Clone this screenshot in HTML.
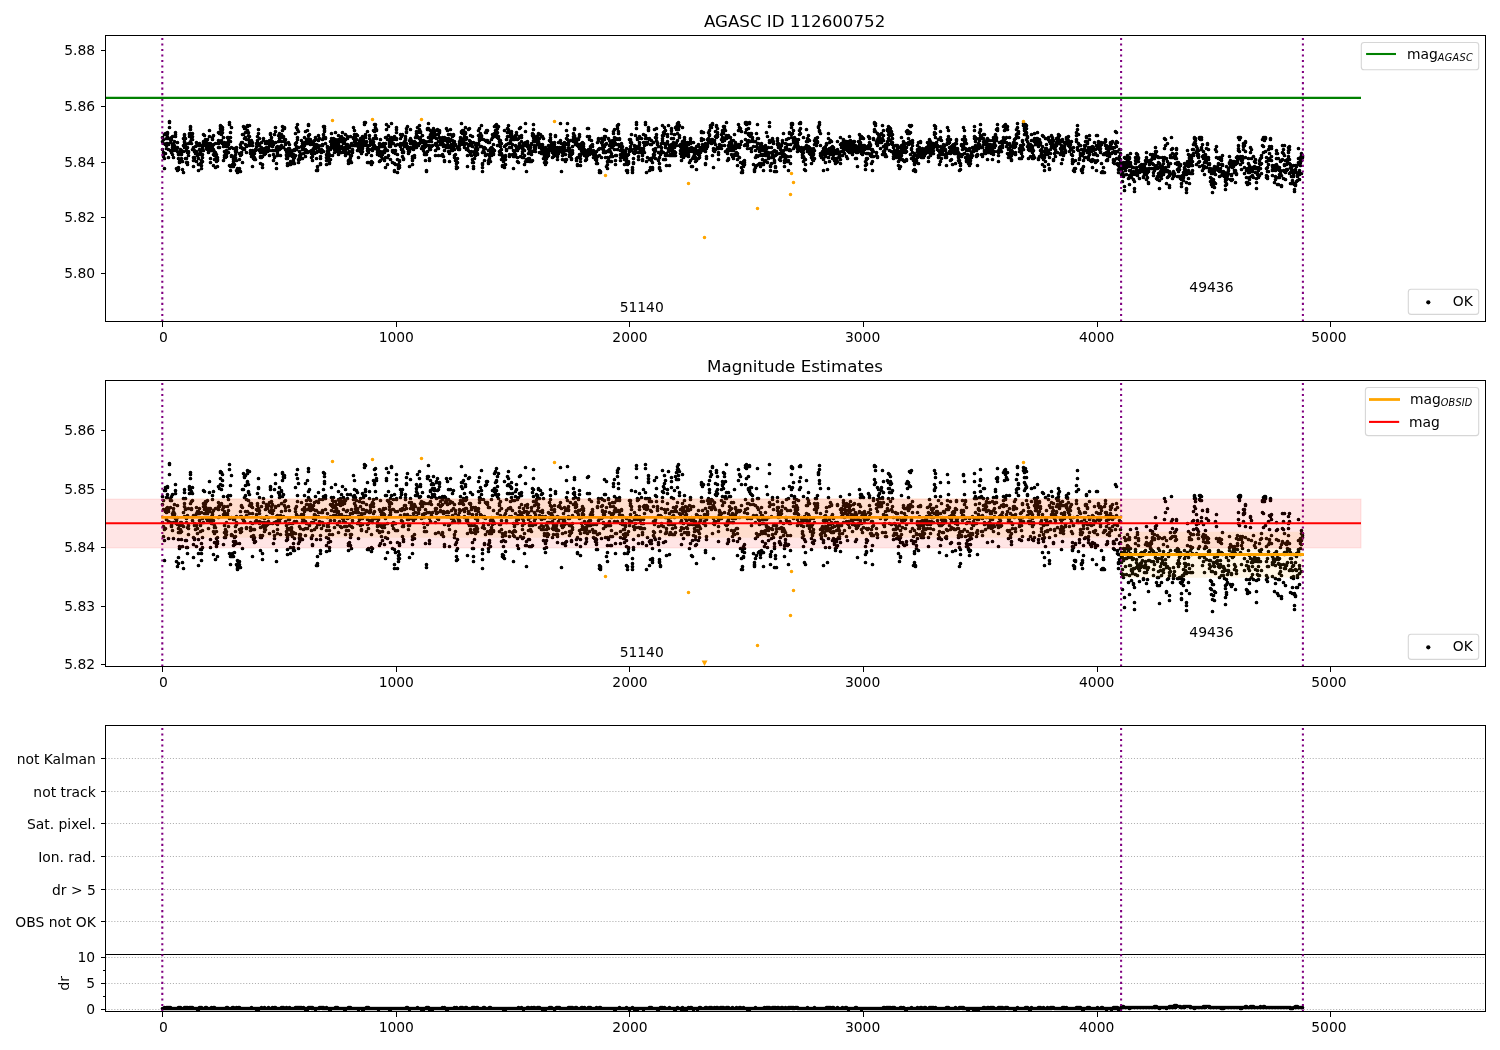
<!DOCTYPE html>
<html><head><meta charset="utf-8"><title>AGASC ID 112600752</title>
<style>html,body{margin:0;padding:0;background:#fff}body{width:1500px;height:1050px;overflow:hidden}</style></head>
<body>
<svg width="1500" height="1050" viewBox="0 0 1500 1050" style="display:block;will-change:transform;font-family:'DejaVu Sans','Liberation Sans',sans-serif;">
<rect width="1500" height="1050" fill="#fff"/>
<defs>
<clipPath id="c1"><rect x="105.5" y="35.5" width="1380.0" height="286.0"/></clipPath>
<clipPath id="c2"><rect x="105.5" y="380.5" width="1380.0" height="286.0"/></clipPath>
<clipPath id="c3"><rect x="105.5" y="725.5" width="1380.0" height="286.0"/></clipPath>
</defs>
<g clip-path="url(#c1)">
<path d="M162.5 137.5h0M162.5 141.5h0M162.5 149.5h0M163.5 139.5h0M163.5 143.5h0M163.5 152.5h0M163.5 156.5h0M164.5 134.5h0M164.5 153.5h0M164.5 158.5h0M164.5 168.5h0M165.5 133.5h0M165.5 134.5h0M165.5 144.5h0M165.5 153.5h0M166.5 138.5h0M166.5 143.5h0M166.5 145.5h0M166.5 148.5h0M167.5 132.5h0M167.5 133.5h0M167.5 136.5h0M167.5 138.5h0M167.5 143.5h0M168.5 144.5h0M168.5 149.5h0M168.5 157.5h0M169.5 121.5h0M169.5 122.5h0M169.5 127.5h0M170.5 138.5h0M170.5 139.5h0M170.5 142.5h0M170.5 150.5h0M171.5 137.5h0M171.5 139.5h0M171.5 151.5h0M171.5 152.5h0M172.5 136.5h0M172.5 145.5h0M172.5 147.5h0M172.5 154.5h0M173.5 143.5h0M173.5 144.5h0M173.5 145.5h0M173.5 150.5h0M173.5 157.5h0M174.5 141.5h0M174.5 145.5h0M174.5 146.5h0M174.5 147.5h0M175.5 132.5h0M175.5 134.5h0M175.5 136.5h0M175.5 148.5h0M176.5 148.5h0M176.5 149.5h0M176.5 150.5h0M176.5 168.5h0M177.5 142.5h0M177.5 147.5h0M177.5 151.5h0M177.5 170.5h0M178.5 153.5h0M178.5 154.5h0M178.5 158.5h0M178.5 167.5h0M178.5 169.5h0M179.5 151.5h0M179.5 161.5h0M179.5 162.5h0M180.5 149.5h0M180.5 150.5h0M180.5 153.5h0M180.5 154.5h0M181.5 150.5h0M181.5 154.5h0M181.5 158.5h0M182.5 151.5h0M182.5 161.5h0M182.5 169.5h0M183.5 138.5h0M183.5 145.5h0M183.5 151.5h0M183.5 172.5h0M184.5 134.5h0M184.5 135.5h0M184.5 141.5h0M184.5 142.5h0M184.5 147.5h0M185.5 138.5h0M185.5 143.5h0M185.5 144.5h0M185.5 158.5h0M186.5 148.5h0M186.5 150.5h0M186.5 158.5h0M186.5 162.5h0M187.5 147.5h0M187.5 152.5h0M187.5 162.5h0M187.5 164.5h0M188.5 143.5h0M188.5 151.5h0M188.5 152.5h0M188.5 155.5h0M189.5 133.5h0M189.5 134.5h0M189.5 136.5h0M190.5 126.5h0M190.5 127.5h0M190.5 129.5h0M190.5 133.5h0M190.5 141.5h0M191.5 135.5h0M191.5 139.5h0M191.5 143.5h0M192.5 133.5h0M192.5 136.5h0M192.5 139.5h0M192.5 149.5h0M193.5 147.5h0M193.5 157.5h0M193.5 160.5h0M193.5 166.5h0M194.5 150.5h0M194.5 151.5h0M194.5 157.5h0M194.5 158.5h0M195.5 146.5h0M195.5 151.5h0M195.5 153.5h0M196.5 142.5h0M196.5 145.5h0M196.5 151.5h0M196.5 161.5h0M197.5 145.5h0M197.5 153.5h0M197.5 155.5h0M198.5 145.5h0M198.5 158.5h0M198.5 164.5h0M198.5 170.5h0M199.5 143.5h0M199.5 145.5h0M199.5 149.5h0M200.5 150.5h0M200.5 151.5h0M200.5 154.5h0M200.5 163.5h0M201.5 145.5h0M201.5 160.5h0M201.5 162.5h0M201.5 165.5h0M201.5 168.5h0M202.5 148.5h0M202.5 154.5h0M202.5 157.5h0M202.5 161.5h0M203.5 134.5h0M203.5 141.5h0M203.5 142.5h0M203.5 150.5h0M204.5 135.5h0M204.5 142.5h0M204.5 144.5h0M204.5 145.5h0M205.5 139.5h0M205.5 141.5h0M205.5 142.5h0M205.5 143.5h0M206.5 140.5h0M206.5 144.5h0M206.5 145.5h0M206.5 148.5h0M207.5 139.5h0M207.5 144.5h0M207.5 145.5h0M207.5 148.5h0M207.5 149.5h0M208.5 143.5h0M208.5 147.5h0M208.5 148.5h0M208.5 152.5h0M209.5 130.5h0M209.5 136.5h0M209.5 143.5h0M209.5 145.5h0M210.5 143.5h0M210.5 150.5h0M210.5 158.5h0M210.5 162.5h0M211.5 147.5h0M211.5 149.5h0M211.5 150.5h0M212.5 137.5h0M212.5 139.5h0M212.5 145.5h0M212.5 146.5h0M213.5 135.5h0M213.5 144.5h0M213.5 149.5h0M213.5 154.5h0M213.5 165.5h0M214.5 151.5h0M214.5 152.5h0M214.5 155.5h0M214.5 159.5h0M215.5 143.5h0M215.5 152.5h0M215.5 159.5h0M215.5 167.5h0M216.5 154.5h0M216.5 157.5h0M216.5 160.5h0M216.5 161.5h0M217.5 157.5h0M217.5 159.5h0M217.5 160.5h0M217.5 166.5h0M218.5 132.5h0M218.5 140.5h0M218.5 142.5h0M218.5 143.5h0M218.5 147.5h0M219.5 133.5h0M219.5 141.5h0M219.5 142.5h0M219.5 147.5h0M220.5 125.5h0M220.5 126.5h0M220.5 128.5h0M220.5 131.5h0M221.5 126.5h0M221.5 134.5h0M221.5 140.5h0M221.5 141.5h0M222.5 127.5h0M222.5 129.5h0M222.5 132.5h0M222.5 143.5h0M223.5 137.5h0M223.5 143.5h0M223.5 146.5h0M223.5 160.5h0M224.5 142.5h0M224.5 144.5h0M224.5 151.5h0M224.5 155.5h0M224.5 157.5h0M225.5 153.5h0M225.5 155.5h0M225.5 156.5h0M225.5 157.5h0M226.5 146.5h0M226.5 150.5h0M226.5 154.5h0M226.5 156.5h0M227.5 137.5h0M227.5 142.5h0M227.5 145.5h0M227.5 146.5h0M228.5 137.5h0M228.5 139.5h0M228.5 144.5h0M228.5 152.5h0M229.5 122.5h0M229.5 124.5h0M229.5 148.5h0M229.5 165.5h0M230.5 132.5h0M230.5 137.5h0M230.5 141.5h0M230.5 166.5h0M230.5 170.5h0M231.5 127.5h0M231.5 147.5h0M231.5 155.5h0M231.5 156.5h0M232.5 156.5h0M232.5 164.5h0M232.5 166.5h0M233.5 148.5h0M233.5 159.5h0M233.5 161.5h0M233.5 166.5h0M234.5 148.5h0M234.5 157.5h0M234.5 160.5h0M234.5 164.5h0M235.5 151.5h0M235.5 154.5h0M235.5 157.5h0M235.5 158.5h0M236.5 147.5h0M236.5 149.5h0M236.5 151.5h0M236.5 160.5h0M236.5 170.5h0M237.5 168.5h0M237.5 171.5h0M237.5 172.5h0M238.5 169.5h0M238.5 170.5h0M239.5 153.5h0M239.5 159.5h0M239.5 168.5h0M239.5 170.5h0M240.5 144.5h0M240.5 147.5h0M240.5 155.5h0M240.5 171.5h0M241.5 142.5h0M241.5 147.5h0M241.5 152.5h0M241.5 154.5h0M242.5 134.5h0M242.5 142.5h0M242.5 148.5h0M242.5 162.5h0M243.5 126.5h0M243.5 134.5h0M243.5 148.5h0M243.5 149.5h0M244.5 128.5h0M244.5 138.5h0M244.5 149.5h0M245.5 127.5h0M245.5 132.5h0M245.5 137.5h0M245.5 144.5h0M246.5 139.5h0M246.5 146.5h0M246.5 152.5h0M247.5 125.5h0M247.5 126.5h0M247.5 130.5h0M247.5 145.5h0M248.5 132.5h0M248.5 135.5h0M248.5 139.5h0M249.5 125.5h0M249.5 136.5h0M249.5 142.5h0M249.5 145.5h0M250.5 141.5h0M250.5 150.5h0M250.5 152.5h0M250.5 153.5h0M251.5 140.5h0M251.5 141.5h0M251.5 142.5h0M251.5 156.5h0M252.5 142.5h0M252.5 145.5h0M252.5 150.5h0M252.5 166.5h0M253.5 153.5h0M253.5 156.5h0M253.5 158.5h0M254.5 153.5h0M254.5 157.5h0M254.5 158.5h0M254.5 159.5h0M255.5 149.5h0M255.5 150.5h0M255.5 159.5h0M256.5 143.5h0M256.5 146.5h0M256.5 149.5h0M257.5 136.5h0M257.5 140.5h0M257.5 142.5h0M257.5 144.5h0M258.5 129.5h0M258.5 133.5h0M258.5 143.5h0M259.5 138.5h0M259.5 144.5h0M259.5 145.5h0M259.5 149.5h0M259.5 150.5h0M260.5 152.5h0M260.5 156.5h0M260.5 157.5h0M260.5 163.5h0M261.5 142.5h0M261.5 147.5h0M261.5 149.5h0M261.5 157.5h0M262.5 152.5h0M262.5 156.5h0M262.5 164.5h0M262.5 167.5h0M263.5 138.5h0M263.5 140.5h0M263.5 150.5h0M264.5 148.5h0M264.5 150.5h0M264.5 151.5h0M264.5 152.5h0M264.5 154.5h0M265.5 143.5h0M265.5 150.5h0M265.5 151.5h0M265.5 153.5h0M266.5 141.5h0M266.5 142.5h0M266.5 147.5h0M266.5 151.5h0M267.5 143.5h0M267.5 149.5h0M267.5 150.5h0M267.5 151.5h0M268.5 141.5h0M268.5 147.5h0M268.5 149.5h0M269.5 140.5h0M269.5 144.5h0M269.5 150.5h0M269.5 155.5h0M270.5 133.5h0M270.5 134.5h0M270.5 140.5h0M270.5 145.5h0M271.5 137.5h0M271.5 140.5h0M271.5 142.5h0M271.5 143.5h0M272.5 141.5h0M272.5 144.5h0M272.5 146.5h0M272.5 150.5h0M273.5 144.5h0M273.5 154.5h0M273.5 160.5h0M274.5 134.5h0M274.5 150.5h0M274.5 156.5h0M274.5 157.5h0M275.5 127.5h0M275.5 131.5h0M275.5 142.5h0M276.5 147.5h0M276.5 149.5h0M276.5 150.5h0M276.5 163.5h0M276.5 168.5h0M277.5 146.5h0M277.5 151.5h0M277.5 153.5h0M277.5 155.5h0M278.5 135.5h0M278.5 141.5h0M278.5 148.5h0M278.5 149.5h0M279.5 133.5h0M279.5 136.5h0M279.5 138.5h0M279.5 149.5h0M280.5 146.5h0M280.5 147.5h0M280.5 148.5h0M280.5 155.5h0M281.5 134.5h0M281.5 135.5h0M281.5 141.5h0M281.5 145.5h0M281.5 147.5h0M282.5 126.5h0M282.5 130.5h0M282.5 137.5h0M283.5 128.5h0M283.5 136.5h0M283.5 147.5h0M284.5 127.5h0M284.5 128.5h0M284.5 140.5h0M284.5 141.5h0M285.5 139.5h0M285.5 142.5h0M285.5 144.5h0M285.5 149.5h0M286.5 151.5h0M286.5 154.5h0M286.5 155.5h0M286.5 158.5h0M287.5 153.5h0M287.5 157.5h0M287.5 158.5h0M287.5 163.5h0M287.5 165.5h0M288.5 142.5h0M288.5 148.5h0M288.5 153.5h0M288.5 155.5h0M289.5 144.5h0M289.5 148.5h0M289.5 150.5h0M289.5 153.5h0M290.5 155.5h0M290.5 161.5h0M290.5 164.5h0M291.5 152.5h0M291.5 153.5h0M291.5 154.5h0M292.5 150.5h0M292.5 155.5h0M292.5 156.5h0M293.5 154.5h0M293.5 159.5h0M293.5 161.5h0M293.5 162.5h0M293.5 163.5h0M294.5 149.5h0M294.5 150.5h0M294.5 157.5h0M294.5 163.5h0M295.5 133.5h0M295.5 143.5h0M295.5 144.5h0M295.5 155.5h0M296.5 127.5h0M296.5 142.5h0M296.5 146.5h0M296.5 149.5h0M297.5 124.5h0M297.5 129.5h0M297.5 137.5h0M297.5 139.5h0M298.5 131.5h0M298.5 147.5h0M298.5 159.5h0M298.5 162.5h0M299.5 151.5h0M299.5 155.5h0M299.5 157.5h0M299.5 159.5h0M300.5 153.5h0M300.5 155.5h0M300.5 157.5h0M301.5 140.5h0M301.5 146.5h0M302.5 143.5h0M302.5 148.5h0M302.5 149.5h0M302.5 158.5h0M303.5 146.5h0M303.5 148.5h0M303.5 149.5h0M303.5 153.5h0M304.5 137.5h0M304.5 142.5h0M304.5 143.5h0M304.5 145.5h0M305.5 131.5h0M305.5 149.5h0M305.5 152.5h0M305.5 156.5h0M306.5 139.5h0M306.5 141.5h0M306.5 150.5h0M307.5 130.5h0M307.5 141.5h0M307.5 143.5h0M307.5 152.5h0M308.5 124.5h0M308.5 125.5h0M308.5 135.5h0M308.5 138.5h0M309.5 134.5h0M309.5 139.5h0M309.5 143.5h0M309.5 151.5h0M310.5 139.5h0M310.5 141.5h0M310.5 142.5h0M310.5 143.5h0M310.5 144.5h0M311.5 150.5h0M311.5 153.5h0M311.5 157.5h0M312.5 142.5h0M312.5 156.5h0M312.5 160.5h0M313.5 141.5h0M313.5 144.5h0M313.5 148.5h0M313.5 150.5h0M314.5 140.5h0M314.5 146.5h0M314.5 153.5h0M315.5 137.5h0M315.5 144.5h0M315.5 146.5h0M315.5 148.5h0M316.5 139.5h0M316.5 144.5h0M316.5 152.5h0M316.5 158.5h0M316.5 170.5h0M317.5 151.5h0M317.5 166.5h0M317.5 169.5h0M317.5 170.5h0M318.5 135.5h0M318.5 140.5h0M318.5 145.5h0M318.5 147.5h0M319.5 138.5h0M319.5 149.5h0M319.5 151.5h0M320.5 156.5h0M320.5 158.5h0M320.5 163.5h0M320.5 164.5h0M321.5 145.5h0M321.5 149.5h0M321.5 152.5h0M322.5 139.5h0M322.5 144.5h0M322.5 145.5h0M322.5 150.5h0M323.5 126.5h0M323.5 134.5h0M323.5 137.5h0M323.5 151.5h0M324.5 126.5h0M324.5 128.5h0M324.5 130.5h0M324.5 131.5h0M325.5 137.5h0M325.5 138.5h0M325.5 143.5h0M326.5 154.5h0M326.5 157.5h0M326.5 160.5h0M326.5 164.5h0M327.5 146.5h0M327.5 147.5h0M327.5 150.5h0M327.5 151.5h0M327.5 152.5h0M328.5 150.5h0M328.5 152.5h0M328.5 157.5h0M328.5 159.5h0M329.5 154.5h0M329.5 155.5h0M329.5 162.5h0M329.5 163.5h0M330.5 141.5h0M330.5 147.5h0M330.5 149.5h0M330.5 159.5h0M331.5 133.5h0M331.5 138.5h0M331.5 142.5h0M331.5 144.5h0M332.5 139.5h0M332.5 141.5h0M332.5 142.5h0M332.5 155.5h0M333.5 138.5h0M333.5 139.5h0M333.5 143.5h0M333.5 146.5h0M333.5 147.5h0M334.5 142.5h0M334.5 144.5h0M334.5 149.5h0M334.5 152.5h0M335.5 132.5h0M335.5 139.5h0M335.5 142.5h0M335.5 146.5h0M336.5 141.5h0M336.5 143.5h0M336.5 144.5h0M337.5 145.5h0M337.5 147.5h0M337.5 150.5h0M337.5 151.5h0M338.5 135.5h0M338.5 139.5h0M338.5 144.5h0M338.5 154.5h0M339.5 139.5h0M339.5 141.5h0M339.5 146.5h0M339.5 149.5h0M340.5 138.5h0M340.5 141.5h0M340.5 147.5h0M340.5 152.5h0M341.5 136.5h0M341.5 141.5h0M341.5 146.5h0M341.5 152.5h0M342.5 132.5h0M342.5 140.5h0M342.5 141.5h0M342.5 148.5h0M343.5 138.5h0M343.5 143.5h0M343.5 148.5h0M343.5 149.5h0M344.5 139.5h0M344.5 140.5h0M344.5 141.5h0M344.5 147.5h0M344.5 152.5h0M345.5 134.5h0M345.5 139.5h0M345.5 150.5h0M345.5 155.5h0M346.5 144.5h0M346.5 147.5h0M346.5 152.5h0M346.5 153.5h0M347.5 136.5h0M347.5 138.5h0M347.5 144.5h0M347.5 148.5h0M348.5 153.5h0M348.5 160.5h0M348.5 161.5h0M348.5 163.5h0M349.5 147.5h0M349.5 151.5h0M349.5 159.5h0M350.5 136.5h0M350.5 145.5h0M350.5 155.5h0M350.5 157.5h0M350.5 160.5h0M351.5 143.5h0M351.5 151.5h0M351.5 155.5h0M351.5 162.5h0M352.5 145.5h0M352.5 149.5h0M352.5 150.5h0M352.5 152.5h0M353.5 127.5h0M353.5 137.5h0M353.5 138.5h0M353.5 145.5h0M354.5 130.5h0M354.5 134.5h0M354.5 137.5h0M354.5 141.5h0M355.5 138.5h0M355.5 142.5h0M355.5 143.5h0M355.5 145.5h0M356.5 134.5h0M356.5 139.5h0M356.5 143.5h0M356.5 145.5h0M357.5 135.5h0M357.5 143.5h0M357.5 150.5h0M358.5 145.5h0M358.5 147.5h0M358.5 150.5h0M358.5 157.5h0M359.5 140.5h0M359.5 147.5h0M359.5 148.5h0M360.5 138.5h0M360.5 142.5h0M360.5 150.5h0M360.5 151.5h0M361.5 145.5h0M361.5 146.5h0M361.5 153.5h0M362.5 136.5h0M362.5 140.5h0M362.5 144.5h0M362.5 148.5h0M362.5 151.5h0M363.5 137.5h0M363.5 138.5h0M363.5 140.5h0M363.5 143.5h0M364.5 122.5h0M364.5 124.5h0M364.5 145.5h0M365.5 122.5h0M365.5 134.5h0M365.5 135.5h0M365.5 137.5h0M366.5 141.5h0M366.5 144.5h0M366.5 154.5h0M367.5 131.5h0M367.5 145.5h0M367.5 148.5h0M367.5 150.5h0M367.5 162.5h0M368.5 150.5h0M368.5 152.5h0M368.5 162.5h0M369.5 135.5h0M369.5 138.5h0M369.5 145.5h0M369.5 149.5h0M370.5 141.5h0M370.5 142.5h0M370.5 144.5h0M371.5 141.5h0M371.5 155.5h0M371.5 161.5h0M371.5 164.5h0M372.5 140.5h0M372.5 148.5h0M372.5 150.5h0M372.5 162.5h0M373.5 130.5h0M373.5 138.5h0M373.5 141.5h0M373.5 142.5h0M373.5 145.5h0M374.5 124.5h0M374.5 131.5h0M374.5 145.5h0M375.5 124.5h0M375.5 127.5h0M375.5 135.5h0M375.5 148.5h0M376.5 129.5h0M376.5 130.5h0M376.5 138.5h0M376.5 147.5h0M377.5 149.5h0M377.5 150.5h0M377.5 152.5h0M377.5 154.5h0M378.5 147.5h0M378.5 148.5h0M378.5 151.5h0M379.5 143.5h0M379.5 144.5h0M379.5 154.5h0M379.5 155.5h0M379.5 161.5h0M380.5 139.5h0M380.5 145.5h0M380.5 151.5h0M380.5 160.5h0M381.5 144.5h0M381.5 146.5h0M381.5 152.5h0M381.5 156.5h0M382.5 152.5h0M382.5 154.5h0M382.5 158.5h0M383.5 143.5h0M383.5 146.5h0M383.5 151.5h0M384.5 146.5h0M384.5 150.5h0M384.5 152.5h0M384.5 160.5h0M385.5 137.5h0M385.5 143.5h0M385.5 148.5h0M385.5 157.5h0M385.5 167.5h0M386.5 124.5h0M386.5 129.5h0M386.5 137.5h0M387.5 139.5h0M387.5 150.5h0M387.5 157.5h0M387.5 164.5h0M388.5 126.5h0M388.5 135.5h0M388.5 139.5h0M388.5 155.5h0M389.5 140.5h0M389.5 142.5h0M389.5 144.5h0M389.5 146.5h0M390.5 138.5h0M390.5 140.5h0M390.5 145.5h0M390.5 146.5h0M390.5 159.5h0M391.5 123.5h0M391.5 137.5h0M391.5 141.5h0M392.5 143.5h0M392.5 150.5h0M392.5 151.5h0M392.5 162.5h0M393.5 139.5h0M393.5 143.5h0M393.5 150.5h0M393.5 152.5h0M394.5 136.5h0M394.5 163.5h0M394.5 170.5h0M394.5 171.5h0M395.5 145.5h0M395.5 150.5h0M395.5 153.5h0M395.5 164.5h0M396.5 127.5h0M396.5 129.5h0M396.5 132.5h0M396.5 138.5h0M396.5 139.5h0M397.5 144.5h0M397.5 154.5h0M397.5 159.5h0M397.5 172.5h0M398.5 164.5h0M398.5 165.5h0M398.5 167.5h0M398.5 168.5h0M399.5 160.5h0M399.5 161.5h0M399.5 165.5h0M399.5 167.5h0M400.5 134.5h0M400.5 138.5h0M400.5 143.5h0M400.5 146.5h0M401.5 135.5h0M401.5 136.5h0M401.5 144.5h0M401.5 149.5h0M402.5 134.5h0M402.5 143.5h0M402.5 149.5h0M402.5 152.5h0M402.5 156.5h0M403.5 151.5h0M403.5 152.5h0M403.5 158.5h0M403.5 159.5h0M404.5 141.5h0M404.5 143.5h0M404.5 144.5h0M404.5 146.5h0M405.5 136.5h0M405.5 138.5h0M405.5 139.5h0M405.5 142.5h0M406.5 128.5h0M406.5 131.5h0M406.5 132.5h0M406.5 143.5h0M407.5 126.5h0M407.5 146.5h0M407.5 148.5h0M408.5 147.5h0M408.5 148.5h0M408.5 151.5h0M408.5 153.5h0M409.5 140.5h0M409.5 150.5h0M409.5 151.5h0M409.5 166.5h0M410.5 129.5h0M410.5 138.5h0M410.5 143.5h0M410.5 147.5h0M411.5 140.5h0M411.5 142.5h0M411.5 148.5h0M412.5 156.5h0M412.5 158.5h0M412.5 160.5h0M412.5 164.5h0M413.5 142.5h0M413.5 143.5h0M413.5 145.5h0M413.5 147.5h0M413.5 149.5h0M414.5 141.5h0M414.5 142.5h0M414.5 155.5h0M414.5 157.5h0M415.5 137.5h0M415.5 142.5h0M415.5 145.5h0M415.5 147.5h0M416.5 131.5h0M416.5 133.5h0M416.5 135.5h0M416.5 147.5h0M417.5 127.5h0M417.5 132.5h0M417.5 136.5h0M417.5 137.5h0M418.5 143.5h0M418.5 144.5h0M418.5 145.5h0M419.5 125.5h0M419.5 129.5h0M419.5 138.5h0M419.5 143.5h0M420.5 131.5h0M420.5 132.5h0M420.5 137.5h0M420.5 140.5h0M421.5 140.5h0M421.5 141.5h0M421.5 142.5h0M421.5 148.5h0M422.5 135.5h0M422.5 141.5h0M422.5 142.5h0M422.5 146.5h0M423.5 140.5h0M423.5 141.5h0M423.5 146.5h0M423.5 150.5h0M424.5 145.5h0M424.5 147.5h0M424.5 152.5h0M424.5 154.5h0M425.5 141.5h0M425.5 143.5h0M425.5 146.5h0M425.5 160.5h0M426.5 154.5h0M426.5 170.5h0M426.5 171.5h0M427.5 128.5h0M427.5 129.5h0M427.5 145.5h0M427.5 151.5h0M428.5 123.5h0M428.5 128.5h0M428.5 137.5h0M428.5 141.5h0M429.5 145.5h0M429.5 148.5h0M429.5 158.5h0M429.5 160.5h0M430.5 130.5h0M430.5 134.5h0M430.5 135.5h0M430.5 140.5h0M430.5 149.5h0M431.5 132.5h0M431.5 138.5h0M431.5 141.5h0M431.5 146.5h0M432.5 131.5h0M432.5 134.5h0M432.5 136.5h0M432.5 145.5h0M433.5 128.5h0M433.5 131.5h0M433.5 134.5h0M433.5 137.5h0M434.5 133.5h0M434.5 134.5h0M434.5 136.5h0M434.5 137.5h0M435.5 143.5h0M435.5 144.5h0M435.5 150.5h0M435.5 155.5h0M436.5 130.5h0M436.5 138.5h0M436.5 143.5h0M436.5 145.5h0M437.5 129.5h0M437.5 134.5h0M437.5 145.5h0M437.5 148.5h0M438.5 134.5h0M438.5 141.5h0M438.5 148.5h0M438.5 155.5h0M439.5 130.5h0M439.5 131.5h0M439.5 132.5h0M439.5 137.5h0M440.5 139.5h0M440.5 142.5h0M440.5 144.5h0M441.5 141.5h0M441.5 144.5h0M441.5 155.5h0M442.5 137.5h0M442.5 139.5h0M442.5 141.5h0M442.5 154.5h0M442.5 155.5h0M443.5 144.5h0M443.5 145.5h0M443.5 146.5h0M443.5 156.5h0M444.5 137.5h0M444.5 150.5h0M444.5 160.5h0M444.5 161.5h0M445.5 138.5h0M445.5 140.5h0M445.5 145.5h0M446.5 128.5h0M446.5 138.5h0M446.5 140.5h0M446.5 147.5h0M447.5 130.5h0M447.5 141.5h0M447.5 144.5h0M447.5 147.5h0M448.5 134.5h0M448.5 138.5h0M448.5 145.5h0M448.5 147.5h0M448.5 151.5h0M449.5 141.5h0M449.5 151.5h0M449.5 153.5h0M449.5 161.5h0M450.5 129.5h0M450.5 134.5h0M450.5 139.5h0M451.5 140.5h0M451.5 144.5h0M451.5 147.5h0M451.5 148.5h0M452.5 136.5h0M452.5 140.5h0M452.5 146.5h0M452.5 150.5h0M453.5 134.5h0M453.5 135.5h0M453.5 143.5h0M453.5 148.5h0M454.5 141.5h0M454.5 149.5h0M454.5 155.5h0M454.5 157.5h0M455.5 144.5h0M455.5 145.5h0M455.5 154.5h0M455.5 160.5h0M456.5 159.5h0M456.5 163.5h0M456.5 166.5h0M456.5 168.5h0M457.5 147.5h0M457.5 158.5h0M457.5 162.5h0M457.5 167.5h0M458.5 146.5h0M458.5 148.5h0M458.5 149.5h0M459.5 141.5h0M459.5 143.5h0M459.5 145.5h0M459.5 148.5h0M459.5 149.5h0M460.5 137.5h0M460.5 139.5h0M460.5 144.5h0M461.5 123.5h0M461.5 131.5h0M461.5 132.5h0M461.5 140.5h0M462.5 130.5h0M462.5 133.5h0M462.5 140.5h0M462.5 141.5h0M463.5 130.5h0M463.5 138.5h0M463.5 141.5h0M463.5 144.5h0M464.5 136.5h0M464.5 144.5h0M464.5 147.5h0M465.5 127.5h0M465.5 132.5h0M465.5 133.5h0M465.5 139.5h0M465.5 143.5h0M466.5 137.5h0M466.5 138.5h0M466.5 143.5h0M466.5 149.5h0M467.5 148.5h0M467.5 149.5h0M467.5 155.5h0M467.5 166.5h0M468.5 129.5h0M468.5 144.5h0M468.5 145.5h0M468.5 150.5h0M469.5 128.5h0M469.5 140.5h0M469.5 145.5h0M469.5 151.5h0M470.5 135.5h0M470.5 141.5h0M470.5 153.5h0M470.5 154.5h0M471.5 142.5h0M471.5 144.5h0M471.5 151.5h0M471.5 155.5h0M472.5 136.5h0M472.5 146.5h0M472.5 159.5h0M472.5 162.5h0M473.5 142.5h0M473.5 162.5h0M473.5 166.5h0M473.5 168.5h0M474.5 151.5h0M474.5 153.5h0M474.5 154.5h0M474.5 158.5h0M475.5 143.5h0M475.5 144.5h0M475.5 148.5h0M475.5 155.5h0M476.5 143.5h0M476.5 146.5h0M476.5 151.5h0M476.5 153.5h0M477.5 148.5h0M477.5 149.5h0M477.5 153.5h0M477.5 154.5h0M478.5 130.5h0M478.5 135.5h0M478.5 143.5h0M478.5 144.5h0M479.5 128.5h0M479.5 138.5h0M479.5 139.5h0M479.5 140.5h0M480.5 133.5h0M480.5 138.5h0M480.5 139.5h0M480.5 146.5h0M481.5 125.5h0M481.5 135.5h0M481.5 136.5h0M481.5 146.5h0M482.5 152.5h0M482.5 163.5h0M482.5 164.5h0M482.5 167.5h0M482.5 171.5h0M483.5 139.5h0M483.5 147.5h0M483.5 150.5h0M483.5 151.5h0M484.5 147.5h0M484.5 152.5h0M484.5 160.5h0M485.5 132.5h0M485.5 140.5h0M485.5 148.5h0M485.5 155.5h0M486.5 130.5h0M486.5 132.5h0M486.5 140.5h0M486.5 141.5h0M487.5 130.5h0M487.5 140.5h0M487.5 141.5h0M487.5 154.5h0M488.5 142.5h0M488.5 150.5h0M488.5 160.5h0M488.5 162.5h0M488.5 163.5h0M489.5 142.5h0M489.5 155.5h0M489.5 158.5h0M489.5 159.5h0M490.5 148.5h0M490.5 149.5h0M490.5 153.5h0M490.5 161.5h0M491.5 139.5h0M491.5 147.5h0M491.5 152.5h0M491.5 155.5h0M492.5 134.5h0M492.5 137.5h0M492.5 148.5h0M492.5 151.5h0M493.5 144.5h0M493.5 149.5h0M493.5 153.5h0M493.5 154.5h0M494.5 126.5h0M494.5 133.5h0M494.5 135.5h0M494.5 150.5h0M495.5 125.5h0M495.5 130.5h0M495.5 136.5h0M496.5 124.5h0M496.5 130.5h0M496.5 134.5h0M497.5 128.5h0M497.5 132.5h0M497.5 137.5h0M497.5 145.5h0M498.5 126.5h0M498.5 136.5h0M498.5 138.5h0M499.5 141.5h0M499.5 144.5h0M499.5 151.5h0M499.5 154.5h0M500.5 140.5h0M500.5 146.5h0M500.5 150.5h0M501.5 143.5h0M501.5 149.5h0M501.5 153.5h0M501.5 159.5h0M502.5 155.5h0M502.5 156.5h0M502.5 165.5h0M502.5 166.5h0M503.5 158.5h0M503.5 161.5h0M503.5 165.5h0M503.5 166.5h0M504.5 130.5h0M504.5 146.5h0M504.5 156.5h0M504.5 167.5h0M505.5 145.5h0M505.5 155.5h0M505.5 156.5h0M505.5 159.5h0M505.5 164.5h0M506.5 139.5h0M506.5 144.5h0M506.5 149.5h0M506.5 150.5h0M507.5 128.5h0M507.5 132.5h0M507.5 136.5h0M508.5 125.5h0M508.5 129.5h0M508.5 132.5h0M508.5 143.5h0M509.5 136.5h0M509.5 147.5h0M509.5 154.5h0M509.5 156.5h0M510.5 133.5h0M510.5 140.5h0M510.5 142.5h0M510.5 143.5h0M511.5 131.5h0M511.5 133.5h0M511.5 134.5h0M511.5 138.5h0M511.5 147.5h0M512.5 136.5h0M512.5 139.5h0M512.5 144.5h0M512.5 154.5h0M513.5 150.5h0M513.5 154.5h0M513.5 156.5h0M513.5 168.5h0M514.5 139.5h0M514.5 151.5h0M514.5 153.5h0M514.5 156.5h0M515.5 135.5h0M515.5 137.5h0M515.5 145.5h0M515.5 154.5h0M516.5 132.5h0M516.5 134.5h0M516.5 147.5h0M516.5 149.5h0M516.5 150.5h0M517.5 139.5h0M517.5 150.5h0M517.5 157.5h0M517.5 161.5h0M518.5 138.5h0M518.5 146.5h0M518.5 148.5h0M518.5 162.5h0M519.5 128.5h0M519.5 136.5h0M519.5 143.5h0M519.5 144.5h0M520.5 127.5h0M520.5 136.5h0M520.5 145.5h0M520.5 156.5h0M521.5 135.5h0M521.5 137.5h0M521.5 141.5h0M521.5 147.5h0M522.5 147.5h0M522.5 148.5h0M522.5 151.5h0M522.5 153.5h0M522.5 157.5h0M523.5 143.5h0M523.5 145.5h0M523.5 149.5h0M523.5 157.5h0M524.5 145.5h0M524.5 150.5h0M524.5 155.5h0M524.5 164.5h0M525.5 123.5h0M525.5 131.5h0M525.5 142.5h0M525.5 161.5h0M526.5 144.5h0M526.5 159.5h0M526.5 161.5h0M526.5 171.5h0M527.5 141.5h0M527.5 142.5h0M527.5 145.5h0M527.5 146.5h0M528.5 145.5h0M528.5 148.5h0M528.5 153.5h0M528.5 158.5h0M529.5 150.5h0M529.5 151.5h0M529.5 158.5h0M529.5 161.5h0M530.5 147.5h0M530.5 150.5h0M530.5 153.5h0M531.5 143.5h0M531.5 144.5h0M531.5 154.5h0M531.5 161.5h0M532.5 133.5h0M532.5 135.5h0M532.5 151.5h0M532.5 160.5h0M533.5 124.5h0M533.5 129.5h0M533.5 134.5h0M533.5 137.5h0M533.5 140.5h0M534.5 141.5h0M534.5 145.5h0M534.5 147.5h0M534.5 149.5h0M535.5 146.5h0M535.5 147.5h0M535.5 148.5h0M535.5 151.5h0M536.5 136.5h0M536.5 139.5h0M536.5 140.5h0M536.5 141.5h0M537.5 137.5h0M537.5 141.5h0M537.5 144.5h0M538.5 133.5h0M538.5 134.5h0M538.5 141.5h0M538.5 142.5h0M539.5 138.5h0M539.5 146.5h0M539.5 147.5h0M539.5 152.5h0M540.5 134.5h0M540.5 144.5h0M540.5 147.5h0M541.5 136.5h0M541.5 148.5h0M541.5 151.5h0M541.5 153.5h0M542.5 136.5h0M542.5 144.5h0M542.5 145.5h0M542.5 147.5h0M543.5 138.5h0M543.5 151.5h0M543.5 153.5h0M543.5 158.5h0M544.5 148.5h0M544.5 155.5h0M544.5 156.5h0M544.5 162.5h0M545.5 147.5h0M545.5 159.5h0M545.5 160.5h0M545.5 164.5h0M546.5 151.5h0M546.5 153.5h0M546.5 158.5h0M546.5 162.5h0M547.5 149.5h0M547.5 151.5h0M547.5 155.5h0M547.5 156.5h0M548.5 145.5h0M548.5 150.5h0M548.5 153.5h0M548.5 155.5h0M549.5 140.5h0M549.5 146.5h0M549.5 147.5h0M549.5 150.5h0M550.5 134.5h0M550.5 137.5h0M550.5 139.5h0M550.5 141.5h0M551.5 142.5h0M551.5 143.5h0M551.5 145.5h0M551.5 147.5h0M552.5 146.5h0M552.5 149.5h0M552.5 152.5h0M552.5 157.5h0M553.5 151.5h0M553.5 153.5h0M553.5 156.5h0M554.5 142.5h0M554.5 144.5h0M554.5 148.5h0M555.5 135.5h0M555.5 136.5h0M555.5 147.5h0M555.5 150.5h0M556.5 151.5h0M556.5 152.5h0M556.5 153.5h0M556.5 155.5h0M557.5 147.5h0M557.5 155.5h0M557.5 156.5h0M557.5 159.5h0M558.5 142.5h0M558.5 149.5h0M558.5 150.5h0M558.5 153.5h0M559.5 142.5h0M559.5 147.5h0M559.5 148.5h0M560.5 123.5h0M560.5 140.5h0M560.5 142.5h0M561.5 143.5h0M561.5 147.5h0M561.5 151.5h0M561.5 171.5h0M562.5 148.5h0M562.5 152.5h0M562.5 155.5h0M562.5 159.5h0M563.5 145.5h0M563.5 149.5h0M563.5 150.5h0M563.5 152.5h0M564.5 142.5h0M564.5 147.5h0M564.5 149.5h0M564.5 150.5h0M565.5 144.5h0M565.5 154.5h0M565.5 159.5h0M565.5 161.5h0M566.5 130.5h0M566.5 138.5h0M566.5 150.5h0M566.5 159.5h0M567.5 123.5h0M567.5 135.5h0M567.5 139.5h0M567.5 143.5h0M568.5 142.5h0M568.5 144.5h0M568.5 147.5h0M568.5 148.5h0M569.5 148.5h0M569.5 151.5h0M569.5 154.5h0M569.5 156.5h0M570.5 140.5h0M570.5 154.5h0M570.5 155.5h0M571.5 151.5h0M571.5 154.5h0M571.5 158.5h0M571.5 159.5h0M572.5 146.5h0M572.5 150.5h0M572.5 152.5h0M572.5 153.5h0M573.5 133.5h0M573.5 136.5h0M573.5 138.5h0M573.5 141.5h0M574.5 128.5h0M574.5 129.5h0M574.5 135.5h0M574.5 136.5h0M574.5 141.5h0M575.5 138.5h0M575.5 140.5h0M575.5 143.5h0M575.5 144.5h0M576.5 141.5h0M576.5 142.5h0M576.5 158.5h0M576.5 160.5h0M577.5 145.5h0M577.5 157.5h0M577.5 164.5h0M577.5 165.5h0M578.5 138.5h0M578.5 139.5h0M578.5 144.5h0M578.5 146.5h0M579.5 134.5h0M579.5 136.5h0M579.5 144.5h0M579.5 148.5h0M579.5 154.5h0M580.5 155.5h0M580.5 158.5h0M580.5 161.5h0M580.5 165.5h0M581.5 143.5h0M581.5 147.5h0M581.5 150.5h0M581.5 153.5h0M582.5 142.5h0M582.5 145.5h0M582.5 146.5h0M582.5 151.5h0M583.5 143.5h0M583.5 144.5h0M583.5 146.5h0M584.5 149.5h0M584.5 152.5h0M584.5 153.5h0M584.5 155.5h0M585.5 150.5h0M585.5 152.5h0M585.5 154.5h0M585.5 160.5h0M586.5 152.5h0M586.5 153.5h0M586.5 157.5h0M586.5 159.5h0M587.5 128.5h0M587.5 136.5h0M587.5 151.5h0M587.5 155.5h0M588.5 128.5h0M588.5 149.5h0M588.5 150.5h0M588.5 151.5h0M589.5 136.5h0M589.5 139.5h0M589.5 149.5h0M589.5 154.5h0M590.5 146.5h0M590.5 149.5h0M590.5 151.5h0M591.5 140.5h0M591.5 145.5h0M591.5 146.5h0M592.5 144.5h0M592.5 146.5h0M592.5 153.5h0M593.5 150.5h0M593.5 151.5h0M593.5 154.5h0M593.5 157.5h0M594.5 154.5h0M594.5 157.5h0M595.5 154.5h0M595.5 155.5h0M595.5 157.5h0M595.5 159.5h0M596.5 151.5h0M596.5 158.5h0M596.5 159.5h0M596.5 160.5h0M596.5 163.5h0M597.5 142.5h0M597.5 156.5h0M597.5 163.5h0M598.5 138.5h0M598.5 139.5h0M598.5 140.5h0M598.5 149.5h0M599.5 148.5h0M599.5 155.5h0M599.5 170.5h0M599.5 172.5h0M600.5 171.5h0M600.5 172.5h0M601.5 138.5h0M601.5 142.5h0M601.5 148.5h0M601.5 157.5h0M602.5 139.5h0M602.5 141.5h0M602.5 144.5h0M602.5 147.5h0M603.5 146.5h0M603.5 149.5h0M603.5 150.5h0M603.5 152.5h0M604.5 129.5h0M604.5 136.5h0M604.5 139.5h0M604.5 146.5h0M605.5 136.5h0M605.5 144.5h0M605.5 152.5h0M605.5 157.5h0M606.5 130.5h0M606.5 143.5h0M606.5 151.5h0M606.5 166.5h0M607.5 157.5h0M607.5 161.5h0M607.5 164.5h0M607.5 168.5h0M608.5 138.5h0M608.5 150.5h0M608.5 151.5h0M608.5 158.5h0M609.5 140.5h0M609.5 145.5h0M609.5 149.5h0M609.5 151.5h0M610.5 142.5h0M610.5 151.5h0M610.5 156.5h0M610.5 161.5h0M611.5 146.5h0M611.5 147.5h0M611.5 153.5h0M611.5 161.5h0M612.5 140.5h0M612.5 145.5h0M612.5 146.5h0M612.5 156.5h0M613.5 131.5h0M613.5 133.5h0M613.5 142.5h0M613.5 145.5h0M614.5 129.5h0M614.5 137.5h0M614.5 140.5h0M614.5 144.5h0M614.5 149.5h0M615.5 143.5h0M615.5 155.5h0M615.5 160.5h0M615.5 164.5h0M616.5 138.5h0M616.5 139.5h0M616.5 144.5h0M616.5 155.5h0M617.5 125.5h0M617.5 126.5h0M617.5 128.5h0M617.5 149.5h0M618.5 124.5h0M618.5 131.5h0M618.5 133.5h0M618.5 144.5h0M619.5 138.5h0M619.5 139.5h0M619.5 145.5h0M619.5 146.5h0M620.5 150.5h0M620.5 154.5h0M620.5 157.5h0M620.5 160.5h0M621.5 143.5h0M621.5 144.5h0M621.5 146.5h0M621.5 147.5h0M622.5 146.5h0M622.5 149.5h0M622.5 151.5h0M623.5 150.5h0M623.5 153.5h0M623.5 156.5h0M623.5 157.5h0M624.5 153.5h0M624.5 157.5h0M624.5 159.5h0M624.5 164.5h0M625.5 150.5h0M625.5 151.5h0M625.5 152.5h0M625.5 155.5h0M625.5 156.5h0M626.5 148.5h0M626.5 158.5h0M626.5 161.5h0M626.5 170.5h0M627.5 155.5h0M627.5 164.5h0M627.5 170.5h0M627.5 172.5h0M628.5 154.5h0M628.5 161.5h0M628.5 162.5h0M628.5 163.5h0M629.5 139.5h0M629.5 149.5h0M629.5 151.5h0M630.5 139.5h0M630.5 140.5h0M630.5 142.5h0M630.5 146.5h0M631.5 134.5h0M631.5 142.5h0M631.5 143.5h0M631.5 149.5h0M631.5 150.5h0M632.5 167.5h0M632.5 169.5h0M632.5 170.5h0M632.5 172.5h0M633.5 152.5h0M633.5 158.5h0M633.5 162.5h0M633.5 163.5h0M634.5 145.5h0M634.5 148.5h0M634.5 153.5h0M635.5 135.5h0M635.5 147.5h0M635.5 150.5h0M635.5 152.5h0M636.5 122.5h0M636.5 124.5h0M636.5 128.5h0M636.5 146.5h0M637.5 138.5h0M637.5 139.5h0M637.5 147.5h0M637.5 148.5h0M638.5 138.5h0M638.5 152.5h0M638.5 156.5h0M638.5 159.5h0M639.5 136.5h0M639.5 142.5h0M639.5 144.5h0M639.5 147.5h0M640.5 148.5h0M640.5 150.5h0M640.5 152.5h0M641.5 138.5h0M641.5 148.5h0M641.5 150.5h0M642.5 152.5h0M642.5 155.5h0M642.5 159.5h0M642.5 160.5h0M643.5 134.5h0M643.5 142.5h0M643.5 148.5h0M643.5 150.5h0M644.5 142.5h0M644.5 143.5h0M644.5 145.5h0M644.5 152.5h0M645.5 122.5h0M645.5 124.5h0M645.5 135.5h0M645.5 138.5h0M646.5 142.5h0M646.5 144.5h0M646.5 161.5h0M646.5 172.5h0M647.5 138.5h0M647.5 142.5h0M647.5 143.5h0M647.5 157.5h0M648.5 127.5h0M648.5 129.5h0M648.5 130.5h0M649.5 138.5h0M649.5 139.5h0M649.5 159.5h0M649.5 170.5h0M650.5 144.5h0M650.5 158.5h0M650.5 159.5h0M650.5 167.5h0M651.5 140.5h0M651.5 144.5h0M651.5 158.5h0M651.5 160.5h0M652.5 162.5h0M652.5 167.5h0M652.5 168.5h0M652.5 169.5h0M653.5 142.5h0M653.5 149.5h0M653.5 154.5h0M653.5 156.5h0M654.5 129.5h0M654.5 149.5h0M654.5 151.5h0M654.5 154.5h0M654.5 157.5h0M655.5 137.5h0M655.5 148.5h0M655.5 150.5h0M655.5 158.5h0M656.5 128.5h0M656.5 134.5h0M656.5 137.5h0M656.5 140.5h0M657.5 142.5h0M657.5 143.5h0M657.5 144.5h0M658.5 146.5h0M658.5 152.5h0M658.5 159.5h0M658.5 160.5h0M659.5 157.5h0M659.5 163.5h0M659.5 167.5h0M659.5 168.5h0M660.5 146.5h0M660.5 154.5h0M660.5 170.5h0M661.5 143.5h0M661.5 147.5h0M661.5 150.5h0M661.5 151.5h0M662.5 125.5h0M662.5 135.5h0M662.5 138.5h0M662.5 140.5h0M663.5 132.5h0M663.5 135.5h0M663.5 152.5h0M663.5 159.5h0M664.5 127.5h0M664.5 131.5h0M664.5 133.5h0M664.5 143.5h0M665.5 130.5h0M665.5 145.5h0M665.5 147.5h0M665.5 155.5h0M665.5 159.5h0M666.5 153.5h0M666.5 154.5h0M666.5 155.5h0M666.5 165.5h0M667.5 134.5h0M667.5 136.5h0M667.5 141.5h0M667.5 143.5h0M668.5 125.5h0M668.5 148.5h0M668.5 149.5h0M668.5 151.5h0M669.5 145.5h0M669.5 150.5h0M669.5 155.5h0M669.5 165.5h0M670.5 147.5h0M670.5 149.5h0M670.5 154.5h0M670.5 155.5h0M671.5 128.5h0M671.5 130.5h0M671.5 133.5h0M671.5 138.5h0M671.5 144.5h0M672.5 147.5h0M672.5 150.5h0M672.5 152.5h0M672.5 155.5h0M673.5 138.5h0M673.5 142.5h0M673.5 145.5h0M673.5 146.5h0M674.5 134.5h0M674.5 147.5h0M674.5 151.5h0M674.5 155.5h0M675.5 127.5h0M675.5 143.5h0M675.5 152.5h0M675.5 155.5h0M676.5 126.5h0M676.5 129.5h0M676.5 142.5h0M676.5 145.5h0M677.5 123.5h0M677.5 124.5h0M677.5 133.5h0M677.5 140.5h0M678.5 122.5h0M678.5 124.5h0M678.5 127.5h0M678.5 129.5h0M679.5 125.5h0M679.5 135.5h0M679.5 137.5h0M679.5 145.5h0M680.5 144.5h0M680.5 146.5h0M680.5 150.5h0M680.5 153.5h0M681.5 148.5h0M681.5 152.5h0M681.5 156.5h0M681.5 160.5h0M682.5 127.5h0M682.5 141.5h0M682.5 142.5h0M682.5 144.5h0M682.5 145.5h0M683.5 143.5h0M683.5 150.5h0M683.5 153.5h0M683.5 157.5h0M684.5 137.5h0M684.5 139.5h0M684.5 147.5h0M684.5 154.5h0M685.5 142.5h0M685.5 144.5h0M685.5 147.5h0M685.5 148.5h0M686.5 146.5h0M686.5 149.5h0M686.5 152.5h0M686.5 155.5h0M687.5 142.5h0M687.5 143.5h0M687.5 153.5h0M687.5 155.5h0M688.5 144.5h0M688.5 150.5h0M688.5 154.5h0M688.5 155.5h0M688.5 156.5h0M689.5 142.5h0M689.5 148.5h0M689.5 151.5h0M689.5 162.5h0M690.5 138.5h0M690.5 139.5h0M690.5 143.5h0M690.5 160.5h0M691.5 142.5h0M691.5 147.5h0M691.5 149.5h0M691.5 166.5h0M692.5 148.5h0M692.5 151.5h0M692.5 158.5h0M692.5 166.5h0M693.5 142.5h0M693.5 148.5h0M693.5 151.5h0M693.5 156.5h0M694.5 149.5h0M694.5 151.5h0M694.5 152.5h0M694.5 154.5h0M695.5 149.5h0M695.5 157.5h0M695.5 158.5h0M695.5 161.5h0M696.5 146.5h0M696.5 151.5h0M696.5 160.5h0M696.5 169.5h0M697.5 146.5h0M697.5 152.5h0M697.5 153.5h0M698.5 144.5h0M698.5 150.5h0M698.5 154.5h0M698.5 158.5h0M699.5 150.5h0M699.5 152.5h0M699.5 155.5h0M699.5 157.5h0M700.5 147.5h0M700.5 148.5h0M700.5 149.5h0M700.5 152.5h0M701.5 131.5h0M701.5 132.5h0M701.5 138.5h0M701.5 140.5h0M702.5 132.5h0M702.5 144.5h0M702.5 147.5h0M703.5 132.5h0M703.5 139.5h0M703.5 147.5h0M703.5 150.5h0M704.5 146.5h0M704.5 149.5h0M704.5 150.5h0M705.5 143.5h0M705.5 146.5h0M705.5 151.5h0M705.5 163.5h0M705.5 164.5h0M706.5 146.5h0M706.5 148.5h0M706.5 156.5h0M706.5 158.5h0M707.5 139.5h0M707.5 144.5h0M707.5 145.5h0M707.5 146.5h0M708.5 132.5h0M708.5 138.5h0M708.5 139.5h0M708.5 141.5h0M709.5 130.5h0M709.5 134.5h0M709.5 135.5h0M709.5 142.5h0M710.5 125.5h0M710.5 127.5h0M710.5 140.5h0M710.5 141.5h0M711.5 127.5h0M711.5 139.5h0M711.5 142.5h0M711.5 143.5h0M712.5 123.5h0M712.5 124.5h0M712.5 139.5h0M712.5 155.5h0M713.5 142.5h0M713.5 148.5h0M713.5 150.5h0M713.5 167.5h0M714.5 140.5h0M714.5 142.5h0M714.5 149.5h0M714.5 151.5h0M715.5 131.5h0M715.5 136.5h0M715.5 144.5h0M715.5 149.5h0M716.5 125.5h0M716.5 126.5h0M716.5 135.5h0M716.5 137.5h0M717.5 128.5h0M717.5 132.5h0M717.5 134.5h0M717.5 136.5h0M717.5 147.5h0M718.5 148.5h0M718.5 152.5h0M718.5 154.5h0M718.5 159.5h0M719.5 144.5h0M719.5 146.5h0M720.5 145.5h0M720.5 146.5h0M720.5 147.5h0M721.5 134.5h0M721.5 139.5h0M721.5 145.5h0M721.5 148.5h0M722.5 130.5h0M722.5 132.5h0M722.5 137.5h0M722.5 141.5h0M723.5 126.5h0M723.5 131.5h0M723.5 133.5h0M723.5 140.5h0M724.5 126.5h0M724.5 128.5h0M724.5 140.5h0M724.5 145.5h0M725.5 130.5h0M725.5 137.5h0M725.5 138.5h0M725.5 151.5h0M726.5 122.5h0M726.5 135.5h0M726.5 138.5h0M726.5 151.5h0M727.5 149.5h0M727.5 150.5h0M727.5 153.5h0M727.5 160.5h0M728.5 135.5h0M728.5 145.5h0M728.5 148.5h0M728.5 158.5h0M728.5 159.5h0M729.5 137.5h0M729.5 142.5h0M729.5 144.5h0M729.5 150.5h0M730.5 137.5h0M730.5 143.5h0M730.5 147.5h0M731.5 140.5h0M731.5 143.5h0M731.5 146.5h0M731.5 154.5h0M732.5 145.5h0M732.5 148.5h0M732.5 150.5h0M732.5 156.5h0M733.5 140.5h0M733.5 150.5h0M733.5 155.5h0M733.5 158.5h0M734.5 134.5h0M734.5 146.5h0M734.5 148.5h0M734.5 154.5h0M734.5 155.5h0M735.5 142.5h0M735.5 143.5h0M735.5 146.5h0M735.5 148.5h0M736.5 144.5h0M736.5 145.5h0M736.5 147.5h0M736.5 152.5h0M737.5 153.5h0M737.5 155.5h0M737.5 159.5h0M737.5 165.5h0M738.5 124.5h0M738.5 130.5h0M738.5 144.5h0M739.5 127.5h0M739.5 144.5h0M739.5 147.5h0M739.5 157.5h0M740.5 128.5h0M740.5 144.5h0M740.5 162.5h0M741.5 131.5h0M741.5 141.5h0M741.5 167.5h0M741.5 172.5h0M742.5 163.5h0M742.5 170.5h0M742.5 172.5h0M743.5 161.5h0M743.5 162.5h0M743.5 166.5h0M744.5 145.5h0M744.5 160.5h0M744.5 162.5h0M744.5 164.5h0M745.5 122.5h0M745.5 123.5h0M745.5 132.5h0M745.5 139.5h0M745.5 144.5h0M746.5 122.5h0M746.5 123.5h0M746.5 124.5h0M746.5 129.5h0M747.5 141.5h0M747.5 143.5h0M747.5 145.5h0M747.5 148.5h0M748.5 128.5h0M748.5 133.5h0M748.5 134.5h0M748.5 140.5h0M749.5 122.5h0M749.5 123.5h0M749.5 134.5h0M749.5 135.5h0M750.5 133.5h0M750.5 136.5h0M750.5 141.5h0M750.5 148.5h0M751.5 133.5h0M751.5 136.5h0M751.5 148.5h0M751.5 151.5h0M752.5 137.5h0M752.5 139.5h0M753.5 141.5h0M753.5 146.5h0M753.5 164.5h0M754.5 169.5h0M754.5 170.5h0M754.5 171.5h0M755.5 141.5h0M755.5 150.5h0M755.5 157.5h0M755.5 167.5h0M756.5 133.5h0M756.5 146.5h0M756.5 155.5h0M756.5 165.5h0M757.5 124.5h0M757.5 138.5h0M757.5 143.5h0M757.5 147.5h0M757.5 156.5h0M758.5 138.5h0M758.5 143.5h0M758.5 148.5h0M758.5 164.5h0M759.5 149.5h0M759.5 151.5h0M759.5 155.5h0M759.5 163.5h0M760.5 145.5h0M760.5 163.5h0M760.5 165.5h0M760.5 166.5h0M761.5 143.5h0M761.5 146.5h0M761.5 154.5h0M761.5 163.5h0M762.5 146.5h0M762.5 148.5h0M762.5 150.5h0M762.5 155.5h0M762.5 159.5h0M763.5 150.5h0M763.5 154.5h0M763.5 164.5h0M763.5 170.5h0M764.5 148.5h0M764.5 154.5h0M764.5 161.5h0M765.5 145.5h0M765.5 153.5h0M765.5 155.5h0M765.5 160.5h0M766.5 132.5h0M766.5 148.5h0M766.5 151.5h0M766.5 152.5h0M767.5 136.5h0M767.5 153.5h0M767.5 162.5h0M768.5 147.5h0M768.5 152.5h0M768.5 154.5h0M768.5 156.5h0M768.5 158.5h0M769.5 122.5h0M769.5 126.5h0M769.5 140.5h0M769.5 142.5h0M770.5 141.5h0M770.5 165.5h0M770.5 166.5h0M770.5 170.5h0M771.5 147.5h0M771.5 152.5h0M771.5 157.5h0M771.5 163.5h0M772.5 138.5h0M772.5 139.5h0M772.5 153.5h0M772.5 155.5h0M773.5 141.5h0M773.5 143.5h0M773.5 151.5h0M773.5 157.5h0M774.5 150.5h0M774.5 160.5h0M774.5 161.5h0M774.5 162.5h0M774.5 171.5h0M775.5 155.5h0M775.5 166.5h0M775.5 167.5h0M776.5 151.5h0M776.5 152.5h0M776.5 154.5h0M776.5 171.5h0M777.5 138.5h0M777.5 140.5h0M777.5 143.5h0M777.5 144.5h0M778.5 143.5h0M778.5 145.5h0M778.5 146.5h0M778.5 147.5h0M779.5 145.5h0M779.5 153.5h0M779.5 159.5h0M780.5 147.5h0M780.5 149.5h0M780.5 157.5h0M780.5 160.5h0M781.5 144.5h0M781.5 145.5h0M781.5 152.5h0M781.5 153.5h0M782.5 140.5h0M782.5 142.5h0M782.5 154.5h0M783.5 133.5h0M783.5 150.5h0M783.5 153.5h0M783.5 156.5h0M784.5 154.5h0M784.5 160.5h0M784.5 162.5h0M784.5 166.5h0M785.5 143.5h0M785.5 147.5h0M785.5 155.5h0M785.5 158.5h0M785.5 159.5h0M786.5 139.5h0M786.5 147.5h0M786.5 149.5h0M787.5 144.5h0M787.5 149.5h0M787.5 156.5h0M787.5 161.5h0M788.5 138.5h0M788.5 160.5h0M788.5 170.5h0M789.5 132.5h0M789.5 133.5h0M789.5 149.5h0M789.5 150.5h0M790.5 144.5h0M790.5 150.5h0M790.5 156.5h0M790.5 163.5h0M791.5 123.5h0M791.5 124.5h0M791.5 127.5h0M791.5 134.5h0M791.5 137.5h0M792.5 123.5h0M792.5 124.5h0M792.5 133.5h0M793.5 130.5h0M793.5 140.5h0M793.5 142.5h0M793.5 148.5h0M794.5 137.5h0M794.5 138.5h0M794.5 140.5h0M794.5 146.5h0M795.5 143.5h0M795.5 144.5h0M795.5 145.5h0M796.5 139.5h0M796.5 142.5h0M796.5 144.5h0M796.5 145.5h0M797.5 142.5h0M797.5 144.5h0M797.5 145.5h0M797.5 148.5h0M797.5 151.5h0M798.5 139.5h0M798.5 146.5h0M798.5 147.5h0M798.5 150.5h0M799.5 123.5h0M799.5 130.5h0M799.5 134.5h0M799.5 150.5h0M800.5 122.5h0M800.5 123.5h0M800.5 128.5h0M800.5 133.5h0M801.5 147.5h0M801.5 148.5h0M801.5 149.5h0M801.5 151.5h0M802.5 149.5h0M802.5 154.5h0M802.5 155.5h0M802.5 157.5h0M803.5 137.5h0M803.5 149.5h0M803.5 152.5h0M803.5 156.5h0M803.5 161.5h0M804.5 147.5h0M804.5 158.5h0M804.5 169.5h0M805.5 148.5h0M805.5 159.5h0M805.5 164.5h0M805.5 170.5h0M806.5 129.5h0M806.5 141.5h0M806.5 145.5h0M806.5 148.5h0M807.5 138.5h0M807.5 141.5h0M807.5 149.5h0M807.5 151.5h0M808.5 135.5h0M808.5 139.5h0M808.5 140.5h0M808.5 146.5h0M808.5 149.5h0M809.5 140.5h0M809.5 147.5h0M809.5 149.5h0M809.5 153.5h0M810.5 148.5h0M810.5 151.5h0M810.5 152.5h0M810.5 154.5h0M811.5 151.5h0M811.5 152.5h0M811.5 157.5h0M811.5 163.5h0M812.5 151.5h0M812.5 156.5h0M812.5 159.5h0M813.5 148.5h0M813.5 153.5h0M813.5 154.5h0M813.5 160.5h0M814.5 140.5h0M814.5 144.5h0M814.5 150.5h0M814.5 158.5h0M815.5 138.5h0M815.5 142.5h0M815.5 143.5h0M816.5 138.5h0M816.5 143.5h0M816.5 145.5h0M817.5 137.5h0M817.5 141.5h0M817.5 142.5h0M818.5 126.5h0M818.5 127.5h0M819.5 122.5h0M819.5 124.5h0M819.5 130.5h0M819.5 131.5h0M820.5 133.5h0M820.5 145.5h0M820.5 153.5h0M820.5 155.5h0M821.5 153.5h0M821.5 155.5h0M821.5 156.5h0M821.5 157.5h0M822.5 151.5h0M822.5 152.5h0M822.5 153.5h0M822.5 154.5h0M823.5 148.5h0M823.5 158.5h0M823.5 159.5h0M823.5 170.5h0M824.5 147.5h0M824.5 150.5h0M824.5 152.5h0M824.5 154.5h0M825.5 146.5h0M825.5 148.5h0M825.5 152.5h0M825.5 156.5h0M825.5 162.5h0M826.5 143.5h0M826.5 144.5h0M826.5 149.5h0M826.5 153.5h0M827.5 152.5h0M827.5 153.5h0M827.5 169.5h0M828.5 133.5h0M828.5 138.5h0M828.5 150.5h0M828.5 157.5h0M829.5 142.5h0M829.5 148.5h0M829.5 161.5h0M830.5 140.5h0M830.5 150.5h0M830.5 153.5h0M830.5 154.5h0M831.5 141.5h0M831.5 147.5h0M831.5 150.5h0M831.5 154.5h0M832.5 146.5h0M832.5 150.5h0M832.5 152.5h0M832.5 158.5h0M833.5 147.5h0M833.5 154.5h0M833.5 157.5h0M834.5 151.5h0M834.5 158.5h0M834.5 159.5h0M834.5 160.5h0M835.5 150.5h0M835.5 159.5h0M835.5 162.5h0M835.5 163.5h0M836.5 153.5h0M836.5 158.5h0M836.5 159.5h0M836.5 162.5h0M837.5 141.5h0M837.5 149.5h0M837.5 151.5h0M837.5 161.5h0M838.5 151.5h0M838.5 152.5h0M838.5 153.5h0M838.5 157.5h0M839.5 153.5h0M839.5 155.5h0M839.5 156.5h0M839.5 157.5h0M840.5 137.5h0M840.5 144.5h0M840.5 159.5h0M840.5 163.5h0M841.5 143.5h0M841.5 145.5h0M841.5 147.5h0M841.5 151.5h0M842.5 144.5h0M842.5 145.5h0M842.5 146.5h0M842.5 155.5h0M843.5 139.5h0M843.5 140.5h0M843.5 141.5h0M843.5 143.5h0M843.5 150.5h0M844.5 144.5h0M844.5 145.5h0M844.5 147.5h0M844.5 153.5h0M845.5 141.5h0M845.5 142.5h0M845.5 145.5h0M846.5 141.5h0M846.5 144.5h0M846.5 149.5h0M846.5 156.5h0M847.5 142.5h0M847.5 146.5h0M847.5 150.5h0M847.5 158.5h0M848.5 141.5h0M848.5 144.5h0M848.5 149.5h0M848.5 151.5h0M849.5 136.5h0M849.5 143.5h0M849.5 145.5h0M849.5 152.5h0M850.5 140.5h0M850.5 141.5h0M850.5 144.5h0M850.5 147.5h0M851.5 146.5h0M851.5 148.5h0M851.5 149.5h0M852.5 146.5h0M852.5 149.5h0M852.5 151.5h0M852.5 154.5h0M853.5 141.5h0M853.5 143.5h0M853.5 150.5h0M854.5 141.5h0M854.5 146.5h0M854.5 147.5h0M854.5 148.5h0M854.5 151.5h0M855.5 145.5h0M855.5 146.5h0M855.5 151.5h0M855.5 158.5h0M856.5 146.5h0M856.5 151.5h0M856.5 152.5h0M856.5 158.5h0M857.5 148.5h0M857.5 151.5h0M857.5 152.5h0M857.5 166.5h0M858.5 141.5h0M858.5 148.5h0M858.5 150.5h0M858.5 151.5h0M859.5 134.5h0M859.5 141.5h0M859.5 144.5h0M859.5 145.5h0M860.5 136.5h0M860.5 138.5h0M860.5 142.5h0M860.5 145.5h0M860.5 149.5h0M861.5 136.5h0M861.5 147.5h0M861.5 150.5h0M861.5 153.5h0M862.5 137.5h0M862.5 145.5h0M862.5 146.5h0M862.5 154.5h0M863.5 138.5h0M863.5 145.5h0M863.5 147.5h0M863.5 152.5h0M864.5 145.5h0M864.5 146.5h0M864.5 148.5h0M864.5 149.5h0M865.5 146.5h0M865.5 161.5h0M865.5 165.5h0M865.5 169.5h0M866.5 153.5h0M866.5 158.5h0M866.5 159.5h0M866.5 163.5h0M866.5 164.5h0M867.5 148.5h0M867.5 153.5h0M867.5 158.5h0M868.5 136.5h0M868.5 145.5h0M868.5 148.5h0M868.5 153.5h0M869.5 137.5h0M869.5 138.5h0M869.5 142.5h0M869.5 147.5h0M870.5 144.5h0M870.5 145.5h0M870.5 155.5h0M871.5 149.5h0M871.5 153.5h0M871.5 155.5h0M871.5 156.5h0M871.5 163.5h0M872.5 149.5h0M872.5 151.5h0M872.5 161.5h0M872.5 170.5h0M873.5 138.5h0M873.5 139.5h0M873.5 151.5h0M873.5 156.5h0M874.5 122.5h0M874.5 123.5h0M874.5 129.5h0M874.5 131.5h0M875.5 123.5h0M875.5 125.5h0M875.5 131.5h0M876.5 141.5h0M876.5 143.5h0M876.5 152.5h0M876.5 155.5h0M877.5 133.5h0M877.5 139.5h0M877.5 145.5h0M877.5 156.5h0M877.5 157.5h0M878.5 134.5h0M878.5 137.5h0M878.5 140.5h0M878.5 142.5h0M879.5 136.5h0M879.5 138.5h0M879.5 141.5h0M880.5 140.5h0M880.5 141.5h0M880.5 142.5h0M880.5 148.5h0M881.5 133.5h0M881.5 134.5h0M881.5 141.5h0M881.5 142.5h0M882.5 125.5h0M882.5 138.5h0M882.5 154.5h0M883.5 130.5h0M883.5 135.5h0M883.5 140.5h0M883.5 146.5h0M883.5 151.5h0M884.5 150.5h0M884.5 151.5h0M885.5 144.5h0M885.5 148.5h0M885.5 154.5h0M885.5 156.5h0M886.5 146.5h0M886.5 147.5h0M886.5 148.5h0M886.5 156.5h0M887.5 129.5h0M887.5 130.5h0M887.5 141.5h0M887.5 143.5h0M888.5 126.5h0M888.5 131.5h0M888.5 134.5h0M888.5 138.5h0M888.5 144.5h0M889.5 127.5h0M889.5 133.5h0M889.5 135.5h0M889.5 150.5h0M890.5 128.5h0M890.5 130.5h0M890.5 132.5h0M890.5 140.5h0M891.5 131.5h0M891.5 135.5h0M891.5 143.5h0M891.5 151.5h0M892.5 134.5h0M892.5 138.5h0M892.5 142.5h0M892.5 144.5h0M893.5 147.5h0M893.5 153.5h0M893.5 156.5h0M893.5 158.5h0M894.5 150.5h0M894.5 153.5h0M894.5 155.5h0M895.5 145.5h0M895.5 151.5h0M895.5 153.5h0M895.5 155.5h0M896.5 145.5h0M896.5 151.5h0M896.5 155.5h0M896.5 157.5h0M897.5 145.5h0M897.5 148.5h0M897.5 153.5h0M898.5 156.5h0M898.5 161.5h0M898.5 165.5h0M899.5 147.5h0M899.5 151.5h0M899.5 158.5h0M899.5 168.5h0M900.5 154.5h0M900.5 157.5h0M900.5 159.5h0M900.5 166.5h0M901.5 137.5h0M901.5 145.5h0M901.5 148.5h0M901.5 155.5h0M902.5 149.5h0M902.5 152.5h0M902.5 159.5h0M903.5 141.5h0M903.5 143.5h0M903.5 147.5h0M903.5 160.5h0M904.5 143.5h0M904.5 145.5h0M904.5 149.5h0M904.5 161.5h0M905.5 143.5h0M905.5 147.5h0M905.5 148.5h0M905.5 152.5h0M906.5 131.5h0M906.5 147.5h0M906.5 151.5h0M906.5 159.5h0M906.5 160.5h0M907.5 130.5h0M907.5 131.5h0M907.5 133.5h0M907.5 143.5h0M908.5 131.5h0M908.5 138.5h0M908.5 142.5h0M908.5 144.5h0M909.5 125.5h0M909.5 132.5h0M909.5 133.5h0M909.5 143.5h0M910.5 126.5h0M910.5 132.5h0M910.5 141.5h0M910.5 154.5h0M911.5 125.5h0M911.5 142.5h0M911.5 148.5h0M911.5 149.5h0M911.5 158.5h0M912.5 140.5h0M912.5 142.5h0M912.5 145.5h0M912.5 152.5h0M913.5 156.5h0M913.5 159.5h0M913.5 160.5h0M913.5 170.5h0M914.5 153.5h0M914.5 163.5h0M914.5 164.5h0M914.5 169.5h0M915.5 159.5h0M915.5 170.5h0M915.5 171.5h0M916.5 155.5h0M916.5 160.5h0M916.5 162.5h0M917.5 145.5h0M917.5 149.5h0M917.5 151.5h0M917.5 157.5h0M918.5 142.5h0M918.5 151.5h0M918.5 153.5h0M918.5 163.5h0M919.5 147.5h0M919.5 150.5h0M919.5 152.5h0M919.5 155.5h0M920.5 141.5h0M920.5 142.5h0M920.5 149.5h0M920.5 156.5h0M921.5 150.5h0M921.5 151.5h0M921.5 157.5h0M922.5 148.5h0M922.5 154.5h0M922.5 155.5h0M922.5 156.5h0M923.5 149.5h0M923.5 151.5h0M923.5 153.5h0M923.5 155.5h0M923.5 157.5h0M924.5 150.5h0M924.5 152.5h0M924.5 155.5h0M925.5 148.5h0M925.5 150.5h0M925.5 153.5h0M926.5 147.5h0M926.5 148.5h0M926.5 149.5h0M926.5 150.5h0M927.5 142.5h0M927.5 147.5h0M927.5 151.5h0M927.5 152.5h0M928.5 145.5h0M928.5 147.5h0M928.5 157.5h0M928.5 161.5h0M929.5 139.5h0M929.5 142.5h0M929.5 145.5h0M929.5 146.5h0M929.5 149.5h0M930.5 141.5h0M930.5 151.5h0M930.5 153.5h0M930.5 155.5h0M931.5 143.5h0M931.5 147.5h0M931.5 149.5h0M932.5 143.5h0M932.5 145.5h0M933.5 143.5h0M933.5 147.5h0M933.5 150.5h0M933.5 153.5h0M934.5 125.5h0M934.5 132.5h0M934.5 134.5h0M934.5 145.5h0M935.5 126.5h0M935.5 128.5h0M935.5 133.5h0M935.5 137.5h0M936.5 142.5h0M936.5 144.5h0M936.5 146.5h0M937.5 145.5h0M937.5 146.5h0M937.5 149.5h0M938.5 139.5h0M938.5 150.5h0M938.5 155.5h0M938.5 157.5h0M939.5 151.5h0M939.5 154.5h0M939.5 157.5h0M939.5 164.5h0M940.5 131.5h0M940.5 137.5h0M940.5 146.5h0M940.5 150.5h0M940.5 161.5h0M941.5 140.5h0M941.5 148.5h0M941.5 151.5h0M941.5 158.5h0M942.5 147.5h0M942.5 149.5h0M942.5 151.5h0M942.5 154.5h0M943.5 144.5h0M943.5 149.5h0M943.5 150.5h0M943.5 154.5h0M944.5 145.5h0M944.5 148.5h0M944.5 149.5h0M944.5 150.5h0M945.5 149.5h0M945.5 150.5h0M945.5 157.5h0M946.5 144.5h0M946.5 153.5h0M946.5 156.5h0M946.5 157.5h0M946.5 165.5h0M947.5 127.5h0M947.5 139.5h0M947.5 142.5h0M947.5 153.5h0M948.5 130.5h0M948.5 136.5h0M948.5 143.5h0M949.5 142.5h0M949.5 147.5h0M949.5 151.5h0M950.5 139.5h0M950.5 148.5h0M950.5 153.5h0M950.5 160.5h0M951.5 146.5h0M951.5 148.5h0M951.5 149.5h0M951.5 152.5h0M951.5 159.5h0M952.5 145.5h0M952.5 146.5h0M952.5 164.5h0M953.5 144.5h0M953.5 146.5h0M953.5 147.5h0M953.5 152.5h0M954.5 145.5h0M954.5 147.5h0M954.5 149.5h0M954.5 153.5h0M955.5 143.5h0M955.5 150.5h0M955.5 153.5h0M955.5 163.5h0M956.5 139.5h0M956.5 140.5h0M956.5 143.5h0M956.5 148.5h0M957.5 148.5h0M957.5 149.5h0M957.5 150.5h0M957.5 151.5h0M957.5 153.5h0M958.5 152.5h0M958.5 156.5h0M958.5 157.5h0M958.5 160.5h0M959.5 154.5h0M959.5 160.5h0M959.5 162.5h0M959.5 170.5h0M960.5 154.5h0M960.5 163.5h0M960.5 165.5h0M960.5 169.5h0M961.5 144.5h0M961.5 145.5h0M961.5 156.5h0M962.5 139.5h0M962.5 146.5h0M962.5 149.5h0M962.5 154.5h0M963.5 127.5h0M963.5 144.5h0M963.5 146.5h0M964.5 130.5h0M964.5 136.5h0M964.5 141.5h0M964.5 153.5h0M965.5 139.5h0M965.5 140.5h0M965.5 148.5h0M965.5 157.5h0M966.5 143.5h0M966.5 150.5h0M966.5 160.5h0M966.5 161.5h0M967.5 149.5h0M967.5 154.5h0M967.5 158.5h0M967.5 161.5h0M968.5 156.5h0M968.5 160.5h0M968.5 162.5h0M968.5 163.5h0M969.5 148.5h0M969.5 150.5h0M969.5 158.5h0M969.5 164.5h0M969.5 165.5h0M970.5 155.5h0M970.5 156.5h0M970.5 160.5h0M970.5 163.5h0M971.5 153.5h0M971.5 155.5h0M971.5 157.5h0M972.5 147.5h0M972.5 151.5h0M972.5 155.5h0M973.5 147.5h0M973.5 149.5h0M973.5 150.5h0M973.5 151.5h0M974.5 126.5h0M974.5 130.5h0M974.5 136.5h0M974.5 138.5h0M974.5 148.5h0M975.5 137.5h0M975.5 138.5h0M975.5 141.5h0M975.5 145.5h0M976.5 138.5h0M976.5 150.5h0M976.5 155.5h0M976.5 156.5h0M977.5 148.5h0M977.5 154.5h0M977.5 155.5h0M977.5 165.5h0M978.5 143.5h0M978.5 146.5h0M978.5 148.5h0M979.5 132.5h0M979.5 138.5h0M979.5 140.5h0M979.5 144.5h0M980.5 124.5h0M980.5 129.5h0M980.5 130.5h0M980.5 135.5h0M980.5 138.5h0M981.5 137.5h0M981.5 147.5h0M981.5 154.5h0M982.5 146.5h0M982.5 147.5h0M982.5 154.5h0M982.5 156.5h0M983.5 134.5h0M983.5 138.5h0M983.5 141.5h0M983.5 144.5h0M984.5 134.5h0M984.5 150.5h0M984.5 151.5h0M985.5 141.5h0M985.5 142.5h0M985.5 143.5h0M985.5 153.5h0M986.5 140.5h0M986.5 142.5h0M986.5 144.5h0M986.5 147.5h0M987.5 138.5h0M987.5 140.5h0M987.5 150.5h0M987.5 159.5h0M988.5 144.5h0M988.5 151.5h0M988.5 152.5h0M989.5 140.5h0M989.5 147.5h0M989.5 150.5h0M989.5 152.5h0M990.5 144.5h0M990.5 146.5h0M990.5 148.5h0M990.5 150.5h0M991.5 145.5h0M991.5 148.5h0M991.5 151.5h0M991.5 153.5h0M992.5 140.5h0M992.5 148.5h0M992.5 151.5h0M992.5 152.5h0M992.5 159.5h0M993.5 137.5h0M993.5 144.5h0M993.5 151.5h0M993.5 154.5h0M994.5 140.5h0M994.5 143.5h0M994.5 147.5h0M994.5 151.5h0M995.5 134.5h0M995.5 135.5h0M995.5 140.5h0M995.5 145.5h0M996.5 129.5h0M996.5 137.5h0M996.5 138.5h0M996.5 140.5h0M997.5 124.5h0M997.5 128.5h0M997.5 129.5h0M997.5 130.5h0M997.5 151.5h0M998.5 150.5h0M998.5 152.5h0M998.5 155.5h0M998.5 161.5h0M999.5 142.5h0M999.5 147.5h0M999.5 148.5h0M999.5 150.5h0M1000.5 146.5h0M1000.5 149.5h0M1000.5 150.5h0M1000.5 151.5h0M1001.5 141.5h0M1001.5 142.5h0M1001.5 146.5h0M1001.5 151.5h0M1002.5 142.5h0M1002.5 145.5h0M1002.5 147.5h0M1003.5 126.5h0M1003.5 137.5h0M1003.5 139.5h0M1003.5 141.5h0M1003.5 142.5h0M1004.5 125.5h0M1004.5 126.5h0M1004.5 130.5h0M1004.5 141.5h0M1005.5 124.5h0M1005.5 127.5h0M1005.5 138.5h0M1006.5 128.5h0M1006.5 137.5h0M1006.5 142.5h0M1006.5 146.5h0M1007.5 126.5h0M1007.5 129.5h0M1007.5 144.5h0M1007.5 153.5h0M1008.5 148.5h0M1008.5 149.5h0M1008.5 154.5h0M1008.5 157.5h0M1009.5 137.5h0M1009.5 143.5h0M1009.5 148.5h0M1009.5 149.5h0M1009.5 153.5h0M1010.5 145.5h0M1010.5 150.5h0M1010.5 156.5h0M1010.5 157.5h0M1011.5 150.5h0M1011.5 155.5h0M1011.5 159.5h0M1011.5 160.5h0M1012.5 146.5h0M1012.5 151.5h0M1012.5 153.5h0M1013.5 142.5h0M1013.5 143.5h0M1013.5 147.5h0M1014.5 139.5h0M1014.5 142.5h0M1014.5 146.5h0M1014.5 147.5h0M1015.5 138.5h0M1015.5 146.5h0M1015.5 152.5h0M1015.5 154.5h0M1016.5 129.5h0M1016.5 134.5h0M1016.5 135.5h0M1016.5 143.5h0M1017.5 123.5h0M1017.5 127.5h0M1017.5 133.5h0M1018.5 131.5h0M1018.5 133.5h0M1018.5 137.5h0M1019.5 148.5h0M1019.5 151.5h0M1019.5 158.5h0M1020.5 145.5h0M1020.5 148.5h0M1020.5 149.5h0M1020.5 150.5h0M1021.5 145.5h0M1021.5 151.5h0M1021.5 153.5h0M1021.5 158.5h0M1022.5 140.5h0M1022.5 141.5h0M1022.5 147.5h0M1022.5 156.5h0M1023.5 123.5h0M1023.5 125.5h0M1023.5 144.5h0M1023.5 149.5h0M1024.5 126.5h0M1024.5 128.5h0M1024.5 130.5h0M1024.5 134.5h0M1025.5 124.5h0M1025.5 131.5h0M1025.5 133.5h0M1025.5 134.5h0M1026.5 125.5h0M1026.5 128.5h0M1026.5 132.5h0M1026.5 133.5h0M1026.5 139.5h0M1027.5 136.5h0M1027.5 137.5h0M1027.5 141.5h0M1027.5 146.5h0M1028.5 143.5h0M1028.5 144.5h0M1028.5 149.5h0M1028.5 158.5h0M1029.5 146.5h0M1029.5 147.5h0M1029.5 149.5h0M1029.5 150.5h0M1030.5 144.5h0M1030.5 149.5h0M1030.5 150.5h0M1030.5 156.5h0M1031.5 134.5h0M1031.5 140.5h0M1031.5 145.5h0M1031.5 147.5h0M1032.5 146.5h0M1032.5 148.5h0M1032.5 152.5h0M1032.5 158.5h0M1033.5 150.5h0M1033.5 155.5h0M1033.5 158.5h0M1034.5 133.5h0M1034.5 138.5h0M1034.5 141.5h0M1034.5 157.5h0M1035.5 139.5h0M1035.5 140.5h0M1035.5 143.5h0M1035.5 144.5h0M1036.5 138.5h0M1036.5 139.5h0M1036.5 142.5h0M1036.5 143.5h0M1037.5 132.5h0M1037.5 138.5h0M1037.5 140.5h0M1037.5 141.5h0M1037.5 142.5h0M1038.5 145.5h0M1038.5 146.5h0M1038.5 158.5h0M1038.5 159.5h0M1039.5 139.5h0M1039.5 140.5h0M1039.5 144.5h0M1039.5 156.5h0M1040.5 142.5h0M1040.5 143.5h0M1040.5 150.5h0M1041.5 149.5h0M1041.5 150.5h0M1041.5 153.5h0M1041.5 154.5h0M1042.5 135.5h0M1042.5 146.5h0M1042.5 157.5h0M1042.5 164.5h0M1043.5 136.5h0M1043.5 151.5h0M1043.5 155.5h0M1043.5 158.5h0M1043.5 159.5h0M1044.5 151.5h0M1044.5 157.5h0M1044.5 166.5h0M1044.5 170.5h0M1045.5 138.5h0M1045.5 148.5h0M1045.5 154.5h0M1045.5 161.5h0M1046.5 144.5h0M1046.5 148.5h0M1046.5 149.5h0M1046.5 150.5h0M1047.5 150.5h0M1047.5 151.5h0M1047.5 153.5h0M1047.5 154.5h0M1048.5 137.5h0M1048.5 139.5h0M1048.5 150.5h0M1048.5 164.5h0M1049.5 141.5h0M1049.5 157.5h0M1049.5 168.5h0M1049.5 169.5h0M1050.5 143.5h0M1050.5 149.5h0M1050.5 153.5h0M1051.5 135.5h0M1051.5 140.5h0M1051.5 146.5h0M1051.5 147.5h0M1052.5 137.5h0M1052.5 142.5h0M1052.5 144.5h0M1053.5 140.5h0M1053.5 144.5h0M1053.5 159.5h0M1053.5 160.5h0M1054.5 146.5h0M1054.5 148.5h0M1054.5 153.5h0M1055.5 146.5h0M1055.5 149.5h0M1055.5 150.5h0M1055.5 156.5h0M1056.5 138.5h0M1056.5 142.5h0M1056.5 144.5h0M1056.5 145.5h0M1057.5 139.5h0M1057.5 141.5h0M1057.5 152.5h0M1058.5 134.5h0M1058.5 136.5h0M1058.5 137.5h0M1058.5 139.5h0M1059.5 135.5h0M1059.5 141.5h0M1059.5 143.5h0M1060.5 140.5h0M1060.5 148.5h0M1060.5 153.5h0M1060.5 154.5h0M1061.5 145.5h0M1061.5 150.5h0M1061.5 152.5h0M1061.5 163.5h0M1062.5 139.5h0M1062.5 141.5h0M1062.5 148.5h0M1062.5 159.5h0M1063.5 146.5h0M1063.5 152.5h0M1063.5 154.5h0M1063.5 155.5h0M1064.5 142.5h0M1064.5 145.5h0M1064.5 146.5h0M1064.5 148.5h0M1065.5 142.5h0M1065.5 150.5h0M1065.5 151.5h0M1065.5 152.5h0M1066.5 137.5h0M1066.5 138.5h0M1066.5 141.5h0M1066.5 142.5h0M1066.5 143.5h0M1067.5 138.5h0M1067.5 143.5h0M1068.5 136.5h0M1068.5 140.5h0M1068.5 145.5h0M1069.5 143.5h0M1069.5 146.5h0M1069.5 151.5h0M1070.5 142.5h0M1070.5 144.5h0M1070.5 147.5h0M1070.5 148.5h0M1071.5 141.5h0M1071.5 149.5h0M1071.5 154.5h0M1072.5 155.5h0M1072.5 159.5h0M1072.5 161.5h0M1072.5 163.5h0M1073.5 147.5h0M1073.5 151.5h0M1073.5 161.5h0M1073.5 170.5h0M1074.5 168.5h0M1074.5 171.5h0M1075.5 160.5h0M1075.5 168.5h0M1076.5 132.5h0M1076.5 135.5h0M1076.5 139.5h0M1076.5 141.5h0M1077.5 125.5h0M1077.5 129.5h0M1077.5 147.5h0M1077.5 149.5h0M1078.5 134.5h0M1078.5 143.5h0M1078.5 150.5h0M1078.5 163.5h0M1079.5 145.5h0M1079.5 158.5h0M1079.5 159.5h0M1080.5 145.5h0M1080.5 153.5h0M1080.5 154.5h0M1080.5 155.5h0M1081.5 149.5h0M1081.5 155.5h0M1081.5 169.5h0M1081.5 170.5h0M1082.5 154.5h0M1082.5 168.5h0M1082.5 169.5h0M1082.5 172.5h0M1083.5 150.5h0M1083.5 151.5h0M1083.5 153.5h0M1083.5 160.5h0M1083.5 166.5h0M1084.5 145.5h0M1084.5 148.5h0M1084.5 150.5h0M1084.5 157.5h0M1085.5 141.5h0M1085.5 145.5h0M1085.5 157.5h0M1086.5 136.5h0M1086.5 137.5h0M1086.5 141.5h0M1086.5 150.5h0M1087.5 142.5h0M1087.5 143.5h0M1087.5 151.5h0M1087.5 152.5h0M1088.5 147.5h0M1088.5 156.5h0M1088.5 158.5h0M1088.5 159.5h0M1089.5 135.5h0M1089.5 139.5h0M1089.5 148.5h0M1089.5 151.5h0M1089.5 154.5h0M1090.5 147.5h0M1090.5 150.5h0M1090.5 151.5h0M1090.5 160.5h0M1091.5 151.5h0M1091.5 161.5h0M1092.5 146.5h0M1092.5 159.5h0M1092.5 160.5h0M1092.5 167.5h0M1093.5 147.5h0M1093.5 148.5h0M1093.5 150.5h0M1093.5 154.5h0M1094.5 142.5h0M1094.5 154.5h0M1094.5 160.5h0M1095.5 149.5h0M1095.5 153.5h0M1095.5 154.5h0M1095.5 161.5h0M1095.5 162.5h0M1096.5 135.5h0M1096.5 145.5h0M1096.5 161.5h0M1096.5 170.5h0M1097.5 135.5h0M1097.5 148.5h0M1097.5 155.5h0M1097.5 160.5h0M1098.5 141.5h0M1098.5 142.5h0M1098.5 145.5h0M1098.5 148.5h0M1099.5 142.5h0M1099.5 148.5h0M1099.5 149.5h0M1100.5 142.5h0M1100.5 145.5h0M1100.5 148.5h0M1100.5 151.5h0M1100.5 152.5h0M1101.5 142.5h0M1101.5 144.5h0M1101.5 163.5h0M1101.5 172.5h0M1102.5 171.5h0M1102.5 172.5h0M1103.5 154.5h0M1103.5 167.5h0M1103.5 172.5h0M1104.5 142.5h0M1104.5 153.5h0M1104.5 154.5h0M1104.5 172.5h0M1105.5 139.5h0M1105.5 141.5h0M1105.5 145.5h0M1105.5 153.5h0M1106.5 145.5h0M1106.5 146.5h0M1106.5 148.5h0M1106.5 152.5h0M1106.5 160.5h0M1107.5 146.5h0M1107.5 155.5h0M1107.5 159.5h0M1107.5 160.5h0M1108.5 148.5h0M1108.5 150.5h0M1109.5 147.5h0M1109.5 153.5h0M1109.5 155.5h0M1109.5 156.5h0M1110.5 142.5h0M1110.5 143.5h0M1110.5 145.5h0M1110.5 146.5h0M1111.5 143.5h0M1111.5 147.5h0M1111.5 148.5h0M1111.5 153.5h0M1112.5 141.5h0M1112.5 147.5h0M1112.5 148.5h0M1112.5 152.5h0M1113.5 159.5h0M1113.5 160.5h0M1113.5 162.5h0M1114.5 147.5h0M1114.5 151.5h0M1114.5 160.5h0M1114.5 163.5h0M1115.5 131.5h0M1115.5 143.5h0M1115.5 151.5h0M1115.5 153.5h0M1116.5 132.5h0M1116.5 141.5h0M1116.5 146.5h0M1116.5 158.5h0M1117.5 142.5h0M1117.5 151.5h0M1117.5 163.5h0M1117.5 164.5h0M1118.5 165.5h0M1118.5 169.5h0M1118.5 172.5h0M1119.5 149.5h0M1119.5 156.5h0M1119.5 159.5h0M1119.5 167.5h0M1120.5 149.5h0M1120.5 153.5h0M1120.5 159.5h0M1120.5 162.5h0M1121.5 164.5h0M1121.5 166.5h0M1121.5 169.5h0M1121.5 174.5h0M1122.5 166.5h0M1122.5 172.5h0M1122.5 175.5h0M1122.5 181.5h0M1123.5 162.5h0M1123.5 164.5h0M1123.5 168.5h0M1123.5 174.5h0M1123.5 176.5h0M1124.5 157.5h0M1124.5 164.5h0M1124.5 186.5h0M1124.5 190.5h0M1125.5 158.5h0M1125.5 162.5h0M1125.5 167.5h0M1125.5 170.5h0M1126.5 164.5h0M1126.5 165.5h0M1126.5 167.5h0M1126.5 174.5h0M1127.5 155.5h0M1127.5 158.5h0M1127.5 161.5h0M1128.5 161.5h0M1128.5 163.5h0M1128.5 166.5h0M1128.5 178.5h0M1129.5 157.5h0M1129.5 158.5h0M1129.5 170.5h0M1129.5 175.5h0M1129.5 184.5h0M1130.5 153.5h0M1130.5 162.5h0M1130.5 164.5h0M1130.5 170.5h0M1131.5 166.5h0M1131.5 172.5h0M1131.5 173.5h0M1131.5 177.5h0M1132.5 167.5h0M1132.5 173.5h0M1132.5 174.5h0M1133.5 167.5h0M1133.5 171.5h0M1133.5 179.5h0M1134.5 172.5h0M1134.5 181.5h0M1134.5 188.5h0M1134.5 191.5h0M1135.5 157.5h0M1135.5 160.5h0M1135.5 163.5h0M1135.5 174.5h0M1136.5 153.5h0M1136.5 167.5h0M1136.5 169.5h0M1136.5 171.5h0M1137.5 154.5h0M1137.5 155.5h0M1137.5 170.5h0M1137.5 175.5h0M1138.5 157.5h0M1138.5 158.5h0M1138.5 161.5h0M1138.5 172.5h0M1139.5 166.5h0M1139.5 170.5h0M1139.5 172.5h0M1139.5 178.5h0M1140.5 165.5h0M1140.5 166.5h0M1140.5 169.5h0M1140.5 171.5h0M1141.5 164.5h0M1141.5 165.5h0M1141.5 169.5h0M1141.5 170.5h0M1142.5 165.5h0M1142.5 168.5h0M1142.5 171.5h0M1143.5 164.5h0M1143.5 171.5h0M1143.5 176.5h0M1143.5 177.5h0M1144.5 164.5h0M1144.5 165.5h0M1144.5 171.5h0M1144.5 174.5h0M1145.5 160.5h0M1145.5 163.5h0M1145.5 168.5h0M1145.5 170.5h0M1146.5 152.5h0M1146.5 157.5h0M1146.5 159.5h0M1146.5 174.5h0M1146.5 179.5h0M1147.5 161.5h0M1147.5 171.5h0M1147.5 172.5h0M1147.5 177.5h0M1148.5 168.5h0M1148.5 171.5h0M1148.5 182.5h0M1148.5 183.5h0M1149.5 160.5h0M1149.5 164.5h0M1149.5 168.5h0M1150.5 154.5h0M1150.5 160.5h0M1150.5 161.5h0M1150.5 162.5h0M1151.5 159.5h0M1151.5 163.5h0M1151.5 168.5h0M1152.5 154.5h0M1152.5 155.5h0M1152.5 157.5h0M1152.5 163.5h0M1153.5 164.5h0M1153.5 168.5h0M1153.5 172.5h0M1153.5 175.5h0M1154.5 155.5h0M1154.5 157.5h0M1154.5 158.5h0M1154.5 170.5h0M1155.5 147.5h0M1155.5 151.5h0M1155.5 153.5h0M1155.5 166.5h0M1156.5 151.5h0M1156.5 165.5h0M1156.5 167.5h0M1156.5 178.5h0M1157.5 156.5h0M1157.5 168.5h0M1157.5 176.5h0M1157.5 179.5h0M1158.5 157.5h0M1158.5 162.5h0M1158.5 167.5h0M1158.5 173.5h0M1158.5 176.5h0M1159.5 157.5h0M1159.5 163.5h0M1159.5 180.5h0M1159.5 188.5h0M1160.5 165.5h0M1160.5 171.5h0M1160.5 173.5h0M1161.5 167.5h0M1161.5 169.5h0M1161.5 175.5h0M1161.5 178.5h0M1162.5 157.5h0M1162.5 166.5h0M1162.5 168.5h0M1162.5 169.5h0M1163.5 160.5h0M1163.5 163.5h0M1163.5 172.5h0M1163.5 173.5h0M1163.5 174.5h0M1164.5 138.5h0M1164.5 148.5h0M1164.5 157.5h0M1164.5 169.5h0M1165.5 139.5h0M1165.5 145.5h0M1165.5 167.5h0M1165.5 169.5h0M1166.5 158.5h0M1166.5 171.5h0M1166.5 183.5h0M1167.5 143.5h0M1167.5 161.5h0M1167.5 170.5h0M1167.5 177.5h0M1168.5 164.5h0M1168.5 165.5h0M1168.5 166.5h0M1168.5 176.5h0M1169.5 171.5h0M1169.5 173.5h0M1169.5 175.5h0M1169.5 185.5h0M1169.5 187.5h0M1170.5 155.5h0M1170.5 157.5h0M1170.5 163.5h0M1170.5 173.5h0M1171.5 137.5h0M1171.5 149.5h0M1171.5 157.5h0M1172.5 148.5h0M1172.5 153.5h0M1172.5 157.5h0M1172.5 178.5h0M1173.5 171.5h0M1173.5 174.5h0M1173.5 175.5h0M1173.5 176.5h0M1174.5 154.5h0M1174.5 156.5h0M1174.5 173.5h0M1174.5 175.5h0M1175.5 154.5h0M1175.5 156.5h0M1175.5 158.5h0M1175.5 163.5h0M1176.5 148.5h0M1176.5 149.5h0M1176.5 153.5h0M1176.5 158.5h0M1177.5 162.5h0M1177.5 164.5h0M1177.5 169.5h0M1177.5 176.5h0M1178.5 162.5h0M1178.5 168.5h0M1178.5 171.5h0M1178.5 176.5h0M1179.5 165.5h0M1179.5 166.5h0M1179.5 169.5h0M1179.5 176.5h0M1180.5 164.5h0M1180.5 165.5h0M1180.5 176.5h0M1180.5 178.5h0M1181.5 176.5h0M1181.5 179.5h0M1181.5 183.5h0M1181.5 186.5h0M1182.5 175.5h0M1182.5 177.5h0M1182.5 178.5h0M1183.5 172.5h0M1183.5 175.5h0M1183.5 177.5h0M1183.5 180.5h0M1184.5 163.5h0M1184.5 167.5h0M1184.5 169.5h0M1184.5 174.5h0M1185.5 165.5h0M1185.5 169.5h0M1185.5 171.5h0M1185.5 173.5h0M1186.5 174.5h0M1186.5 182.5h0M1186.5 188.5h0M1186.5 189.5h0M1186.5 192.5h0M1187.5 150.5h0M1187.5 161.5h0M1187.5 164.5h0M1187.5 173.5h0M1188.5 154.5h0M1188.5 166.5h0M1188.5 170.5h0M1188.5 178.5h0M1189.5 157.5h0M1189.5 158.5h0M1189.5 172.5h0M1189.5 183.5h0M1190.5 155.5h0M1190.5 161.5h0M1190.5 163.5h0M1190.5 173.5h0M1191.5 155.5h0M1191.5 158.5h0M1191.5 162.5h0M1191.5 165.5h0M1192.5 149.5h0M1192.5 161.5h0M1192.5 165.5h0M1192.5 170.5h0M1192.5 173.5h0M1193.5 144.5h0M1193.5 149.5h0M1193.5 153.5h0M1193.5 155.5h0M1194.5 137.5h0M1194.5 138.5h0M1194.5 142.5h0M1195.5 138.5h0M1195.5 140.5h0M1195.5 143.5h0M1196.5 146.5h0M1196.5 151.5h0M1196.5 152.5h0M1196.5 164.5h0M1197.5 148.5h0M1197.5 149.5h0M1197.5 153.5h0M1197.5 155.5h0M1198.5 150.5h0M1198.5 154.5h0M1198.5 156.5h0M1198.5 157.5h0M1198.5 162.5h0M1199.5 137.5h0M1199.5 138.5h0M1199.5 161.5h0M1199.5 166.5h0M1200.5 137.5h0M1200.5 139.5h0M1201.5 137.5h0M1201.5 139.5h0M1201.5 147.5h0M1201.5 149.5h0M1202.5 144.5h0M1202.5 156.5h0M1202.5 165.5h0M1202.5 170.5h0M1203.5 151.5h0M1203.5 155.5h0M1203.5 157.5h0M1203.5 158.5h0M1203.5 168.5h0M1204.5 157.5h0M1204.5 162.5h0M1204.5 166.5h0M1204.5 174.5h0M1205.5 154.5h0M1205.5 156.5h0M1205.5 159.5h0M1205.5 161.5h0M1206.5 148.5h0M1206.5 159.5h0M1206.5 162.5h0M1206.5 167.5h0M1207.5 143.5h0M1207.5 144.5h0M1207.5 157.5h0M1207.5 158.5h0M1208.5 149.5h0M1208.5 157.5h0M1208.5 159.5h0M1208.5 164.5h0M1209.5 163.5h0M1209.5 164.5h0M1209.5 168.5h0M1209.5 170.5h0M1209.5 171.5h0M1210.5 168.5h0M1210.5 170.5h0M1210.5 177.5h0M1210.5 181.5h0M1211.5 173.5h0M1211.5 178.5h0M1211.5 182.5h0M1211.5 184.5h0M1212.5 173.5h0M1212.5 179.5h0M1212.5 186.5h0M1212.5 192.5h0M1213.5 168.5h0M1213.5 170.5h0M1213.5 179.5h0M1213.5 184.5h0M1214.5 166.5h0M1214.5 171.5h0M1214.5 182.5h0M1214.5 187.5h0M1215.5 149.5h0M1215.5 169.5h0M1215.5 174.5h0M1215.5 183.5h0M1216.5 146.5h0M1216.5 151.5h0M1216.5 157.5h0M1216.5 168.5h0M1217.5 166.5h0M1217.5 168.5h0M1217.5 169.5h0M1218.5 158.5h0M1218.5 163.5h0M1218.5 164.5h0M1218.5 170.5h0M1219.5 157.5h0M1219.5 171.5h0M1219.5 176.5h0M1220.5 159.5h0M1220.5 168.5h0M1220.5 170.5h0M1221.5 158.5h0M1221.5 160.5h0M1221.5 164.5h0M1221.5 171.5h0M1221.5 175.5h0M1222.5 155.5h0M1222.5 164.5h0M1222.5 165.5h0M1222.5 173.5h0M1223.5 171.5h0M1223.5 173.5h0M1223.5 175.5h0M1224.5 172.5h0M1224.5 173.5h0M1224.5 176.5h0M1225.5 179.5h0M1225.5 181.5h0M1225.5 185.5h0M1225.5 189.5h0M1226.5 166.5h0M1226.5 177.5h0M1226.5 179.5h0M1226.5 183.5h0M1226.5 184.5h0M1227.5 172.5h0M1227.5 174.5h0M1227.5 175.5h0M1227.5 178.5h0M1228.5 168.5h0M1228.5 170.5h0M1228.5 173.5h0M1229.5 156.5h0M1229.5 162.5h0M1229.5 163.5h0M1230.5 160.5h0M1230.5 165.5h0M1230.5 166.5h0M1230.5 179.5h0M1231.5 174.5h0M1231.5 175.5h0M1231.5 180.5h0M1232.5 161.5h0M1232.5 164.5h0M1232.5 166.5h0M1232.5 167.5h0M1232.5 179.5h0M1233.5 161.5h0M1233.5 162.5h0M1233.5 163.5h0M1233.5 166.5h0M1234.5 161.5h0M1234.5 163.5h0M1234.5 170.5h0M1234.5 172.5h0M1235.5 164.5h0M1235.5 170.5h0M1235.5 171.5h0M1235.5 182.5h0M1236.5 157.5h0M1236.5 163.5h0M1236.5 173.5h0M1236.5 174.5h0M1237.5 156.5h0M1237.5 160.5h0M1237.5 161.5h0M1237.5 162.5h0M1238.5 137.5h0M1238.5 145.5h0M1238.5 148.5h0M1238.5 150.5h0M1238.5 158.5h0M1239.5 137.5h0M1239.5 138.5h0M1239.5 139.5h0M1239.5 151.5h0M1240.5 137.5h0M1240.5 156.5h0M1240.5 164.5h0M1241.5 157.5h0M1241.5 158.5h0M1241.5 160.5h0M1241.5 169.5h0M1242.5 156.5h0M1242.5 159.5h0M1242.5 162.5h0M1243.5 143.5h0M1243.5 145.5h0M1243.5 146.5h0M1243.5 149.5h0M1244.5 143.5h0M1244.5 145.5h0M1244.5 167.5h0M1244.5 173.5h0M1245.5 141.5h0M1245.5 142.5h0M1245.5 151.5h0M1245.5 157.5h0M1246.5 170.5h0M1246.5 177.5h0M1246.5 182.5h0M1247.5 168.5h0M1247.5 182.5h0M1247.5 184.5h0M1248.5 158.5h0M1248.5 163.5h0M1248.5 170.5h0M1248.5 172.5h0M1249.5 165.5h0M1249.5 172.5h0M1249.5 177.5h0M1249.5 179.5h0M1249.5 183.5h0M1250.5 147.5h0M1250.5 152.5h0M1250.5 167.5h0M1251.5 149.5h0M1251.5 158.5h0M1251.5 169.5h0M1251.5 176.5h0M1252.5 167.5h0M1252.5 169.5h0M1252.5 171.5h0M1252.5 175.5h0M1253.5 156.5h0M1253.5 168.5h0M1253.5 177.5h0M1254.5 161.5h0M1254.5 166.5h0M1254.5 168.5h0M1255.5 159.5h0M1255.5 162.5h0M1255.5 167.5h0M1255.5 168.5h0M1255.5 172.5h0M1256.5 167.5h0M1256.5 178.5h0M1256.5 182.5h0M1256.5 188.5h0M1257.5 168.5h0M1257.5 173.5h0M1257.5 174.5h0M1258.5 167.5h0M1258.5 170.5h0M1258.5 175.5h0M1258.5 177.5h0M1259.5 160.5h0M1259.5 163.5h0M1259.5 168.5h0M1259.5 175.5h0M1260.5 158.5h0M1260.5 164.5h0M1260.5 168.5h0M1261.5 155.5h0M1261.5 157.5h0M1261.5 163.5h0M1261.5 173.5h0M1262.5 139.5h0M1262.5 145.5h0M1263.5 137.5h0M1263.5 138.5h0M1263.5 146.5h0M1263.5 152.5h0M1264.5 137.5h0M1264.5 138.5h0M1264.5 139.5h0M1264.5 140.5h0M1265.5 137.5h0M1265.5 138.5h0M1265.5 151.5h0M1266.5 157.5h0M1266.5 161.5h0M1266.5 168.5h0M1266.5 175.5h0M1266.5 177.5h0M1267.5 167.5h0M1267.5 171.5h0M1267.5 176.5h0M1267.5 178.5h0M1268.5 149.5h0M1268.5 160.5h0M1268.5 164.5h0M1268.5 171.5h0M1269.5 146.5h0M1269.5 153.5h0M1269.5 158.5h0M1269.5 159.5h0M1270.5 138.5h0M1270.5 139.5h0M1270.5 147.5h0M1271.5 146.5h0M1271.5 148.5h0M1271.5 156.5h0M1271.5 160.5h0M1272.5 165.5h0M1272.5 166.5h0M1272.5 169.5h0M1272.5 170.5h0M1272.5 175.5h0M1273.5 167.5h0M1273.5 169.5h0M1274.5 165.5h0M1274.5 168.5h0M1274.5 182.5h0M1275.5 167.5h0M1275.5 170.5h0M1275.5 176.5h0M1275.5 179.5h0M1276.5 150.5h0M1276.5 153.5h0M1276.5 158.5h0M1276.5 164.5h0M1277.5 153.5h0M1277.5 166.5h0M1277.5 184.5h0M1278.5 158.5h0M1278.5 167.5h0M1278.5 169.5h0M1278.5 177.5h0M1278.5 184.5h0M1279.5 167.5h0M1279.5 170.5h0M1279.5 174.5h0M1279.5 177.5h0M1280.5 161.5h0M1280.5 170.5h0M1280.5 171.5h0M1280.5 173.5h0M1281.5 160.5h0M1281.5 175.5h0M1281.5 185.5h0M1281.5 186.5h0M1282.5 145.5h0M1282.5 152.5h0M1282.5 159.5h0M1283.5 149.5h0M1283.5 153.5h0M1283.5 170.5h0M1283.5 178.5h0M1284.5 145.5h0M1284.5 155.5h0M1284.5 164.5h0M1284.5 165.5h0M1284.5 171.5h0M1285.5 160.5h0M1285.5 170.5h0M1285.5 172.5h0M1285.5 179.5h0M1286.5 160.5h0M1286.5 164.5h0M1286.5 169.5h0M1286.5 170.5h0M1287.5 159.5h0M1287.5 162.5h0M1287.5 163.5h0M1287.5 169.5h0M1288.5 147.5h0M1288.5 150.5h0M1288.5 152.5h0M1288.5 156.5h0M1289.5 146.5h0M1289.5 149.5h0M1289.5 159.5h0M1289.5 163.5h0M1289.5 173.5h0M1290.5 164.5h0M1290.5 167.5h0M1290.5 172.5h0M1290.5 183.5h0M1291.5 167.5h0M1291.5 169.5h0M1291.5 176.5h0M1292.5 171.5h0M1292.5 172.5h0M1292.5 180.5h0M1292.5 183.5h0M1293.5 165.5h0M1293.5 170.5h0M1293.5 175.5h0M1293.5 176.5h0M1294.5 183.5h0M1294.5 184.5h0M1294.5 189.5h0M1294.5 191.5h0M1295.5 165.5h0M1295.5 169.5h0M1295.5 172.5h0M1295.5 184.5h0M1295.5 185.5h0M1296.5 165.5h0M1296.5 166.5h0M1296.5 172.5h0M1296.5 181.5h0M1297.5 175.5h0M1297.5 176.5h0M1297.5 180.5h0M1298.5 148.5h0M1298.5 158.5h0M1298.5 162.5h0M1298.5 164.5h0M1299.5 170.5h0M1299.5 172.5h0M1299.5 174.5h0M1299.5 179.5h0M1300.5 157.5h0M1300.5 159.5h0M1300.5 162.5h0M1300.5 165.5h0M1301.5 153.5h0M1301.5 155.5h0M1301.5 158.5h0M1301.5 160.5h0M1301.5 173.5h0M1302.5 155.5h0M1302.5 156.5h0M1302.5 157.5h0" stroke="#000" stroke-width="3.7" stroke-linecap="round" fill="none"/>
<path d="M332.5 120.5h0M372.5 119.5h0M421.5 119.5h0M554.5 121.5h0M605.5 175.5h0M688.5 183.5h0M704.5 237.5h0M757.5 208.5h0M790.5 194.5h0M791.5 173.5h0M793.5 182.5h0M1023.5 121.5h0" stroke="#ffa500" stroke-width="3.6" stroke-linecap="round" fill="none"/>
<g stroke="#800080" stroke-width="2.08" stroke-dasharray="2.08 3.44" fill="none"><line x1="162.3" y1="321.5" x2="162.3" y2="35.5"/><line x1="1121.1" y1="321.5" x2="1121.1" y2="35.5"/><line x1="1302.9" y1="321.5" x2="1302.9" y2="35.5"/></g>
<line x1="105.5" y1="97.9" x2="1361" y2="97.9" stroke="#008000" stroke-width="2.08"/>
</g>
<rect x="105.5" y="35.5" width="1380.0" height="286.0" fill="none" stroke="#000" stroke-width="1" shape-rendering="crispEdges"/>
<g stroke="#000" stroke-width="1" shape-rendering="crispEdges"><line x1="162.5" y1="321.5" x2="162.5" y2="326.5"/><line x1="396.5" y1="321.5" x2="396.5" y2="326.5"/><line x1="629.5" y1="321.5" x2="629.5" y2="326.5"/><line x1="863.5" y1="321.5" x2="863.5" y2="326.5"/><line x1="1097.5" y1="321.5" x2="1097.5" y2="326.5"/><line x1="1330.5" y1="321.5" x2="1330.5" y2="326.5"/></g><g font-size="13.89px" text-anchor="middle" fill="#000"><text x="163.4" y="341.8">0</text><text x="396.3" y="341.8">1000</text><text x="630.0" y="341.8">2000</text><text x="862.6" y="341.8">3000</text><text x="1096.7" y="341.8">4000</text><text x="1328.9" y="341.8">5000</text></g>
<g stroke="#000" stroke-width="1" shape-rendering="crispEdges"><line x1="100.5" y1="273.5" x2="105.5" y2="273.5"/><line x1="100.5" y1="217.5" x2="105.5" y2="217.5"/><line x1="100.5" y1="162.5" x2="105.5" y2="162.5"/><line x1="100.5" y1="106.5" x2="105.5" y2="106.5"/><line x1="100.5" y1="50.5" x2="105.5" y2="50.5"/></g><g font-size="13.89px" text-anchor="end" fill="#000"><text x="95.2" y="278.1">5.80</text><text x="95.2" y="222.1">5.82</text><text x="95.2" y="167.1">5.84</text><text x="95.2" y="111.1">5.86</text><text x="95.2" y="55.1">5.88</text></g>
<text x="794.6" y="27.2" font-size="16.67px" text-anchor="middle">AGASC ID 112600752</text>
<g font-size="13.89px" text-anchor="middle"><text x="641.7" y="312">51140</text><text x="1211.4" y="292">49436</text></g>
<rect x="1361.3" y="42.5" width="117.4" height="27.2" rx="2.8" ry="2.8" fill="#fff" fill-opacity="0.8" stroke="#ccc" stroke-opacity="0.8" stroke-width="1.1"/>
<line x1="1366.1" y1="54" x2="1396" y2="54" stroke="#008000" stroke-width="2.08"/>
<text x="1406.9" y="58.9" font-size="13.89px">mag<tspan font-size="9.72px" font-style="italic" dy="2.1" letter-spacing="0.35">AGASC</tspan></text>
<rect x="1408.3" y="289.3" width="70.4" height="25.1" rx="2.8" ry="2.8" fill="#fff" fill-opacity="0.8" stroke="#ccc" stroke-opacity="0.8" stroke-width="1.1"/>
<circle cx="1428.3" cy="302.3" r="2.1" fill="#000"/>
<text x="1452.8" y="305.8" font-size="13.89px">OK</text>
<g clip-path="url(#c2)">
<path d="M162.5 496.5h0M162.5 504.5h0M162.5 522.5h0M163.5 500.5h0M163.5 509.5h0M163.5 526.5h0M163.5 536.5h0M164.5 490.5h0M164.5 529.5h0M164.5 540.5h0M164.5 560.5h0M165.5 487.5h0M165.5 490.5h0M165.5 511.5h0M165.5 528.5h0M166.5 497.5h0M166.5 508.5h0M166.5 512.5h0M166.5 519.5h0M167.5 486.5h0M167.5 487.5h0M167.5 494.5h0M167.5 497.5h0M167.5 507.5h0M168.5 509.5h0M168.5 511.5h0M168.5 521.5h0M168.5 538.5h0M169.5 463.5h0M169.5 464.5h0M169.5 474.5h0M170.5 498.5h0M170.5 500.5h0M170.5 507.5h0M170.5 522.5h0M171.5 496.5h0M171.5 500.5h0M171.5 525.5h0M171.5 526.5h0M172.5 494.5h0M172.5 513.5h0M172.5 516.5h0M172.5 530.5h0M173.5 508.5h0M173.5 511.5h0M173.5 513.5h0M173.5 522.5h0M173.5 538.5h0M174.5 504.5h0M174.5 513.5h0M174.5 514.5h0M174.5 516.5h0M175.5 484.5h0M175.5 490.5h0M175.5 493.5h0M175.5 518.5h0M176.5 519.5h0M176.5 520.5h0M176.5 523.5h0M176.5 561.5h0M177.5 505.5h0M177.5 517.5h0M177.5 524.5h0M177.5 566.5h0M178.5 528.5h0M178.5 532.5h0M178.5 539.5h0M178.5 557.5h0M178.5 563.5h0M179.5 525.5h0M179.5 546.5h0M179.5 548.5h0M180.5 522.5h0M180.5 529.5h0M180.5 532.5h0M181.5 522.5h0M181.5 531.5h0M181.5 539.5h0M182.5 525.5h0M182.5 546.5h0M182.5 562.5h0M183.5 498.5h0M183.5 512.5h0M183.5 526.5h0M183.5 568.5h0M184.5 489.5h0M184.5 492.5h0M184.5 503.5h0M184.5 506.5h0M184.5 516.5h0M185.5 498.5h0M185.5 508.5h0M185.5 509.5h0M185.5 540.5h0M186.5 518.5h0M186.5 522.5h0M186.5 540.5h0M186.5 547.5h0M187.5 515.5h0M187.5 527.5h0M187.5 547.5h0M187.5 553.5h0M188.5 508.5h0M188.5 525.5h0M188.5 528.5h0M188.5 534.5h0M189.5 486.5h0M189.5 487.5h0M189.5 489.5h0M189.5 493.5h0M190.5 472.5h0M190.5 474.5h0M190.5 478.5h0M190.5 488.5h0M190.5 503.5h0M191.5 491.5h0M191.5 501.5h0M191.5 508.5h0M191.5 509.5h0M192.5 487.5h0M192.5 493.5h0M192.5 500.5h0M192.5 520.5h0M193.5 515.5h0M193.5 537.5h0M193.5 544.5h0M193.5 557.5h0M194.5 523.5h0M194.5 525.5h0M194.5 538.5h0M194.5 539.5h0M195.5 515.5h0M195.5 524.5h0M195.5 525.5h0M195.5 529.5h0M196.5 507.5h0M196.5 513.5h0M196.5 524.5h0M196.5 525.5h0M196.5 546.5h0M197.5 511.5h0M197.5 513.5h0M197.5 528.5h0M197.5 533.5h0M198.5 511.5h0M198.5 539.5h0M198.5 553.5h0M198.5 565.5h0M199.5 508.5h0M199.5 513.5h0M199.5 520.5h0M200.5 523.5h0M200.5 525.5h0M200.5 531.5h0M200.5 549.5h0M201.5 512.5h0M201.5 543.5h0M201.5 549.5h0M201.5 553.5h0M201.5 560.5h0M202.5 518.5h0M202.5 530.5h0M202.5 537.5h0M202.5 547.5h0M203.5 490.5h0M203.5 503.5h0M203.5 506.5h0M203.5 522.5h0M204.5 491.5h0M204.5 506.5h0M204.5 509.5h0M204.5 513.5h0M205.5 501.5h0M205.5 503.5h0M205.5 506.5h0M205.5 508.5h0M206.5 501.5h0M206.5 510.5h0M206.5 513.5h0M206.5 518.5h0M207.5 500.5h0M207.5 510.5h0M207.5 513.5h0M207.5 518.5h0M207.5 520.5h0M208.5 508.5h0M208.5 517.5h0M208.5 519.5h0M208.5 528.5h0M209.5 481.5h0M209.5 492.5h0M209.5 508.5h0M209.5 511.5h0M210.5 508.5h0M210.5 522.5h0M210.5 539.5h0M210.5 547.5h0M211.5 516.5h0M211.5 517.5h0M211.5 520.5h0M211.5 523.5h0M212.5 495.5h0M212.5 499.5h0M212.5 512.5h0M212.5 514.5h0M213.5 491.5h0M213.5 510.5h0M213.5 520.5h0M213.5 531.5h0M213.5 554.5h0M214.5 525.5h0M214.5 527.5h0M214.5 533.5h0M214.5 542.5h0M215.5 508.5h0M215.5 527.5h0M215.5 542.5h0M215.5 559.5h0M216.5 531.5h0M216.5 538.5h0M216.5 544.5h0M216.5 546.5h0M217.5 537.5h0M217.5 541.5h0M217.5 543.5h0M217.5 556.5h0M218.5 486.5h0M218.5 502.5h0M218.5 506.5h0M218.5 509.5h0M218.5 517.5h0M219.5 488.5h0M219.5 504.5h0M219.5 506.5h0M219.5 516.5h0M220.5 471.5h0M220.5 472.5h0M220.5 478.5h0M220.5 484.5h0M221.5 472.5h0M221.5 489.5h0M221.5 503.5h0M221.5 504.5h0M222.5 474.5h0M222.5 480.5h0M222.5 485.5h0M222.5 509.5h0M223.5 496.5h0M223.5 507.5h0M223.5 514.5h0M223.5 544.5h0M224.5 506.5h0M224.5 511.5h0M224.5 525.5h0M224.5 532.5h0M224.5 537.5h0M225.5 529.5h0M225.5 533.5h0M225.5 536.5h0M225.5 537.5h0M226.5 514.5h0M226.5 522.5h0M226.5 531.5h0M226.5 534.5h0M227.5 496.5h0M227.5 506.5h0M227.5 513.5h0M227.5 515.5h0M228.5 495.5h0M228.5 499.5h0M228.5 510.5h0M228.5 526.5h0M229.5 464.5h0M229.5 469.5h0M229.5 518.5h0M229.5 553.5h0M230.5 485.5h0M230.5 495.5h0M230.5 504.5h0M230.5 556.5h0M230.5 564.5h0M231.5 475.5h0M231.5 517.5h0M231.5 534.5h0M231.5 535.5h0M232.5 535.5h0M232.5 553.5h0M232.5 556.5h0M233.5 519.5h0M233.5 541.5h0M233.5 545.5h0M233.5 556.5h0M234.5 519.5h0M234.5 537.5h0M234.5 544.5h0M234.5 552.5h0M235.5 526.5h0M235.5 531.5h0M235.5 536.5h0M235.5 541.5h0M236.5 516.5h0M236.5 522.5h0M236.5 524.5h0M236.5 543.5h0M236.5 564.5h0M237.5 560.5h0M237.5 566.5h0M237.5 568.5h0M237.5 569.5h0M238.5 562.5h0M238.5 563.5h0M238.5 564.5h0M239.5 529.5h0M239.5 543.5h0M239.5 561.5h0M239.5 564.5h0M240.5 511.5h0M240.5 516.5h0M240.5 532.5h0M240.5 567.5h0M241.5 505.5h0M241.5 506.5h0M241.5 516.5h0M241.5 528.5h0M241.5 531.5h0M242.5 489.5h0M242.5 507.5h0M242.5 518.5h0M242.5 548.5h0M243.5 473.5h0M243.5 489.5h0M243.5 518.5h0M243.5 520.5h0M244.5 476.5h0M244.5 477.5h0M244.5 497.5h0M244.5 521.5h0M245.5 475.5h0M245.5 485.5h0M245.5 495.5h0M245.5 511.5h0M246.5 499.5h0M246.5 515.5h0M246.5 527.5h0M246.5 528.5h0M247.5 470.5h0M247.5 473.5h0M247.5 481.5h0M247.5 482.5h0M247.5 511.5h0M248.5 484.5h0M248.5 491.5h0M248.5 492.5h0M248.5 500.5h0M249.5 471.5h0M249.5 494.5h0M249.5 505.5h0M249.5 513.5h0M250.5 503.5h0M250.5 522.5h0M250.5 527.5h0M250.5 530.5h0M251.5 503.5h0M251.5 504.5h0M251.5 506.5h0M251.5 536.5h0M252.5 507.5h0M252.5 513.5h0M252.5 523.5h0M252.5 556.5h0M253.5 529.5h0M253.5 535.5h0M253.5 536.5h0M253.5 539.5h0M254.5 529.5h0M254.5 537.5h0M254.5 540.5h0M254.5 542.5h0M255.5 521.5h0M255.5 522.5h0M255.5 541.5h0M256.5 509.5h0M256.5 514.5h0M256.5 520.5h0M256.5 521.5h0M257.5 493.5h0M257.5 503.5h0M257.5 505.5h0M257.5 510.5h0M258.5 478.5h0M258.5 487.5h0M258.5 488.5h0M258.5 508.5h0M259.5 497.5h0M259.5 510.5h0M259.5 513.5h0M259.5 521.5h0M259.5 523.5h0M260.5 527.5h0M260.5 535.5h0M260.5 537.5h0M260.5 550.5h0M261.5 506.5h0M261.5 517.5h0M261.5 522.5h0M261.5 537.5h0M262.5 526.5h0M262.5 535.5h0M262.5 553.5h0M262.5 559.5h0M263.5 498.5h0M263.5 502.5h0M263.5 522.5h0M263.5 523.5h0M264.5 518.5h0M264.5 522.5h0M264.5 525.5h0M264.5 528.5h0M264.5 531.5h0M265.5 509.5h0M265.5 523.5h0M265.5 526.5h0M265.5 529.5h0M266.5 504.5h0M266.5 506.5h0M266.5 516.5h0M266.5 525.5h0M267.5 508.5h0M267.5 522.5h0M267.5 523.5h0M267.5 524.5h0M268.5 505.5h0M268.5 517.5h0M268.5 521.5h0M268.5 522.5h0M269.5 502.5h0M269.5 511.5h0M269.5 523.5h0M269.5 533.5h0M270.5 486.5h0M270.5 487.5h0M270.5 489.5h0M270.5 502.5h0M270.5 512.5h0M271.5 496.5h0M271.5 501.5h0M271.5 506.5h0M271.5 509.5h0M272.5 504.5h0M272.5 510.5h0M272.5 513.5h0M272.5 523.5h0M273.5 510.5h0M273.5 531.5h0M273.5 543.5h0M274.5 489.5h0M274.5 522.5h0M274.5 535.5h0M274.5 538.5h0M275.5 474.5h0M275.5 483.5h0M275.5 506.5h0M275.5 507.5h0M276.5 516.5h0M276.5 521.5h0M276.5 523.5h0M276.5 550.5h0M276.5 561.5h0M277.5 515.5h0M277.5 524.5h0M277.5 529.5h0M277.5 533.5h0M278.5 492.5h0M278.5 505.5h0M278.5 518.5h0M278.5 521.5h0M279.5 487.5h0M279.5 494.5h0M279.5 497.5h0M279.5 521.5h0M280.5 515.5h0M280.5 516.5h0M280.5 518.5h0M280.5 534.5h0M281.5 490.5h0M281.5 491.5h0M281.5 503.5h0M281.5 511.5h0M281.5 517.5h0M282.5 472.5h0M282.5 473.5h0M282.5 480.5h0M282.5 496.5h0M283.5 476.5h0M283.5 477.5h0M283.5 494.5h0M283.5 516.5h0M284.5 475.5h0M284.5 477.5h0M284.5 501.5h0M284.5 505.5h0M285.5 500.5h0M285.5 507.5h0M285.5 510.5h0M285.5 521.5h0M286.5 525.5h0M286.5 531.5h0M286.5 534.5h0M286.5 540.5h0M287.5 528.5h0M287.5 537.5h0M287.5 539.5h0M287.5 549.5h0M287.5 554.5h0M288.5 506.5h0M288.5 519.5h0M288.5 529.5h0M288.5 534.5h0M289.5 510.5h0M289.5 519.5h0M289.5 523.5h0M289.5 528.5h0M290.5 534.5h0M290.5 547.5h0M290.5 553.5h0M291.5 527.5h0M291.5 528.5h0M291.5 530.5h0M291.5 531.5h0M292.5 523.5h0M292.5 533.5h0M292.5 536.5h0M293.5 532.5h0M293.5 543.5h0M293.5 547.5h0M293.5 548.5h0M293.5 550.5h0M294.5 521.5h0M294.5 522.5h0M294.5 538.5h0M294.5 550.5h0M295.5 487.5h0M295.5 508.5h0M295.5 511.5h0M295.5 533.5h0M296.5 474.5h0M296.5 506.5h0M296.5 514.5h0M296.5 521.5h0M297.5 469.5h0M297.5 478.5h0M297.5 495.5h0M297.5 501.5h0M298.5 483.5h0M298.5 516.5h0M298.5 543.5h0M298.5 548.5h0M299.5 526.5h0M299.5 534.5h0M299.5 537.5h0M299.5 538.5h0M299.5 541.5h0M300.5 528.5h0M300.5 534.5h0M300.5 537.5h0M300.5 538.5h0M301.5 502.5h0M301.5 514.5h0M301.5 515.5h0M302.5 509.5h0M302.5 518.5h0M302.5 521.5h0M302.5 539.5h0M303.5 514.5h0M303.5 519.5h0M303.5 521.5h0M303.5 529.5h0M304.5 495.5h0M304.5 507.5h0M304.5 509.5h0M304.5 511.5h0M305.5 483.5h0M305.5 521.5h0M305.5 528.5h0M305.5 535.5h0M306.5 500.5h0M306.5 504.5h0M306.5 523.5h0M307.5 480.5h0M307.5 504.5h0M307.5 509.5h0M307.5 528.5h0M308.5 468.5h0M308.5 471.5h0M308.5 491.5h0M308.5 497.5h0M309.5 489.5h0M309.5 499.5h0M309.5 507.5h0M309.5 525.5h0M310.5 500.5h0M310.5 504.5h0M310.5 506.5h0M310.5 508.5h0M310.5 510.5h0M311.5 522.5h0M311.5 530.5h0M311.5 537.5h0M311.5 538.5h0M312.5 506.5h0M312.5 535.5h0M312.5 544.5h0M312.5 545.5h0M313.5 505.5h0M313.5 509.5h0M313.5 518.5h0M313.5 522.5h0M314.5 502.5h0M314.5 514.5h0M314.5 515.5h0M314.5 529.5h0M315.5 496.5h0M315.5 510.5h0M315.5 515.5h0M315.5 519.5h0M316.5 501.5h0M316.5 510.5h0M316.5 527.5h0M316.5 539.5h0M316.5 565.5h0M317.5 524.5h0M317.5 556.5h0M317.5 563.5h0M317.5 565.5h0M318.5 492.5h0M318.5 502.5h0M318.5 512.5h0M318.5 516.5h0M319.5 499.5h0M319.5 521.5h0M319.5 524.5h0M320.5 535.5h0M320.5 539.5h0M320.5 550.5h0M320.5 553.5h0M321.5 512.5h0M321.5 522.5h0M321.5 528.5h0M322.5 499.5h0M322.5 510.5h0M322.5 512.5h0M322.5 522.5h0M323.5 472.5h0M323.5 489.5h0M323.5 496.5h0M323.5 525.5h0M324.5 473.5h0M324.5 476.5h0M324.5 481.5h0M324.5 483.5h0M325.5 495.5h0M325.5 496.5h0M325.5 498.5h0M325.5 509.5h0M326.5 530.5h0M326.5 537.5h0M326.5 545.5h0M326.5 551.5h0M327.5 513.5h0M327.5 517.5h0M327.5 524.5h0M327.5 526.5h0M328.5 523.5h0M328.5 526.5h0M328.5 538.5h0M328.5 542.5h0M329.5 530.5h0M329.5 534.5h0M329.5 547.5h0M329.5 550.5h0M330.5 504.5h0M330.5 516.5h0M330.5 520.5h0M330.5 541.5h0M331.5 487.5h0M331.5 497.5h0M331.5 505.5h0M331.5 510.5h0M332.5 500.5h0M332.5 504.5h0M332.5 506.5h0M332.5 534.5h0M333.5 497.5h0M333.5 501.5h0M333.5 507.5h0M333.5 515.5h0M333.5 516.5h0M334.5 507.5h0M334.5 511.5h0M334.5 520.5h0M334.5 527.5h0M335.5 484.5h0M335.5 501.5h0M335.5 505.5h0M335.5 515.5h0M336.5 504.5h0M336.5 508.5h0M336.5 509.5h0M336.5 510.5h0M337.5 512.5h0M337.5 516.5h0M337.5 523.5h0M337.5 524.5h0M338.5 491.5h0M338.5 499.5h0M338.5 511.5h0M338.5 532.5h0M339.5 501.5h0M339.5 503.5h0M339.5 504.5h0M339.5 514.5h0M339.5 521.5h0M340.5 498.5h0M340.5 505.5h0M340.5 516.5h0M340.5 526.5h0M341.5 494.5h0M341.5 504.5h0M341.5 514.5h0M341.5 527.5h0M342.5 486.5h0M342.5 501.5h0M342.5 504.5h0M342.5 518.5h0M343.5 497.5h0M343.5 509.5h0M343.5 519.5h0M343.5 521.5h0M344.5 499.5h0M344.5 502.5h0M344.5 503.5h0M344.5 516.5h0M344.5 526.5h0M345.5 489.5h0M345.5 500.5h0M345.5 522.5h0M345.5 534.5h0M346.5 511.5h0M346.5 516.5h0M346.5 526.5h0M346.5 530.5h0M347.5 494.5h0M347.5 498.5h0M347.5 510.5h0M347.5 518.5h0M348.5 530.5h0M348.5 543.5h0M348.5 545.5h0M348.5 550.5h0M349.5 516.5h0M349.5 517.5h0M349.5 525.5h0M349.5 542.5h0M350.5 494.5h0M350.5 513.5h0M350.5 534.5h0M350.5 537.5h0M350.5 545.5h0M351.5 509.5h0M351.5 526.5h0M351.5 534.5h0M351.5 548.5h0M352.5 513.5h0M352.5 520.5h0M352.5 522.5h0M352.5 527.5h0M353.5 475.5h0M353.5 496.5h0M353.5 499.5h0M353.5 512.5h0M354.5 480.5h0M354.5 489.5h0M354.5 495.5h0M354.5 503.5h0M355.5 497.5h0M355.5 505.5h0M355.5 508.5h0M355.5 511.5h0M356.5 490.5h0M356.5 500.5h0M356.5 508.5h0M356.5 512.5h0M357.5 492.5h0M357.5 508.5h0M357.5 509.5h0M357.5 523.5h0M358.5 512.5h0M358.5 516.5h0M358.5 522.5h0M358.5 538.5h0M359.5 501.5h0M359.5 516.5h0M359.5 517.5h0M359.5 519.5h0M360.5 498.5h0M360.5 506.5h0M360.5 523.5h0M360.5 525.5h0M361.5 513.5h0M361.5 515.5h0M361.5 529.5h0M361.5 530.5h0M362.5 493.5h0M362.5 502.5h0M362.5 509.5h0M362.5 518.5h0M362.5 524.5h0M363.5 495.5h0M363.5 497.5h0M363.5 502.5h0M363.5 509.5h0M364.5 464.5h0M364.5 467.5h0M364.5 513.5h0M365.5 465.5h0M365.5 489.5h0M365.5 491.5h0M365.5 495.5h0M366.5 504.5h0M366.5 510.5h0M366.5 511.5h0M366.5 531.5h0M367.5 482.5h0M367.5 511.5h0M367.5 519.5h0M367.5 524.5h0M367.5 549.5h0M368.5 523.5h0M368.5 528.5h0M368.5 548.5h0M368.5 549.5h0M369.5 491.5h0M369.5 498.5h0M369.5 512.5h0M369.5 520.5h0M370.5 505.5h0M370.5 506.5h0M370.5 509.5h0M370.5 511.5h0M371.5 504.5h0M371.5 534.5h0M371.5 547.5h0M371.5 551.5h0M372.5 502.5h0M372.5 519.5h0M372.5 522.5h0M372.5 548.5h0M373.5 480.5h0M373.5 499.5h0M373.5 503.5h0M373.5 506.5h0M373.5 513.5h0M374.5 469.5h0M374.5 483.5h0M374.5 484.5h0M374.5 511.5h0M375.5 468.5h0M375.5 474.5h0M375.5 491.5h0M375.5 518.5h0M376.5 478.5h0M376.5 480.5h0M376.5 498.5h0M376.5 517.5h0M377.5 522.5h0M377.5 524.5h0M377.5 526.5h0M377.5 530.5h0M378.5 517.5h0M378.5 519.5h0M378.5 525.5h0M379.5 509.5h0M379.5 531.5h0M379.5 532.5h0M379.5 545.5h0M380.5 500.5h0M380.5 511.5h0M380.5 524.5h0M380.5 543.5h0M381.5 511.5h0M381.5 514.5h0M381.5 526.5h0M381.5 536.5h0M382.5 526.5h0M382.5 527.5h0M382.5 531.5h0M382.5 540.5h0M383.5 508.5h0M383.5 509.5h0M383.5 513.5h0M383.5 525.5h0M384.5 514.5h0M384.5 524.5h0M384.5 527.5h0M384.5 544.5h0M385.5 495.5h0M385.5 508.5h0M385.5 518.5h0M385.5 537.5h0M385.5 558.5h0M386.5 468.5h0M386.5 478.5h0M386.5 480.5h0M386.5 495.5h0M387.5 500.5h0M387.5 523.5h0M387.5 538.5h0M387.5 552.5h0M388.5 472.5h0M388.5 491.5h0M388.5 501.5h0M388.5 532.5h0M389.5 503.5h0M389.5 506.5h0M389.5 509.5h0M389.5 515.5h0M390.5 498.5h0M390.5 502.5h0M390.5 512.5h0M390.5 514.5h0M390.5 542.5h0M391.5 466.5h0M391.5 467.5h0M391.5 495.5h0M391.5 503.5h0M392.5 509.5h0M392.5 523.5h0M392.5 525.5h0M392.5 548.5h0M393.5 499.5h0M393.5 509.5h0M393.5 522.5h0M393.5 528.5h0M394.5 494.5h0M394.5 549.5h0M394.5 564.5h0M394.5 568.5h0M395.5 511.5h0M395.5 523.5h0M395.5 530.5h0M395.5 552.5h0M396.5 474.5h0M396.5 479.5h0M396.5 485.5h0M396.5 498.5h0M396.5 499.5h0M397.5 511.5h0M397.5 530.5h0M397.5 542.5h0M397.5 568.5h0M398.5 551.5h0M398.5 555.5h0M398.5 558.5h0M398.5 561.5h0M399.5 543.5h0M399.5 545.5h0M399.5 554.5h0M399.5 558.5h0M400.5 489.5h0M400.5 497.5h0M400.5 509.5h0M400.5 515.5h0M401.5 492.5h0M401.5 494.5h0M401.5 510.5h0M401.5 520.5h0M402.5 489.5h0M402.5 508.5h0M402.5 521.5h0M402.5 526.5h0M402.5 536.5h0M403.5 524.5h0M403.5 526.5h0M403.5 539.5h0M403.5 541.5h0M404.5 505.5h0M404.5 509.5h0M404.5 514.5h0M405.5 494.5h0M405.5 497.5h0M405.5 499.5h0M405.5 505.5h0M406.5 477.5h0M406.5 483.5h0M406.5 484.5h0M406.5 508.5h0M407.5 473.5h0M407.5 514.5h0M407.5 515.5h0M407.5 519.5h0M408.5 516.5h0M408.5 519.5h0M408.5 525.5h0M408.5 529.5h0M409.5 502.5h0M409.5 524.5h0M409.5 525.5h0M409.5 557.5h0M410.5 479.5h0M410.5 498.5h0M410.5 508.5h0M410.5 516.5h0M411.5 502.5h0M411.5 505.5h0M411.5 518.5h0M412.5 536.5h0M412.5 539.5h0M412.5 544.5h0M412.5 553.5h0M413.5 506.5h0M413.5 509.5h0M413.5 513.5h0M413.5 516.5h0M413.5 520.5h0M414.5 504.5h0M414.5 506.5h0M414.5 534.5h0M414.5 538.5h0M415.5 495.5h0M415.5 506.5h0M415.5 512.5h0M415.5 518.5h0M416.5 484.5h0M416.5 488.5h0M416.5 491.5h0M416.5 516.5h0M417.5 474.5h0M417.5 486.5h0M417.5 493.5h0M417.5 495.5h0M418.5 508.5h0M418.5 509.5h0M418.5 512.5h0M418.5 513.5h0M419.5 471.5h0M419.5 478.5h0M419.5 497.5h0M419.5 509.5h0M420.5 484.5h0M420.5 486.5h0M420.5 496.5h0M420.5 503.5h0M421.5 501.5h0M421.5 503.5h0M421.5 506.5h0M421.5 518.5h0M422.5 492.5h0M422.5 504.5h0M422.5 506.5h0M422.5 514.5h0M423.5 502.5h0M423.5 503.5h0M423.5 515.5h0M423.5 523.5h0M424.5 513.5h0M424.5 517.5h0M424.5 527.5h0M424.5 531.5h0M425.5 503.5h0M425.5 509.5h0M425.5 513.5h0M425.5 543.5h0M426.5 531.5h0M426.5 564.5h0M426.5 567.5h0M427.5 476.5h0M427.5 478.5h0M427.5 512.5h0M427.5 524.5h0M428.5 465.5h0M428.5 476.5h0M428.5 496.5h0M428.5 503.5h0M429.5 512.5h0M429.5 518.5h0M429.5 540.5h0M429.5 543.5h0M430.5 480.5h0M430.5 490.5h0M430.5 491.5h0M430.5 501.5h0M430.5 521.5h0M431.5 484.5h0M431.5 497.5h0M431.5 504.5h0M431.5 515.5h0M432.5 483.5h0M432.5 488.5h0M432.5 494.5h0M432.5 512.5h0M433.5 476.5h0M433.5 484.5h0M433.5 489.5h0M433.5 495.5h0M434.5 488.5h0M434.5 490.5h0M434.5 494.5h0M434.5 496.5h0M435.5 508.5h0M435.5 510.5h0M435.5 522.5h0M435.5 533.5h0M436.5 481.5h0M436.5 482.5h0M436.5 498.5h0M436.5 508.5h0M436.5 513.5h0M437.5 478.5h0M437.5 490.5h0M437.5 512.5h0M437.5 518.5h0M438.5 489.5h0M438.5 504.5h0M438.5 519.5h0M438.5 532.5h0M439.5 482.5h0M439.5 483.5h0M439.5 486.5h0M439.5 497.5h0M440.5 501.5h0M440.5 506.5h0M440.5 510.5h0M440.5 511.5h0M441.5 505.5h0M441.5 511.5h0M441.5 534.5h0M442.5 496.5h0M442.5 499.5h0M442.5 504.5h0M442.5 532.5h0M442.5 533.5h0M443.5 511.5h0M443.5 512.5h0M443.5 513.5h0M443.5 536.5h0M444.5 496.5h0M444.5 524.5h0M444.5 544.5h0M444.5 546.5h0M445.5 497.5h0M445.5 501.5h0M445.5 502.5h0M445.5 512.5h0M446.5 478.5h0M446.5 499.5h0M446.5 501.5h0M446.5 516.5h0M447.5 481.5h0M447.5 504.5h0M447.5 511.5h0M447.5 516.5h0M448.5 489.5h0M448.5 499.5h0M448.5 512.5h0M448.5 516.5h0M448.5 525.5h0M449.5 503.5h0M449.5 524.5h0M449.5 529.5h0M449.5 546.5h0M450.5 478.5h0M450.5 489.5h0M450.5 501.5h0M451.5 502.5h0M451.5 510.5h0M451.5 517.5h0M451.5 518.5h0M452.5 493.5h0M452.5 502.5h0M452.5 515.5h0M452.5 522.5h0M453.5 490.5h0M453.5 508.5h0M453.5 519.5h0M454.5 504.5h0M454.5 521.5h0M454.5 534.5h0M454.5 537.5h0M455.5 510.5h0M455.5 513.5h0M455.5 531.5h0M455.5 544.5h0M456.5 542.5h0M456.5 550.5h0M456.5 556.5h0M456.5 560.5h0M457.5 517.5h0M457.5 539.5h0M457.5 548.5h0M457.5 559.5h0M458.5 515.5h0M458.5 519.5h0M458.5 522.5h0M459.5 503.5h0M459.5 509.5h0M459.5 512.5h0M459.5 520.5h0M459.5 521.5h0M460.5 496.5h0M460.5 500.5h0M460.5 510.5h0M461.5 466.5h0M461.5 482.5h0M461.5 486.5h0M461.5 502.5h0M462.5 482.5h0M462.5 488.5h0M462.5 501.5h0M462.5 503.5h0M463.5 480.5h0M463.5 498.5h0M463.5 504.5h0M463.5 509.5h0M464.5 493.5h0M464.5 511.5h0M464.5 516.5h0M464.5 517.5h0M465.5 475.5h0M465.5 484.5h0M465.5 486.5h0M465.5 500.5h0M465.5 508.5h0M466.5 497.5h0M466.5 499.5h0M466.5 508.5h0M466.5 520.5h0M467.5 519.5h0M467.5 521.5h0M467.5 533.5h0M467.5 555.5h0M468.5 478.5h0M468.5 511.5h0M468.5 513.5h0M468.5 523.5h0M469.5 477.5h0M469.5 503.5h0M469.5 513.5h0M469.5 525.5h0M470.5 492.5h0M470.5 503.5h0M470.5 504.5h0M470.5 529.5h0M470.5 531.5h0M471.5 507.5h0M471.5 509.5h0M471.5 525.5h0M471.5 532.5h0M472.5 494.5h0M472.5 514.5h0M472.5 542.5h0M472.5 548.5h0M473.5 507.5h0M473.5 548.5h0M473.5 556.5h0M473.5 561.5h0M474.5 525.5h0M474.5 529.5h0M474.5 532.5h0M474.5 539.5h0M475.5 507.5h0M475.5 510.5h0M475.5 518.5h0M475.5 533.5h0M476.5 508.5h0M476.5 514.5h0M476.5 526.5h0M476.5 528.5h0M477.5 519.5h0M477.5 520.5h0M477.5 528.5h0M477.5 531.5h0M478.5 481.5h0M478.5 491.5h0M478.5 508.5h0M478.5 511.5h0M479.5 477.5h0M479.5 497.5h0M479.5 499.5h0M479.5 502.5h0M480.5 487.5h0M480.5 498.5h0M480.5 499.5h0M480.5 514.5h0M481.5 470.5h0M481.5 490.5h0M481.5 494.5h0M481.5 515.5h0M482.5 527.5h0M482.5 549.5h0M482.5 553.5h0M482.5 559.5h0M482.5 568.5h0M483.5 499.5h0M483.5 517.5h0M483.5 523.5h0M483.5 525.5h0M484.5 516.5h0M484.5 528.5h0M484.5 543.5h0M484.5 544.5h0M485.5 485.5h0M485.5 502.5h0M485.5 518.5h0M485.5 534.5h0M486.5 481.5h0M486.5 484.5h0M486.5 502.5h0M486.5 503.5h0M487.5 481.5h0M487.5 502.5h0M487.5 504.5h0M487.5 531.5h0M488.5 507.5h0M488.5 524.5h0M488.5 544.5h0M488.5 548.5h0M488.5 551.5h0M489.5 507.5h0M489.5 533.5h0M489.5 540.5h0M489.5 542.5h0M490.5 520.5h0M490.5 530.5h0M490.5 546.5h0M491.5 499.5h0M491.5 517.5h0M491.5 527.5h0M491.5 533.5h0M492.5 490.5h0M492.5 495.5h0M492.5 519.5h0M492.5 524.5h0M493.5 510.5h0M493.5 521.5h0M493.5 530.5h0M493.5 531.5h0M494.5 473.5h0M494.5 488.5h0M494.5 491.5h0M494.5 523.5h0M495.5 471.5h0M495.5 482.5h0M495.5 493.5h0M495.5 494.5h0M496.5 468.5h0M496.5 480.5h0M496.5 481.5h0M496.5 490.5h0M497.5 476.5h0M497.5 486.5h0M497.5 496.5h0M497.5 513.5h0M498.5 473.5h0M498.5 494.5h0M498.5 498.5h0M499.5 503.5h0M499.5 505.5h0M499.5 510.5h0M499.5 524.5h0M499.5 531.5h0M500.5 501.5h0M500.5 515.5h0M500.5 524.5h0M501.5 508.5h0M501.5 520.5h0M501.5 529.5h0M501.5 541.5h0M502.5 533.5h0M502.5 536.5h0M502.5 554.5h0M502.5 556.5h0M503.5 540.5h0M503.5 546.5h0M503.5 555.5h0M503.5 557.5h0M504.5 481.5h0M504.5 515.5h0M504.5 535.5h0M504.5 558.5h0M505.5 513.5h0M505.5 532.5h0M505.5 535.5h0M505.5 541.5h0M505.5 551.5h0M506.5 499.5h0M506.5 510.5h0M506.5 520.5h0M506.5 522.5h0M507.5 476.5h0M507.5 485.5h0M507.5 493.5h0M508.5 471.5h0M508.5 478.5h0M508.5 484.5h0M508.5 508.5h0M509.5 493.5h0M509.5 516.5h0M509.5 531.5h0M509.5 536.5h0M510.5 486.5h0M510.5 501.5h0M510.5 507.5h0M510.5 508.5h0M511.5 482.5h0M511.5 487.5h0M511.5 488.5h0M511.5 497.5h0M511.5 516.5h0M512.5 493.5h0M512.5 500.5h0M512.5 510.5h0M512.5 532.5h0M513.5 523.5h0M513.5 531.5h0M513.5 535.5h0M513.5 561.5h0M514.5 500.5h0M514.5 526.5h0M514.5 530.5h0M514.5 536.5h0M515.5 491.5h0M515.5 496.5h0M515.5 513.5h0M515.5 531.5h0M516.5 484.5h0M516.5 489.5h0M516.5 517.5h0M516.5 520.5h0M516.5 523.5h0M517.5 499.5h0M517.5 523.5h0M517.5 538.5h0M517.5 545.5h0M518.5 497.5h0M518.5 515.5h0M518.5 519.5h0M518.5 548.5h0M519.5 476.5h0M519.5 493.5h0M519.5 507.5h0M519.5 511.5h0M520.5 475.5h0M520.5 494.5h0M520.5 512.5h0M520.5 536.5h0M521.5 492.5h0M521.5 495.5h0M521.5 504.5h0M521.5 515.5h0M522.5 516.5h0M522.5 518.5h0M522.5 525.5h0M522.5 529.5h0M522.5 538.5h0M523.5 508.5h0M523.5 512.5h0M523.5 520.5h0M523.5 537.5h0M524.5 511.5h0M524.5 523.5h0M524.5 533.5h0M524.5 553.5h0M525.5 467.5h0M525.5 483.5h0M525.5 505.5h0M525.5 545.5h0M526.5 511.5h0M526.5 541.5h0M526.5 545.5h0M526.5 566.5h0M527.5 504.5h0M527.5 507.5h0M527.5 513.5h0M527.5 514.5h0M528.5 512.5h0M528.5 519.5h0M528.5 530.5h0M528.5 539.5h0M529.5 523.5h0M529.5 525.5h0M529.5 539.5h0M529.5 546.5h0M530.5 516.5h0M530.5 517.5h0M530.5 522.5h0M530.5 529.5h0M531.5 507.5h0M531.5 510.5h0M531.5 531.5h0M531.5 546.5h0M532.5 488.5h0M532.5 492.5h0M532.5 525.5h0M532.5 545.5h0M533.5 469.5h0M533.5 478.5h0M533.5 489.5h0M533.5 496.5h0M533.5 501.5h0M534.5 505.5h0M534.5 512.5h0M534.5 517.5h0M534.5 520.5h0M535.5 514.5h0M535.5 517.5h0M535.5 518.5h0M535.5 524.5h0M536.5 494.5h0M536.5 499.5h0M536.5 502.5h0M536.5 503.5h0M537.5 495.5h0M537.5 496.5h0M537.5 504.5h0M537.5 510.5h0M538.5 488.5h0M538.5 489.5h0M538.5 504.5h0M538.5 507.5h0M539.5 498.5h0M539.5 515.5h0M539.5 517.5h0M539.5 527.5h0M540.5 490.5h0M540.5 511.5h0M540.5 516.5h0M540.5 517.5h0M541.5 494.5h0M541.5 519.5h0M541.5 525.5h0M541.5 529.5h0M542.5 493.5h0M542.5 510.5h0M542.5 512.5h0M542.5 516.5h0M543.5 498.5h0M543.5 526.5h0M543.5 529.5h0M543.5 540.5h0M544.5 518.5h0M544.5 533.5h0M544.5 535.5h0M544.5 548.5h0M545.5 516.5h0M545.5 517.5h0M545.5 542.5h0M545.5 543.5h0M545.5 552.5h0M546.5 524.5h0M546.5 529.5h0M546.5 540.5h0M546.5 547.5h0M547.5 522.5h0M547.5 526.5h0M547.5 533.5h0M547.5 536.5h0M548.5 512.5h0M548.5 522.5h0M548.5 528.5h0M548.5 534.5h0M549.5 502.5h0M549.5 513.5h0M549.5 517.5h0M549.5 522.5h0M550.5 489.5h0M550.5 495.5h0M550.5 499.5h0M550.5 505.5h0M551.5 506.5h0M551.5 509.5h0M551.5 513.5h0M551.5 516.5h0M551.5 517.5h0M552.5 515.5h0M552.5 521.5h0M552.5 528.5h0M552.5 537.5h0M553.5 524.5h0M553.5 526.5h0M553.5 529.5h0M553.5 534.5h0M554.5 505.5h0M554.5 509.5h0M554.5 511.5h0M554.5 518.5h0M555.5 491.5h0M555.5 493.5h0M555.5 517.5h0M555.5 524.5h0M556.5 525.5h0M556.5 528.5h0M556.5 530.5h0M556.5 534.5h0M557.5 516.5h0M557.5 534.5h0M557.5 536.5h0M557.5 542.5h0M558.5 506.5h0M558.5 521.5h0M558.5 522.5h0M558.5 530.5h0M559.5 505.5h0M559.5 517.5h0M559.5 518.5h0M560.5 467.5h0M560.5 502.5h0M560.5 507.5h0M561.5 508.5h0M561.5 518.5h0M561.5 525.5h0M561.5 567.5h0M562.5 518.5h0M562.5 527.5h0M562.5 533.5h0M562.5 543.5h0M563.5 513.5h0M563.5 521.5h0M563.5 522.5h0M563.5 526.5h0M564.5 507.5h0M564.5 517.5h0M564.5 520.5h0M564.5 524.5h0M565.5 510.5h0M565.5 532.5h0M565.5 542.5h0M565.5 545.5h0M566.5 480.5h0M566.5 497.5h0M566.5 523.5h0M566.5 541.5h0M567.5 466.5h0M567.5 492.5h0M567.5 500.5h0M567.5 508.5h0M568.5 506.5h0M568.5 509.5h0M568.5 510.5h0M568.5 516.5h0M568.5 518.5h0M569.5 518.5h0M569.5 525.5h0M569.5 531.5h0M569.5 535.5h0M570.5 502.5h0M570.5 531.5h0M570.5 532.5h0M570.5 533.5h0M571.5 524.5h0M571.5 532.5h0M571.5 540.5h0M571.5 541.5h0M572.5 515.5h0M572.5 523.5h0M572.5 527.5h0M572.5 529.5h0M573.5 488.5h0M573.5 493.5h0M573.5 498.5h0M573.5 504.5h0M574.5 477.5h0M574.5 479.5h0M574.5 492.5h0M574.5 494.5h0M574.5 504.5h0M575.5 497.5h0M575.5 502.5h0M575.5 507.5h0M575.5 511.5h0M576.5 504.5h0M576.5 506.5h0M576.5 539.5h0M576.5 544.5h0M577.5 512.5h0M577.5 537.5h0M577.5 552.5h0M577.5 553.5h0M578.5 498.5h0M578.5 499.5h0M578.5 510.5h0M578.5 514.5h0M579.5 490.5h0M579.5 494.5h0M579.5 510.5h0M579.5 518.5h0M579.5 530.5h0M580.5 533.5h0M580.5 539.5h0M580.5 546.5h0M580.5 555.5h0M581.5 509.5h0M581.5 517.5h0M581.5 523.5h0M581.5 529.5h0M582.5 506.5h0M582.5 513.5h0M582.5 515.5h0M582.5 526.5h0M583.5 508.5h0M583.5 510.5h0M583.5 514.5h0M584.5 521.5h0M584.5 528.5h0M584.5 529.5h0M584.5 532.5h0M585.5 523.5h0M585.5 527.5h0M585.5 531.5h0M585.5 543.5h0M586.5 527.5h0M586.5 529.5h0M586.5 538.5h0M586.5 541.5h0M587.5 477.5h0M587.5 493.5h0M587.5 525.5h0M587.5 533.5h0M588.5 476.5h0M588.5 521.5h0M588.5 522.5h0M588.5 525.5h0M589.5 493.5h0M589.5 499.5h0M589.5 520.5h0M589.5 531.5h0M590.5 514.5h0M590.5 515.5h0M590.5 520.5h0M590.5 525.5h0M591.5 501.5h0M591.5 512.5h0M591.5 515.5h0M592.5 509.5h0M592.5 511.5h0M592.5 514.5h0M592.5 529.5h0M593.5 524.5h0M593.5 532.5h0M593.5 537.5h0M594.5 531.5h0M594.5 532.5h0M594.5 538.5h0M595.5 531.5h0M595.5 532.5h0M595.5 538.5h0M595.5 541.5h0M596.5 524.5h0M596.5 539.5h0M596.5 542.5h0M596.5 544.5h0M596.5 549.5h0M597.5 506.5h0M597.5 507.5h0M597.5 534.5h0M597.5 549.5h0M598.5 498.5h0M598.5 501.5h0M598.5 502.5h0M598.5 520.5h0M599.5 518.5h0M599.5 533.5h0M599.5 565.5h0M599.5 568.5h0M600.5 566.5h0M600.5 567.5h0M600.5 568.5h0M600.5 569.5h0M601.5 498.5h0M601.5 506.5h0M601.5 518.5h0M601.5 538.5h0M602.5 499.5h0M602.5 505.5h0M602.5 510.5h0M602.5 511.5h0M602.5 517.5h0M603.5 514.5h0M603.5 522.5h0M603.5 523.5h0M603.5 528.5h0M604.5 479.5h0M604.5 494.5h0M604.5 500.5h0M604.5 514.5h0M605.5 494.5h0M605.5 511.5h0M605.5 526.5h0M605.5 537.5h0M606.5 481.5h0M606.5 507.5h0M606.5 525.5h0M606.5 556.5h0M607.5 537.5h0M607.5 545.5h0M607.5 552.5h0M607.5 561.5h0M608.5 498.5h0M608.5 499.5h0M608.5 523.5h0M608.5 525.5h0M608.5 539.5h0M609.5 503.5h0M609.5 512.5h0M609.5 521.5h0M609.5 525.5h0M610.5 506.5h0M610.5 525.5h0M610.5 536.5h0M610.5 545.5h0M611.5 514.5h0M611.5 517.5h0M611.5 530.5h0M611.5 545.5h0M612.5 502.5h0M612.5 513.5h0M612.5 515.5h0M612.5 536.5h0M613.5 483.5h0M613.5 486.5h0M613.5 506.5h0M613.5 513.5h0M614.5 479.5h0M614.5 496.5h0M614.5 502.5h0M614.5 510.5h0M614.5 521.5h0M615.5 508.5h0M615.5 533.5h0M615.5 543.5h0M615.5 553.5h0M616.5 498.5h0M616.5 500.5h0M616.5 511.5h0M616.5 533.5h0M617.5 470.5h0M617.5 472.5h0M617.5 476.5h0M617.5 521.5h0M618.5 468.5h0M618.5 483.5h0M618.5 488.5h0M618.5 510.5h0M619.5 497.5h0M619.5 499.5h0M619.5 500.5h0M619.5 511.5h0M619.5 514.5h0M620.5 523.5h0M620.5 531.5h0M620.5 537.5h0M620.5 543.5h0M621.5 509.5h0M621.5 510.5h0M621.5 515.5h0M621.5 516.5h0M622.5 515.5h0M622.5 520.5h0M622.5 524.5h0M623.5 523.5h0M623.5 529.5h0M623.5 534.5h0M623.5 538.5h0M624.5 529.5h0M624.5 537.5h0M624.5 542.5h0M624.5 553.5h0M625.5 523.5h0M625.5 524.5h0M625.5 526.5h0M625.5 533.5h0M625.5 536.5h0M626.5 518.5h0M626.5 540.5h0M626.5 546.5h0M626.5 565.5h0M627.5 534.5h0M627.5 553.5h0M627.5 566.5h0M627.5 569.5h0M628.5 531.5h0M628.5 547.5h0M628.5 548.5h0M628.5 551.5h0M629.5 500.5h0M629.5 520.5h0M629.5 521.5h0M629.5 525.5h0M630.5 500.5h0M630.5 503.5h0M630.5 505.5h0M630.5 514.5h0M631.5 490.5h0M631.5 506.5h0M631.5 509.5h0M631.5 521.5h0M631.5 522.5h0M632.5 558.5h0M632.5 563.5h0M632.5 566.5h0M632.5 569.5h0M633.5 526.5h0M633.5 539.5h0M633.5 547.5h0M633.5 549.5h0M634.5 512.5h0M634.5 518.5h0M634.5 519.5h0M634.5 529.5h0M635.5 491.5h0M635.5 516.5h0M635.5 523.5h0M635.5 527.5h0M636.5 465.5h0M636.5 468.5h0M636.5 477.5h0M636.5 515.5h0M637.5 498.5h0M637.5 500.5h0M637.5 517.5h0M637.5 519.5h0M638.5 499.5h0M638.5 527.5h0M638.5 535.5h0M638.5 543.5h0M639.5 493.5h0M639.5 506.5h0M639.5 509.5h0M639.5 516.5h0M640.5 519.5h0M640.5 522.5h0M640.5 527.5h0M640.5 528.5h0M641.5 497.5h0M641.5 518.5h0M641.5 523.5h0M642.5 528.5h0M642.5 532.5h0M642.5 534.5h0M642.5 542.5h0M642.5 543.5h0M643.5 489.5h0M643.5 506.5h0M643.5 519.5h0M643.5 523.5h0M644.5 505.5h0M644.5 508.5h0M644.5 513.5h0M644.5 528.5h0M645.5 464.5h0M645.5 468.5h0M645.5 492.5h0M645.5 498.5h0M646.5 505.5h0M646.5 509.5h0M646.5 545.5h0M646.5 569.5h0M647.5 498.5h0M647.5 506.5h0M647.5 508.5h0M647.5 537.5h0M648.5 475.5h0M648.5 478.5h0M648.5 481.5h0M648.5 482.5h0M649.5 498.5h0M649.5 501.5h0M649.5 541.5h0M649.5 565.5h0M650.5 510.5h0M650.5 540.5h0M650.5 543.5h0M650.5 559.5h0M651.5 501.5h0M651.5 511.5h0M651.5 540.5h0M651.5 543.5h0M652.5 548.5h0M652.5 558.5h0M652.5 560.5h0M652.5 562.5h0M653.5 506.5h0M653.5 521.5h0M653.5 531.5h0M653.5 535.5h0M654.5 480.5h0M654.5 522.5h0M654.5 524.5h0M654.5 532.5h0M654.5 537.5h0M655.5 495.5h0M655.5 519.5h0M655.5 522.5h0M655.5 539.5h0M656.5 477.5h0M656.5 488.5h0M656.5 496.5h0M656.5 501.5h0M657.5 506.5h0M657.5 508.5h0M657.5 510.5h0M658.5 515.5h0M658.5 526.5h0M658.5 542.5h0M658.5 544.5h0M659.5 538.5h0M659.5 550.5h0M659.5 559.5h0M659.5 561.5h0M659.5 562.5h0M660.5 515.5h0M660.5 531.5h0M660.5 565.5h0M660.5 566.5h0M661.5 508.5h0M661.5 516.5h0M661.5 523.5h0M661.5 525.5h0M662.5 470.5h0M662.5 491.5h0M662.5 497.5h0M662.5 501.5h0M663.5 486.5h0M663.5 492.5h0M663.5 526.5h0M663.5 542.5h0M664.5 475.5h0M664.5 483.5h0M664.5 488.5h0M664.5 509.5h0M665.5 480.5h0M665.5 512.5h0M665.5 517.5h0M665.5 533.5h0M665.5 541.5h0M666.5 528.5h0M666.5 531.5h0M666.5 532.5h0M666.5 555.5h0M667.5 489.5h0M667.5 493.5h0M667.5 503.5h0M667.5 509.5h0M668.5 471.5h0M668.5 518.5h0M668.5 521.5h0M668.5 524.5h0M669.5 513.5h0M669.5 524.5h0M669.5 534.5h0M669.5 554.5h0M670.5 517.5h0M670.5 521.5h0M670.5 532.5h0M671.5 477.5h0M671.5 481.5h0M671.5 487.5h0M671.5 497.5h0M671.5 511.5h0M672.5 516.5h0M672.5 524.5h0M672.5 528.5h0M672.5 534.5h0M673.5 498.5h0M673.5 507.5h0M673.5 511.5h0M673.5 515.5h0M674.5 490.5h0M674.5 517.5h0M674.5 524.5h0M674.5 534.5h0M675.5 476.5h0M675.5 508.5h0M675.5 527.5h0M675.5 532.5h0M676.5 472.5h0M676.5 479.5h0M676.5 506.5h0M676.5 511.5h0M677.5 466.5h0M677.5 469.5h0M677.5 487.5h0M677.5 502.5h0M678.5 464.5h0M678.5 469.5h0M678.5 475.5h0M678.5 479.5h0M679.5 471.5h0M679.5 492.5h0M679.5 495.5h0M679.5 513.5h0M680.5 509.5h0M680.5 514.5h0M680.5 522.5h0M680.5 530.5h0M681.5 520.5h0M681.5 527.5h0M681.5 534.5h0M681.5 544.5h0M682.5 474.5h0M682.5 503.5h0M682.5 507.5h0M682.5 510.5h0M682.5 513.5h0M683.5 509.5h0M683.5 523.5h0M683.5 528.5h0M683.5 538.5h0M684.5 495.5h0M684.5 500.5h0M684.5 517.5h0M684.5 532.5h0M685.5 506.5h0M685.5 511.5h0M685.5 515.5h0M685.5 518.5h0M686.5 514.5h0M686.5 520.5h0M686.5 527.5h0M686.5 532.5h0M687.5 507.5h0M687.5 508.5h0M687.5 528.5h0M687.5 534.5h0M688.5 510.5h0M688.5 524.5h0M688.5 532.5h0M688.5 534.5h0M689.5 505.5h0M689.5 519.5h0M689.5 524.5h0M689.5 548.5h0M690.5 497.5h0M690.5 499.5h0M690.5 509.5h0M690.5 543.5h0M691.5 506.5h0M691.5 517.5h0M691.5 520.5h0M691.5 555.5h0M692.5 519.5h0M692.5 524.5h0M692.5 540.5h0M692.5 556.5h0M693.5 506.5h0M693.5 518.5h0M693.5 524.5h0M693.5 535.5h0M694.5 521.5h0M694.5 524.5h0M694.5 528.5h0M694.5 531.5h0M695.5 521.5h0M695.5 536.5h0M695.5 539.5h0M695.5 545.5h0M696.5 514.5h0M696.5 525.5h0M696.5 544.5h0M696.5 563.5h0M697.5 515.5h0M697.5 526.5h0M697.5 530.5h0M698.5 510.5h0M698.5 524.5h0M698.5 531.5h0M698.5 540.5h0M699.5 522.5h0M699.5 526.5h0M699.5 533.5h0M699.5 537.5h0M700.5 516.5h0M700.5 518.5h0M700.5 520.5h0M700.5 528.5h0M701.5 482.5h0M701.5 484.5h0M701.5 497.5h0M701.5 501.5h0M702.5 486.5h0M702.5 510.5h0M702.5 517.5h0M703.5 484.5h0M703.5 501.5h0M703.5 517.5h0M703.5 523.5h0M704.5 514.5h0M704.5 521.5h0M704.5 522.5h0M705.5 508.5h0M705.5 515.5h0M705.5 525.5h0M705.5 550.5h0M705.5 552.5h0M706.5 514.5h0M706.5 519.5h0M706.5 536.5h0M706.5 539.5h0M707.5 500.5h0M707.5 511.5h0M707.5 513.5h0M707.5 514.5h0M708.5 484.5h0M708.5 498.5h0M708.5 501.5h0M708.5 503.5h0M709.5 480.5h0M709.5 489.5h0M709.5 492.5h0M709.5 507.5h0M710.5 471.5h0M710.5 476.5h0M710.5 502.5h0M710.5 503.5h0M711.5 474.5h0M711.5 499.5h0M711.5 500.5h0M711.5 507.5h0M711.5 509.5h0M712.5 466.5h0M712.5 467.5h0M712.5 500.5h0M712.5 533.5h0M713.5 505.5h0M713.5 518.5h0M713.5 523.5h0M713.5 558.5h0M714.5 502.5h0M714.5 507.5h0M714.5 521.5h0M714.5 524.5h0M715.5 483.5h0M715.5 494.5h0M715.5 509.5h0M715.5 521.5h0M716.5 470.5h0M716.5 472.5h0M716.5 491.5h0M716.5 495.5h0M717.5 476.5h0M717.5 484.5h0M717.5 489.5h0M717.5 493.5h0M717.5 517.5h0M718.5 520.5h0M718.5 526.5h0M718.5 531.5h0M718.5 541.5h0M719.5 510.5h0M719.5 511.5h0M719.5 514.5h0M719.5 515.5h0M720.5 512.5h0M720.5 515.5h0M720.5 517.5h0M721.5 489.5h0M721.5 500.5h0M721.5 513.5h0M721.5 518.5h0M722.5 481.5h0M722.5 484.5h0M722.5 485.5h0M722.5 496.5h0M722.5 505.5h0M723.5 472.5h0M723.5 483.5h0M723.5 488.5h0M723.5 502.5h0M724.5 473.5h0M724.5 476.5h0M724.5 502.5h0M724.5 512.5h0M725.5 481.5h0M725.5 496.5h0M725.5 498.5h0M725.5 524.5h0M726.5 464.5h0M726.5 492.5h0M726.5 498.5h0M726.5 525.5h0M727.5 521.5h0M727.5 524.5h0M727.5 529.5h0M727.5 543.5h0M728.5 492.5h0M728.5 513.5h0M728.5 519.5h0M728.5 539.5h0M728.5 541.5h0M729.5 496.5h0M729.5 506.5h0M729.5 510.5h0M729.5 522.5h0M730.5 496.5h0M730.5 509.5h0M730.5 516.5h0M731.5 502.5h0M731.5 508.5h0M731.5 515.5h0M731.5 530.5h0M732.5 513.5h0M732.5 518.5h0M732.5 522.5h0M732.5 536.5h0M733.5 502.5h0M733.5 522.5h0M733.5 533.5h0M733.5 540.5h0M734.5 489.5h0M734.5 515.5h0M734.5 518.5h0M734.5 530.5h0M734.5 534.5h0M735.5 507.5h0M735.5 508.5h0M735.5 514.5h0M735.5 518.5h0M736.5 510.5h0M736.5 512.5h0M736.5 517.5h0M736.5 528.5h0M737.5 528.5h0M737.5 533.5h0M737.5 541.5h0M737.5 555.5h0M738.5 469.5h0M738.5 480.5h0M738.5 510.5h0M739.5 474.5h0M739.5 511.5h0M739.5 517.5h0M739.5 538.5h0M740.5 476.5h0M740.5 510.5h0M740.5 548.5h0M741.5 484.5h0M741.5 505.5h0M741.5 558.5h0M741.5 569.5h0M742.5 551.5h0M742.5 566.5h0M742.5 569.5h0M743.5 546.5h0M743.5 548.5h0M743.5 556.5h0M743.5 557.5h0M744.5 512.5h0M744.5 544.5h0M744.5 548.5h0M744.5 552.5h0M745.5 465.5h0M745.5 467.5h0M745.5 484.5h0M745.5 499.5h0M745.5 509.5h0M746.5 464.5h0M746.5 467.5h0M746.5 468.5h0M746.5 478.5h0M747.5 503.5h0M747.5 508.5h0M747.5 513.5h0M747.5 518.5h0M748.5 476.5h0M748.5 488.5h0M748.5 489.5h0M748.5 503.5h0M749.5 465.5h0M749.5 466.5h0M749.5 490.5h0M749.5 491.5h0M750.5 487.5h0M750.5 493.5h0M750.5 504.5h0M750.5 518.5h0M751.5 487.5h0M751.5 494.5h0M751.5 518.5h0M751.5 525.5h0M752.5 495.5h0M752.5 499.5h0M752.5 500.5h0M753.5 504.5h0M753.5 515.5h0M753.5 553.5h0M754.5 562.5h0M754.5 564.5h0M754.5 565.5h0M754.5 566.5h0M755.5 505.5h0M755.5 522.5h0M755.5 538.5h0M755.5 558.5h0M756.5 488.5h0M756.5 515.5h0M756.5 533.5h0M756.5 555.5h0M757.5 468.5h0M757.5 498.5h0M757.5 507.5h0M757.5 517.5h0M757.5 536.5h0M758.5 498.5h0M758.5 509.5h0M758.5 519.5h0M758.5 552.5h0M759.5 520.5h0M759.5 524.5h0M759.5 534.5h0M759.5 551.5h0M760.5 512.5h0M760.5 551.5h0M760.5 554.5h0M760.5 557.5h0M761.5 507.5h0M761.5 515.5h0M761.5 531.5h0M761.5 550.5h0M762.5 515.5h0M762.5 519.5h0M762.5 523.5h0M762.5 533.5h0M762.5 541.5h0M763.5 523.5h0M763.5 531.5h0M763.5 552.5h0M763.5 566.5h0M764.5 518.5h0M764.5 519.5h0M764.5 531.5h0M764.5 546.5h0M765.5 512.5h0M765.5 530.5h0M765.5 533.5h0M765.5 543.5h0M766.5 486.5h0M766.5 519.5h0M766.5 525.5h0M766.5 526.5h0M767.5 494.5h0M767.5 528.5h0M767.5 529.5h0M767.5 547.5h0M768.5 517.5h0M768.5 527.5h0M768.5 530.5h0M768.5 535.5h0M768.5 540.5h0M769.5 464.5h0M769.5 473.5h0M769.5 502.5h0M769.5 506.5h0M770.5 504.5h0M770.5 554.5h0M770.5 556.5h0M770.5 564.5h0M771.5 516.5h0M771.5 528.5h0M771.5 538.5h0M771.5 551.5h0M772.5 497.5h0M772.5 499.5h0M772.5 529.5h0M772.5 534.5h0M773.5 504.5h0M773.5 509.5h0M773.5 525.5h0M773.5 537.5h0M774.5 524.5h0M774.5 543.5h0M774.5 546.5h0M774.5 548.5h0M774.5 567.5h0M775.5 533.5h0M775.5 555.5h0M775.5 558.5h0M776.5 525.5h0M776.5 528.5h0M776.5 531.5h0M776.5 567.5h0M777.5 497.5h0M777.5 501.5h0M777.5 507.5h0M777.5 510.5h0M778.5 507.5h0M778.5 513.5h0M778.5 515.5h0M778.5 517.5h0M779.5 512.5h0M779.5 528.5h0M779.5 541.5h0M779.5 542.5h0M780.5 516.5h0M780.5 521.5h0M780.5 537.5h0M780.5 543.5h0M780.5 544.5h0M781.5 510.5h0M781.5 513.5h0M781.5 527.5h0M781.5 528.5h0M782.5 502.5h0M782.5 506.5h0M782.5 531.5h0M783.5 488.5h0M783.5 523.5h0M783.5 528.5h0M783.5 535.5h0M784.5 530.5h0M784.5 545.5h0M784.5 548.5h0M784.5 556.5h0M785.5 508.5h0M785.5 517.5h0M785.5 532.5h0M785.5 539.5h0M785.5 542.5h0M786.5 499.5h0M786.5 517.5h0M786.5 520.5h0M787.5 510.5h0M787.5 521.5h0M787.5 535.5h0M787.5 545.5h0M788.5 498.5h0M788.5 544.5h0M788.5 564.5h0M789.5 486.5h0M789.5 521.5h0M789.5 523.5h0M790.5 510.5h0M790.5 523.5h0M790.5 535.5h0M790.5 550.5h0M791.5 466.5h0M791.5 467.5h0M791.5 474.5h0M791.5 489.5h0M791.5 495.5h0M792.5 467.5h0M792.5 468.5h0M792.5 487.5h0M793.5 482.5h0M793.5 502.5h0M793.5 506.5h0M793.5 518.5h0M794.5 496.5h0M794.5 498.5h0M794.5 502.5h0M794.5 513.5h0M795.5 507.5h0M795.5 509.5h0M795.5 510.5h0M795.5 513.5h0M796.5 499.5h0M796.5 505.5h0M796.5 510.5h0M796.5 512.5h0M797.5 507.5h0M797.5 509.5h0M797.5 513.5h0M797.5 519.5h0M797.5 525.5h0M798.5 500.5h0M798.5 514.5h0M798.5 516.5h0M798.5 522.5h0M799.5 466.5h0M799.5 481.5h0M799.5 489.5h0M799.5 523.5h0M800.5 465.5h0M800.5 466.5h0M800.5 477.5h0M800.5 487.5h0M801.5 517.5h0M801.5 518.5h0M801.5 521.5h0M801.5 525.5h0M802.5 521.5h0M802.5 531.5h0M802.5 533.5h0M802.5 537.5h0M803.5 496.5h0M803.5 520.5h0M803.5 526.5h0M803.5 535.5h0M803.5 546.5h0M804.5 516.5h0M804.5 517.5h0M804.5 539.5h0M804.5 562.5h0M805.5 520.5h0M805.5 541.5h0M805.5 552.5h0M805.5 564.5h0M806.5 480.5h0M806.5 505.5h0M806.5 513.5h0M806.5 519.5h0M807.5 498.5h0M807.5 505.5h0M807.5 521.5h0M807.5 525.5h0M808.5 492.5h0M808.5 500.5h0M808.5 502.5h0M808.5 514.5h0M808.5 521.5h0M809.5 503.5h0M809.5 516.5h0M809.5 520.5h0M809.5 528.5h0M810.5 518.5h0M810.5 524.5h0M810.5 526.5h0M810.5 531.5h0M811.5 525.5h0M811.5 526.5h0M811.5 538.5h0M811.5 549.5h0M812.5 524.5h0M812.5 534.5h0M812.5 535.5h0M812.5 542.5h0M813.5 518.5h0M813.5 529.5h0M813.5 532.5h0M813.5 543.5h0M814.5 503.5h0M814.5 509.5h0M814.5 522.5h0M814.5 540.5h0M815.5 498.5h0M815.5 505.5h0M815.5 508.5h0M816.5 498.5h0M816.5 507.5h0M816.5 509.5h0M816.5 512.5h0M817.5 495.5h0M817.5 503.5h0M817.5 505.5h0M817.5 507.5h0M818.5 472.5h0M818.5 473.5h0M818.5 474.5h0M819.5 465.5h0M819.5 469.5h0M819.5 480.5h0M819.5 483.5h0M820.5 488.5h0M820.5 513.5h0M820.5 529.5h0M820.5 534.5h0M821.5 528.5h0M821.5 533.5h0M821.5 536.5h0M821.5 538.5h0M822.5 526.5h0M822.5 530.5h0M823.5 520.5h0M823.5 540.5h0M823.5 542.5h0M823.5 565.5h0M824.5 516.5h0M824.5 522.5h0M824.5 528.5h0M824.5 532.5h0M825.5 515.5h0M825.5 518.5h0M825.5 526.5h0M825.5 535.5h0M825.5 547.5h0M826.5 507.5h0M826.5 511.5h0M826.5 520.5h0M826.5 530.5h0M827.5 526.5h0M827.5 529.5h0M827.5 530.5h0M827.5 562.5h0M828.5 488.5h0M828.5 497.5h0M828.5 523.5h0M828.5 538.5h0M829.5 506.5h0M829.5 518.5h0M829.5 519.5h0M829.5 547.5h0M830.5 502.5h0M830.5 524.5h0M830.5 528.5h0M830.5 531.5h0M831.5 504.5h0M831.5 505.5h0M831.5 516.5h0M831.5 522.5h0M831.5 532.5h0M832.5 514.5h0M832.5 523.5h0M832.5 527.5h0M832.5 540.5h0M833.5 518.5h0M833.5 531.5h0M833.5 532.5h0M833.5 538.5h0M834.5 526.5h0M834.5 539.5h0M834.5 543.5h0M834.5 544.5h0M835.5 522.5h0M835.5 541.5h0M835.5 548.5h0M835.5 550.5h0M836.5 530.5h0M836.5 539.5h0M836.5 541.5h0M836.5 547.5h0M837.5 504.5h0M837.5 505.5h0M837.5 522.5h0M837.5 525.5h0M837.5 545.5h0M838.5 524.5h0M838.5 526.5h0M838.5 528.5h0M838.5 537.5h0M839.5 530.5h0M839.5 533.5h0M839.5 536.5h0M839.5 538.5h0M840.5 496.5h0M840.5 509.5h0M840.5 542.5h0M840.5 551.5h0M841.5 508.5h0M841.5 512.5h0M841.5 516.5h0M841.5 525.5h0M842.5 509.5h0M842.5 513.5h0M842.5 514.5h0M842.5 533.5h0M843.5 500.5h0M843.5 502.5h0M843.5 505.5h0M843.5 509.5h0M843.5 522.5h0M844.5 509.5h0M844.5 513.5h0M844.5 517.5h0M844.5 530.5h0M845.5 505.5h0M845.5 506.5h0M845.5 512.5h0M845.5 513.5h0M846.5 503.5h0M846.5 510.5h0M846.5 521.5h0M846.5 536.5h0M847.5 506.5h0M847.5 514.5h0M847.5 523.5h0M847.5 540.5h0M848.5 504.5h0M848.5 510.5h0M848.5 521.5h0M848.5 524.5h0M849.5 494.5h0M849.5 507.5h0M849.5 512.5h0M849.5 527.5h0M850.5 501.5h0M850.5 505.5h0M850.5 510.5h0M850.5 516.5h0M851.5 514.5h0M851.5 519.5h0M851.5 520.5h0M852.5 515.5h0M852.5 520.5h0M852.5 524.5h0M852.5 531.5h0M853.5 504.5h0M853.5 509.5h0M853.5 523.5h0M854.5 503.5h0M854.5 514.5h0M854.5 516.5h0M854.5 519.5h0M854.5 524.5h0M855.5 512.5h0M855.5 513.5h0M855.5 525.5h0M855.5 541.5h0M856.5 514.5h0M856.5 526.5h0M856.5 528.5h0M856.5 539.5h0M857.5 519.5h0M857.5 526.5h0M857.5 527.5h0M857.5 557.5h0M858.5 504.5h0M858.5 519.5h0M858.5 523.5h0M858.5 525.5h0M859.5 489.5h0M859.5 504.5h0M859.5 511.5h0M859.5 512.5h0M860.5 494.5h0M860.5 497.5h0M860.5 506.5h0M860.5 512.5h0M860.5 520.5h0M861.5 494.5h0M861.5 516.5h0M861.5 523.5h0M861.5 529.5h0M862.5 496.5h0M862.5 513.5h0M862.5 514.5h0M862.5 532.5h0M863.5 497.5h0M863.5 512.5h0M863.5 517.5h0M863.5 527.5h0M864.5 511.5h0M864.5 514.5h0M864.5 519.5h0M864.5 522.5h0M865.5 514.5h0M865.5 546.5h0M865.5 554.5h0M865.5 562.5h0M866.5 528.5h0M866.5 539.5h0M866.5 542.5h0M866.5 551.5h0M866.5 552.5h0M867.5 518.5h0M867.5 519.5h0M867.5 529.5h0M867.5 540.5h0M868.5 493.5h0M868.5 512.5h0M868.5 518.5h0M868.5 528.5h0M869.5 495.5h0M869.5 497.5h0M869.5 505.5h0M869.5 516.5h0M870.5 509.5h0M870.5 513.5h0M870.5 533.5h0M871.5 521.5h0M871.5 529.5h0M871.5 533.5h0M871.5 535.5h0M871.5 550.5h0M872.5 521.5h0M872.5 526.5h0M872.5 545.5h0M872.5 564.5h0M873.5 498.5h0M873.5 500.5h0M873.5 525.5h0M873.5 535.5h0M874.5 465.5h0M874.5 466.5h0M874.5 479.5h0M874.5 484.5h0M875.5 466.5h0M875.5 470.5h0M875.5 482.5h0M876.5 504.5h0M876.5 508.5h0M876.5 528.5h0M876.5 533.5h0M877.5 487.5h0M877.5 499.5h0M877.5 511.5h0M877.5 534.5h0M877.5 537.5h0M878.5 489.5h0M878.5 495.5h0M878.5 502.5h0M878.5 506.5h0M879.5 493.5h0M879.5 498.5h0M879.5 503.5h0M880.5 502.5h0M880.5 505.5h0M880.5 506.5h0M880.5 518.5h0M881.5 487.5h0M881.5 490.5h0M881.5 504.5h0M881.5 506.5h0M882.5 470.5h0M882.5 497.5h0M882.5 498.5h0M882.5 532.5h0M883.5 481.5h0M883.5 492.5h0M883.5 502.5h0M883.5 514.5h0M883.5 524.5h0M884.5 523.5h0M884.5 524.5h0M884.5 526.5h0M885.5 511.5h0M885.5 519.5h0M885.5 532.5h0M885.5 536.5h0M886.5 515.5h0M886.5 516.5h0M886.5 518.5h0M886.5 536.5h0M887.5 480.5h0M887.5 504.5h0M887.5 508.5h0M888.5 473.5h0M888.5 482.5h0M888.5 488.5h0M888.5 498.5h0M888.5 510.5h0M889.5 474.5h0M889.5 488.5h0M889.5 492.5h0M889.5 523.5h0M890.5 476.5h0M890.5 481.5h0M890.5 484.5h0M890.5 501.5h0M891.5 483.5h0M891.5 492.5h0M891.5 509.5h0M891.5 524.5h0M892.5 490.5h0M892.5 498.5h0M892.5 506.5h0M892.5 511.5h0M893.5 517.5h0M893.5 529.5h0M893.5 535.5h0M893.5 539.5h0M894.5 523.5h0M894.5 529.5h0M894.5 533.5h0M894.5 534.5h0M895.5 512.5h0M895.5 524.5h0M895.5 529.5h0M895.5 534.5h0M896.5 513.5h0M896.5 526.5h0M896.5 533.5h0M896.5 538.5h0M897.5 513.5h0M897.5 518.5h0M897.5 519.5h0M897.5 528.5h0M898.5 536.5h0M898.5 546.5h0M898.5 553.5h0M899.5 517.5h0M899.5 525.5h0M899.5 539.5h0M899.5 561.5h0M900.5 530.5h0M900.5 537.5h0M900.5 542.5h0M900.5 556.5h0M900.5 557.5h0M901.5 495.5h0M901.5 512.5h0M901.5 520.5h0M901.5 534.5h0M902.5 521.5h0M902.5 527.5h0M902.5 542.5h0M903.5 505.5h0M903.5 507.5h0M903.5 518.5h0M903.5 544.5h0M904.5 508.5h0M904.5 513.5h0M904.5 520.5h0M904.5 545.5h0M905.5 508.5h0M905.5 516.5h0M905.5 519.5h0M905.5 528.5h0M906.5 483.5h0M906.5 516.5h0M906.5 524.5h0M906.5 541.5h0M906.5 544.5h0M907.5 481.5h0M907.5 483.5h0M907.5 488.5h0M907.5 507.5h0M908.5 482.5h0M908.5 497.5h0M908.5 505.5h0M908.5 510.5h0M909.5 471.5h0M909.5 485.5h0M909.5 486.5h0M909.5 508.5h0M910.5 472.5h0M910.5 486.5h0M910.5 504.5h0M910.5 531.5h0M911.5 470.5h0M911.5 506.5h0M911.5 519.5h0M911.5 520.5h0M911.5 540.5h0M912.5 501.5h0M912.5 506.5h0M912.5 512.5h0M912.5 528.5h0M913.5 536.5h0M913.5 541.5h0M913.5 543.5h0M913.5 565.5h0M914.5 530.5h0M914.5 551.5h0M914.5 553.5h0M914.5 562.5h0M915.5 541.5h0M915.5 565.5h0M915.5 566.5h0M916.5 533.5h0M916.5 534.5h0M916.5 545.5h0M916.5 548.5h0M917.5 512.5h0M917.5 521.5h0M917.5 524.5h0M917.5 538.5h0M918.5 506.5h0M918.5 525.5h0M918.5 528.5h0M918.5 550.5h0M919.5 516.5h0M919.5 522.5h0M919.5 528.5h0M919.5 534.5h0M920.5 505.5h0M920.5 506.5h0M920.5 521.5h0M920.5 535.5h0M921.5 522.5h0M921.5 523.5h0M921.5 525.5h0M921.5 537.5h0M922.5 520.5h0M922.5 531.5h0M922.5 533.5h0M922.5 535.5h0M923.5 521.5h0M923.5 525.5h0M923.5 528.5h0M923.5 534.5h0M923.5 537.5h0M924.5 523.5h0M924.5 528.5h0M924.5 533.5h0M925.5 519.5h0M925.5 523.5h0M925.5 529.5h0M926.5 516.5h0M926.5 519.5h0M926.5 520.5h0M926.5 523.5h0M927.5 507.5h0M927.5 516.5h0M927.5 524.5h0M927.5 528.5h0M928.5 512.5h0M928.5 516.5h0M928.5 537.5h0M928.5 546.5h0M929.5 499.5h0M929.5 506.5h0M929.5 513.5h0M929.5 515.5h0M929.5 521.5h0M930.5 504.5h0M930.5 524.5h0M930.5 528.5h0M930.5 533.5h0M931.5 509.5h0M931.5 516.5h0M931.5 517.5h0M931.5 521.5h0M932.5 508.5h0M932.5 509.5h0M932.5 512.5h0M933.5 508.5h0M933.5 517.5h0M933.5 522.5h0M933.5 529.5h0M934.5 470.5h0M934.5 484.5h0M934.5 489.5h0M934.5 490.5h0M934.5 513.5h0M935.5 473.5h0M935.5 477.5h0M935.5 487.5h0M935.5 496.5h0M936.5 506.5h0M936.5 511.5h0M936.5 514.5h0M937.5 511.5h0M937.5 513.5h0M937.5 514.5h0M937.5 520.5h0M938.5 500.5h0M938.5 523.5h0M938.5 534.5h0M938.5 538.5h0M939.5 525.5h0M939.5 531.5h0M939.5 537.5h0M939.5 552.5h0M940.5 482.5h0M940.5 496.5h0M940.5 513.5h0M940.5 523.5h0M940.5 545.5h0M941.5 503.5h0M941.5 519.5h0M941.5 525.5h0M941.5 539.5h0M942.5 517.5h0M942.5 520.5h0M942.5 524.5h0M942.5 532.5h0M943.5 511.5h0M943.5 521.5h0M943.5 523.5h0M943.5 532.5h0M944.5 512.5h0M944.5 519.5h0M944.5 520.5h0M944.5 522.5h0M945.5 520.5h0M945.5 521.5h0M945.5 522.5h0M945.5 537.5h0M946.5 509.5h0M946.5 529.5h0M946.5 536.5h0M946.5 538.5h0M946.5 555.5h0M947.5 474.5h0M947.5 500.5h0M947.5 505.5h0M947.5 530.5h0M948.5 482.5h0M948.5 494.5h0M948.5 508.5h0M948.5 509.5h0M949.5 507.5h0M949.5 516.5h0M949.5 517.5h0M949.5 525.5h0M950.5 501.5h0M950.5 518.5h0M950.5 529.5h0M950.5 543.5h0M951.5 515.5h0M951.5 519.5h0M951.5 521.5h0M951.5 527.5h0M951.5 542.5h0M952.5 512.5h0M952.5 514.5h0M952.5 515.5h0M952.5 551.5h0M953.5 511.5h0M953.5 514.5h0M953.5 516.5h0M953.5 528.5h0M954.5 512.5h0M954.5 516.5h0M954.5 522.5h0M954.5 529.5h0M955.5 508.5h0M955.5 523.5h0M955.5 529.5h0M955.5 550.5h0M956.5 500.5h0M956.5 501.5h0M956.5 509.5h0M956.5 519.5h0M957.5 518.5h0M957.5 521.5h0M957.5 522.5h0M957.5 524.5h0M957.5 528.5h0M958.5 528.5h0M958.5 535.5h0M958.5 537.5h0M958.5 543.5h0M959.5 532.5h0M959.5 543.5h0M959.5 547.5h0M959.5 566.5h0M960.5 531.5h0M960.5 549.5h0M960.5 554.5h0M960.5 563.5h0M961.5 510.5h0M961.5 512.5h0M961.5 535.5h0M961.5 536.5h0M962.5 500.5h0M962.5 515.5h0M962.5 520.5h0M962.5 531.5h0M963.5 474.5h0M963.5 475.5h0M963.5 510.5h0M963.5 511.5h0M963.5 515.5h0M964.5 481.5h0M964.5 494.5h0M964.5 504.5h0M964.5 529.5h0M965.5 500.5h0M965.5 501.5h0M965.5 518.5h0M965.5 536.5h0M966.5 507.5h0M966.5 523.5h0M966.5 543.5h0M966.5 546.5h0M967.5 522.5h0M967.5 531.5h0M967.5 540.5h0M967.5 545.5h0M968.5 535.5h0M968.5 544.5h0M968.5 548.5h0M968.5 549.5h0M969.5 518.5h0M969.5 522.5h0M969.5 539.5h0M969.5 551.5h0M969.5 555.5h0M970.5 533.5h0M970.5 536.5h0M970.5 544.5h0M970.5 550.5h0M971.5 528.5h0M971.5 534.5h0M971.5 538.5h0M972.5 516.5h0M972.5 524.5h0M972.5 533.5h0M972.5 534.5h0M973.5 517.5h0M973.5 521.5h0M973.5 524.5h0M973.5 525.5h0M974.5 473.5h0M974.5 481.5h0M974.5 492.5h0M974.5 498.5h0M974.5 518.5h0M975.5 496.5h0M975.5 497.5h0M975.5 504.5h0M975.5 512.5h0M976.5 498.5h0M976.5 523.5h0M976.5 532.5h0M976.5 536.5h0M977.5 519.5h0M977.5 530.5h0M977.5 533.5h0M977.5 554.5h0M978.5 508.5h0M978.5 509.5h0M978.5 514.5h0M978.5 519.5h0M979.5 485.5h0M979.5 497.5h0M979.5 503.5h0M979.5 510.5h0M980.5 469.5h0M980.5 479.5h0M980.5 480.5h0M980.5 491.5h0M980.5 497.5h0M981.5 496.5h0M981.5 516.5h0M981.5 517.5h0M981.5 531.5h0M982.5 515.5h0M982.5 518.5h0M982.5 531.5h0M982.5 535.5h0M983.5 488.5h0M983.5 498.5h0M983.5 505.5h0M983.5 509.5h0M984.5 488.5h0M984.5 522.5h0M984.5 524.5h0M985.5 504.5h0M985.5 506.5h0M985.5 508.5h0M985.5 529.5h0M986.5 501.5h0M986.5 502.5h0M986.5 506.5h0M986.5 511.5h0M986.5 517.5h0M987.5 498.5h0M987.5 502.5h0M987.5 523.5h0M987.5 542.5h0M988.5 510.5h0M988.5 525.5h0M988.5 527.5h0M989.5 502.5h0M989.5 517.5h0M989.5 522.5h0M989.5 526.5h0M990.5 511.5h0M990.5 513.5h0M990.5 519.5h0M990.5 523.5h0M991.5 513.5h0M991.5 518.5h0M991.5 524.5h0M991.5 528.5h0M992.5 501.5h0M992.5 519.5h0M992.5 525.5h0M992.5 527.5h0M992.5 541.5h0M993.5 497.5h0M993.5 510.5h0M993.5 524.5h0M993.5 531.5h0M994.5 503.5h0M994.5 508.5h0M994.5 516.5h0M994.5 526.5h0M995.5 489.5h0M995.5 491.5h0M995.5 502.5h0M995.5 512.5h0M996.5 478.5h0M996.5 496.5h0M996.5 497.5h0M996.5 502.5h0M997.5 468.5h0M997.5 477.5h0M997.5 478.5h0M997.5 481.5h0M997.5 524.5h0M998.5 522.5h0M998.5 527.5h0M998.5 533.5h0M998.5 546.5h0M999.5 507.5h0M999.5 516.5h0M999.5 518.5h0M999.5 523.5h0M1000.5 515.5h0M1000.5 520.5h0M1000.5 524.5h0M1000.5 526.5h0M1001.5 505.5h0M1001.5 514.5h0M1001.5 525.5h0M1002.5 505.5h0M1002.5 512.5h0M1002.5 516.5h0M1003.5 472.5h0M1003.5 496.5h0M1003.5 500.5h0M1003.5 504.5h0M1003.5 506.5h0M1004.5 470.5h0M1004.5 472.5h0M1004.5 480.5h0M1004.5 505.5h0M1005.5 469.5h0M1005.5 474.5h0M1005.5 498.5h0M1005.5 499.5h0M1006.5 477.5h0M1006.5 495.5h0M1006.5 505.5h0M1006.5 514.5h0M1007.5 472.5h0M1007.5 479.5h0M1007.5 511.5h0M1007.5 530.5h0M1008.5 518.5h0M1008.5 521.5h0M1008.5 531.5h0M1008.5 538.5h0M1009.5 495.5h0M1009.5 508.5h0M1009.5 518.5h0M1009.5 521.5h0M1009.5 530.5h0M1010.5 513.5h0M1010.5 522.5h0M1010.5 535.5h0M1010.5 537.5h0M1011.5 522.5h0M1011.5 533.5h0M1011.5 541.5h0M1011.5 544.5h0M1012.5 515.5h0M1012.5 524.5h0M1012.5 528.5h0M1013.5 506.5h0M1013.5 508.5h0M1013.5 509.5h0M1013.5 516.5h0M1014.5 501.5h0M1014.5 506.5h0M1014.5 507.5h0M1014.5 515.5h0M1014.5 517.5h0M1015.5 499.5h0M1015.5 514.5h0M1015.5 528.5h0M1015.5 531.5h0M1016.5 479.5h0M1016.5 489.5h0M1016.5 492.5h0M1016.5 508.5h0M1017.5 466.5h0M1017.5 467.5h0M1017.5 474.5h0M1017.5 488.5h0M1018.5 483.5h0M1018.5 484.5h0M1018.5 488.5h0M1018.5 495.5h0M1019.5 518.5h0M1019.5 524.5h0M1019.5 526.5h0M1019.5 539.5h0M1020.5 513.5h0M1020.5 519.5h0M1020.5 520.5h0M1020.5 521.5h0M1020.5 524.5h0M1021.5 512.5h0M1021.5 525.5h0M1021.5 530.5h0M1021.5 540.5h0M1022.5 503.5h0M1022.5 504.5h0M1022.5 517.5h0M1022.5 536.5h0M1023.5 467.5h0M1023.5 470.5h0M1023.5 510.5h0M1023.5 521.5h0M1024.5 472.5h0M1024.5 477.5h0M1024.5 482.5h0M1024.5 490.5h0M1025.5 468.5h0M1025.5 484.5h0M1025.5 488.5h0M1026.5 471.5h0M1026.5 477.5h0M1026.5 486.5h0M1026.5 487.5h0M1026.5 500.5h0M1027.5 494.5h0M1027.5 495.5h0M1027.5 504.5h0M1027.5 515.5h0M1028.5 507.5h0M1028.5 511.5h0M1028.5 521.5h0M1028.5 539.5h0M1029.5 513.5h0M1029.5 517.5h0M1029.5 521.5h0M1029.5 523.5h0M1030.5 511.5h0M1030.5 521.5h0M1030.5 523.5h0M1030.5 536.5h0M1031.5 488.5h0M1031.5 501.5h0M1031.5 512.5h0M1031.5 517.5h0M1032.5 514.5h0M1032.5 518.5h0M1032.5 526.5h0M1032.5 539.5h0M1033.5 522.5h0M1033.5 524.5h0M1033.5 532.5h0M1033.5 540.5h0M1034.5 487.5h0M1034.5 498.5h0M1034.5 505.5h0M1034.5 537.5h0M1035.5 500.5h0M1035.5 502.5h0M1035.5 507.5h0M1035.5 510.5h0M1036.5 498.5h0M1036.5 500.5h0M1036.5 506.5h0M1036.5 509.5h0M1037.5 484.5h0M1037.5 497.5h0M1037.5 503.5h0M1037.5 504.5h0M1037.5 507.5h0M1038.5 512.5h0M1038.5 514.5h0M1038.5 539.5h0M1038.5 542.5h0M1039.5 501.5h0M1039.5 502.5h0M1039.5 511.5h0M1039.5 535.5h0M1040.5 506.5h0M1040.5 508.5h0M1040.5 522.5h0M1040.5 523.5h0M1041.5 520.5h0M1041.5 522.5h0M1041.5 528.5h0M1041.5 531.5h0M1042.5 492.5h0M1042.5 514.5h0M1042.5 538.5h0M1042.5 552.5h0M1043.5 493.5h0M1043.5 525.5h0M1043.5 534.5h0M1043.5 539.5h0M1043.5 541.5h0M1044.5 524.5h0M1044.5 537.5h0M1044.5 557.5h0M1044.5 565.5h0M1045.5 497.5h0M1045.5 519.5h0M1045.5 531.5h0M1045.5 546.5h0M1046.5 510.5h0M1046.5 519.5h0M1046.5 522.5h0M1046.5 524.5h0M1047.5 523.5h0M1047.5 524.5h0M1047.5 530.5h0M1047.5 531.5h0M1048.5 495.5h0M1048.5 499.5h0M1048.5 522.5h0M1048.5 552.5h0M1049.5 505.5h0M1049.5 537.5h0M1049.5 560.5h0M1049.5 563.5h0M1050.5 507.5h0M1050.5 521.5h0M1050.5 529.5h0M1051.5 491.5h0M1051.5 502.5h0M1051.5 514.5h0M1051.5 516.5h0M1052.5 496.5h0M1052.5 507.5h0M1052.5 511.5h0M1053.5 503.5h0M1053.5 510.5h0M1053.5 542.5h0M1053.5 543.5h0M1054.5 514.5h0M1054.5 518.5h0M1054.5 529.5h0M1054.5 530.5h0M1055.5 515.5h0M1055.5 520.5h0M1055.5 522.5h0M1055.5 535.5h0M1056.5 498.5h0M1056.5 506.5h0M1056.5 511.5h0M1056.5 512.5h0M1057.5 500.5h0M1057.5 504.5h0M1057.5 527.5h0M1058.5 488.5h0M1058.5 493.5h0M1058.5 496.5h0M1058.5 499.5h0M1059.5 491.5h0M1059.5 504.5h0M1059.5 507.5h0M1059.5 508.5h0M1060.5 502.5h0M1060.5 519.5h0M1060.5 529.5h0M1060.5 532.5h0M1061.5 513.5h0M1061.5 522.5h0M1061.5 526.5h0M1061.5 549.5h0M1062.5 501.5h0M1062.5 505.5h0M1062.5 519.5h0M1062.5 541.5h0M1063.5 514.5h0M1063.5 527.5h0M1063.5 530.5h0M1063.5 533.5h0M1064.5 505.5h0M1064.5 512.5h0M1064.5 514.5h0M1064.5 518.5h0M1065.5 505.5h0M1065.5 524.5h0M1065.5 526.5h0M1066.5 495.5h0M1066.5 497.5h0M1066.5 504.5h0M1066.5 506.5h0M1066.5 507.5h0M1067.5 497.5h0M1067.5 498.5h0M1067.5 508.5h0M1067.5 509.5h0M1068.5 493.5h0M1068.5 502.5h0M1068.5 511.5h0M1068.5 512.5h0M1069.5 508.5h0M1069.5 514.5h0M1069.5 526.5h0M1070.5 506.5h0M1070.5 510.5h0M1070.5 517.5h0M1070.5 518.5h0M1071.5 504.5h0M1071.5 521.5h0M1071.5 522.5h0M1071.5 531.5h0M1072.5 533.5h0M1072.5 542.5h0M1072.5 546.5h0M1072.5 549.5h0M1072.5 550.5h0M1073.5 517.5h0M1073.5 525.5h0M1073.5 547.5h0M1073.5 565.5h0M1074.5 560.5h0M1074.5 566.5h0M1074.5 567.5h0M1074.5 568.5h0M1075.5 543.5h0M1075.5 544.5h0M1075.5 560.5h0M1075.5 561.5h0M1076.5 485.5h0M1076.5 491.5h0M1076.5 500.5h0M1076.5 503.5h0M1077.5 470.5h0M1077.5 478.5h0M1077.5 516.5h0M1077.5 520.5h0M1077.5 521.5h0M1078.5 489.5h0M1078.5 508.5h0M1078.5 522.5h0M1078.5 551.5h0M1079.5 511.5h0M1079.5 512.5h0M1079.5 539.5h0M1079.5 542.5h0M1080.5 513.5h0M1080.5 529.5h0M1080.5 532.5h0M1080.5 534.5h0M1081.5 521.5h0M1081.5 534.5h0M1081.5 563.5h0M1081.5 564.5h0M1082.5 532.5h0M1082.5 560.5h0M1082.5 562.5h0M1082.5 568.5h0M1083.5 524.5h0M1083.5 525.5h0M1083.5 528.5h0M1083.5 545.5h0M1083.5 555.5h0M1084.5 512.5h0M1084.5 519.5h0M1084.5 523.5h0M1084.5 538.5h0M1085.5 504.5h0M1085.5 505.5h0M1085.5 512.5h0M1085.5 537.5h0M1086.5 494.5h0M1086.5 495.5h0M1086.5 504.5h0M1086.5 522.5h0M1087.5 507.5h0M1087.5 508.5h0M1087.5 524.5h0M1087.5 528.5h0M1088.5 516.5h0M1088.5 536.5h0M1088.5 539.5h0M1088.5 542.5h0M1089.5 491.5h0M1089.5 501.5h0M1089.5 519.5h0M1089.5 524.5h0M1089.5 532.5h0M1090.5 517.5h0M1090.5 523.5h0M1090.5 524.5h0M1090.5 544.5h0M1091.5 524.5h0M1091.5 525.5h0M1091.5 545.5h0M1091.5 546.5h0M1092.5 515.5h0M1092.5 542.5h0M1092.5 543.5h0M1092.5 559.5h0M1093.5 516.5h0M1093.5 520.5h0M1093.5 524.5h0M1093.5 531.5h0M1094.5 506.5h0M1094.5 532.5h0M1094.5 543.5h0M1095.5 521.5h0M1095.5 530.5h0M1095.5 546.5h0M1095.5 547.5h0M1096.5 491.5h0M1096.5 512.5h0M1096.5 545.5h0M1096.5 564.5h0M1097.5 491.5h0M1097.5 519.5h0M1097.5 534.5h0M1097.5 545.5h0M1098.5 503.5h0M1098.5 505.5h0M1098.5 513.5h0M1098.5 519.5h0M1099.5 507.5h0M1099.5 518.5h0M1099.5 520.5h0M1100.5 506.5h0M1100.5 513.5h0M1100.5 519.5h0M1100.5 524.5h0M1100.5 526.5h0M1101.5 507.5h0M1101.5 510.5h0M1101.5 550.5h0M1101.5 569.5h0M1102.5 568.5h0M1102.5 569.5h0M1103.5 532.5h0M1103.5 557.5h0M1103.5 559.5h0M1103.5 568.5h0M1104.5 506.5h0M1104.5 530.5h0M1104.5 531.5h0M1104.5 569.5h0M1105.5 500.5h0M1105.5 503.5h0M1105.5 512.5h0M1105.5 530.5h0M1106.5 512.5h0M1106.5 515.5h0M1106.5 520.5h0M1106.5 526.5h0M1106.5 544.5h0M1107.5 515.5h0M1107.5 534.5h0M1107.5 541.5h0M1107.5 543.5h0M1108.5 518.5h0M1108.5 519.5h0M1108.5 523.5h0M1109.5 516.5h0M1109.5 528.5h0M1109.5 532.5h0M1109.5 535.5h0M1110.5 506.5h0M1110.5 509.5h0M1110.5 513.5h0M1110.5 515.5h0M1111.5 507.5h0M1111.5 516.5h0M1111.5 518.5h0M1111.5 530.5h0M1112.5 504.5h0M1112.5 516.5h0M1112.5 519.5h0M1112.5 526.5h0M1113.5 541.5h0M1113.5 542.5h0M1113.5 543.5h0M1113.5 548.5h0M1114.5 517.5h0M1114.5 524.5h0M1114.5 543.5h0M1114.5 549.5h0M1115.5 484.5h0M1115.5 509.5h0M1115.5 524.5h0M1115.5 529.5h0M1116.5 486.5h0M1116.5 503.5h0M1116.5 515.5h0M1116.5 539.5h0M1117.5 507.5h0M1117.5 525.5h0M1117.5 550.5h0M1117.5 553.5h0M1118.5 554.5h0M1118.5 562.5h0M1118.5 563.5h0M1118.5 568.5h0M1119.5 520.5h0M1119.5 535.5h0M1119.5 543.5h0M1119.5 559.5h0M1120.5 521.5h0M1120.5 529.5h0M1120.5 542.5h0M1120.5 548.5h0M1121.5 552.5h0M1121.5 556.5h0M1121.5 562.5h0M1121.5 573.5h0M1122.5 557.5h0M1122.5 569.5h0M1122.5 576.5h0M1122.5 589.5h0M1123.5 548.5h0M1123.5 552.5h0M1123.5 560.5h0M1123.5 574.5h0M1123.5 577.5h0M1124.5 537.5h0M1124.5 551.5h0M1124.5 597.5h0M1124.5 607.5h0M1125.5 540.5h0M1125.5 548.5h0M1125.5 558.5h0M1125.5 566.5h0M1126.5 553.5h0M1126.5 554.5h0M1126.5 558.5h0M1126.5 574.5h0M1127.5 534.5h0M1127.5 539.5h0M1127.5 545.5h0M1127.5 547.5h0M1128.5 546.5h0M1128.5 550.5h0M1128.5 557.5h0M1128.5 582.5h0M1129.5 537.5h0M1129.5 539.5h0M1129.5 565.5h0M1129.5 575.5h0M1129.5 594.5h0M1130.5 529.5h0M1130.5 548.5h0M1130.5 553.5h0M1130.5 565.5h0M1131.5 557.5h0M1131.5 569.5h0M1131.5 570.5h0M1131.5 580.5h0M1132.5 559.5h0M1132.5 570.5h0M1132.5 572.5h0M1132.5 573.5h0M1133.5 558.5h0M1133.5 568.5h0M1133.5 583.5h0M1133.5 584.5h0M1134.5 568.5h0M1134.5 587.5h0M1134.5 602.5h0M1134.5 609.5h0M1135.5 537.5h0M1135.5 543.5h0M1135.5 549.5h0M1135.5 551.5h0M1135.5 574.5h0M1136.5 528.5h0M1136.5 559.5h0M1136.5 562.5h0M1136.5 567.5h0M1137.5 532.5h0M1137.5 534.5h0M1137.5 564.5h0M1137.5 575.5h0M1138.5 538.5h0M1138.5 540.5h0M1138.5 545.5h0M1138.5 568.5h0M1139.5 556.5h0M1139.5 566.5h0M1139.5 570.5h0M1139.5 581.5h0M1140.5 553.5h0M1140.5 556.5h0M1140.5 563.5h0M1140.5 566.5h0M1140.5 567.5h0M1141.5 552.5h0M1141.5 554.5h0M1141.5 562.5h0M1141.5 565.5h0M1142.5 553.5h0M1142.5 555.5h0M1142.5 560.5h0M1142.5 566.5h0M1143.5 552.5h0M1143.5 566.5h0M1143.5 578.5h0M1143.5 579.5h0M1144.5 551.5h0M1144.5 554.5h0M1144.5 567.5h0M1144.5 572.5h0M1145.5 544.5h0M1145.5 550.5h0M1145.5 561.5h0M1145.5 564.5h0M1146.5 526.5h0M1146.5 537.5h0M1146.5 542.5h0M1146.5 572.5h0M1146.5 583.5h0M1147.5 545.5h0M1147.5 567.5h0M1147.5 569.5h0M1147.5 579.5h0M1148.5 560.5h0M1148.5 567.5h0M1148.5 591.5h0M1149.5 543.5h0M1149.5 545.5h0M1149.5 552.5h0M1149.5 560.5h0M1150.5 530.5h0M1150.5 544.5h0M1150.5 547.5h0M1150.5 548.5h0M1151.5 541.5h0M1151.5 543.5h0M1151.5 549.5h0M1151.5 561.5h0M1152.5 531.5h0M1152.5 533.5h0M1152.5 537.5h0M1152.5 538.5h0M1152.5 550.5h0M1153.5 551.5h0M1153.5 561.5h0M1153.5 569.5h0M1153.5 575.5h0M1154.5 534.5h0M1154.5 538.5h0M1154.5 539.5h0M1154.5 564.5h0M1155.5 517.5h0M1155.5 526.5h0M1155.5 528.5h0M1155.5 557.5h0M1156.5 525.5h0M1156.5 553.5h0M1156.5 558.5h0M1156.5 582.5h0M1157.5 535.5h0M1157.5 561.5h0M1157.5 577.5h0M1157.5 585.5h0M1158.5 538.5h0M1158.5 548.5h0M1158.5 558.5h0M1158.5 571.5h0M1158.5 577.5h0M1159.5 537.5h0M1159.5 550.5h0M1159.5 585.5h0M1159.5 603.5h0M1160.5 554.5h0M1160.5 566.5h0M1160.5 570.5h0M1161.5 558.5h0M1161.5 563.5h0M1161.5 575.5h0M1161.5 582.5h0M1162.5 538.5h0M1162.5 556.5h0M1162.5 560.5h0M1162.5 562.5h0M1163.5 544.5h0M1163.5 551.5h0M1163.5 569.5h0M1163.5 572.5h0M1164.5 498.5h0M1164.5 519.5h0M1164.5 537.5h0M1164.5 564.5h0M1165.5 501.5h0M1165.5 512.5h0M1165.5 559.5h0M1165.5 563.5h0M1166.5 540.5h0M1166.5 567.5h0M1166.5 591.5h0M1166.5 592.5h0M1167.5 508.5h0M1167.5 546.5h0M1167.5 566.5h0M1167.5 579.5h0M1168.5 553.5h0M1168.5 554.5h0M1168.5 556.5h0M1168.5 578.5h0M1169.5 568.5h0M1169.5 572.5h0M1169.5 575.5h0M1169.5 595.5h0M1169.5 600.5h0M1170.5 532.5h0M1170.5 538.5h0M1170.5 550.5h0M1170.5 571.5h0M1171.5 496.5h0M1171.5 521.5h0M1171.5 537.5h0M1172.5 519.5h0M1172.5 528.5h0M1172.5 536.5h0M1172.5 582.5h0M1173.5 567.5h0M1173.5 574.5h0M1173.5 576.5h0M1173.5 578.5h0M1174.5 532.5h0M1174.5 536.5h0M1174.5 571.5h0M1174.5 575.5h0M1175.5 531.5h0M1175.5 536.5h0M1175.5 540.5h0M1175.5 550.5h0M1176.5 519.5h0M1176.5 520.5h0M1176.5 529.5h0M1176.5 539.5h0M1177.5 548.5h0M1177.5 552.5h0M1177.5 563.5h0M1177.5 578.5h0M1178.5 549.5h0M1178.5 560.5h0M1178.5 566.5h0M1178.5 578.5h0M1179.5 555.5h0M1179.5 557.5h0M1179.5 563.5h0M1179.5 577.5h0M1180.5 552.5h0M1180.5 555.5h0M1180.5 577.5h0M1180.5 582.5h0M1181.5 578.5h0M1181.5 583.5h0M1181.5 593.5h0M1181.5 598.5h0M1181.5 599.5h0M1182.5 575.5h0M1182.5 580.5h0M1182.5 581.5h0M1183.5 569.5h0M1183.5 575.5h0M1183.5 579.5h0M1183.5 585.5h0M1184.5 550.5h0M1184.5 558.5h0M1184.5 563.5h0M1184.5 573.5h0M1185.5 555.5h0M1185.5 563.5h0M1185.5 566.5h0M1185.5 570.5h0M1186.5 573.5h0M1186.5 590.5h0M1186.5 602.5h0M1186.5 605.5h0M1186.5 610.5h0M1187.5 523.5h0M1187.5 545.5h0M1187.5 552.5h0M1187.5 572.5h0M1188.5 531.5h0M1188.5 557.5h0M1188.5 564.5h0M1188.5 582.5h0M1189.5 537.5h0M1189.5 539.5h0M1189.5 568.5h0M1189.5 593.5h0M1190.5 533.5h0M1190.5 546.5h0M1190.5 550.5h0M1190.5 572.5h0M1191.5 534.5h0M1191.5 539.5h0M1191.5 548.5h0M1191.5 554.5h0M1192.5 521.5h0M1192.5 547.5h0M1192.5 553.5h0M1192.5 565.5h0M1192.5 572.5h0M1193.5 511.5h0M1193.5 520.5h0M1193.5 529.5h0M1193.5 534.5h0M1194.5 495.5h0M1194.5 496.5h0M1194.5 498.5h0M1194.5 506.5h0M1195.5 498.5h0M1195.5 501.5h0M1195.5 508.5h0M1196.5 514.5h0M1196.5 524.5h0M1196.5 528.5h0M1196.5 553.5h0M1197.5 520.5h0M1197.5 522.5h0M1197.5 529.5h0M1197.5 534.5h0M1198.5 523.5h0M1198.5 531.5h0M1198.5 534.5h0M1198.5 538.5h0M1198.5 548.5h0M1199.5 495.5h0M1199.5 499.5h0M1199.5 546.5h0M1199.5 557.5h0M1200.5 495.5h0M1200.5 496.5h0M1200.5 500.5h0M1201.5 496.5h0M1201.5 500.5h0M1201.5 517.5h0M1201.5 521.5h0M1202.5 510.5h0M1202.5 536.5h0M1202.5 555.5h0M1202.5 565.5h0M1203.5 524.5h0M1203.5 534.5h0M1203.5 538.5h0M1203.5 541.5h0M1203.5 561.5h0M1204.5 537.5h0M1204.5 548.5h0M1204.5 557.5h0M1204.5 572.5h0M1205.5 530.5h0M1205.5 535.5h0M1205.5 542.5h0M1205.5 546.5h0M1206.5 518.5h0M1206.5 542.5h0M1206.5 547.5h0M1206.5 559.5h0M1207.5 509.5h0M1207.5 511.5h0M1207.5 537.5h0M1207.5 539.5h0M1208.5 520.5h0M1208.5 538.5h0M1208.5 542.5h0M1208.5 551.5h0M1209.5 550.5h0M1209.5 551.5h0M1209.5 560.5h0M1209.5 564.5h0M1209.5 568.5h0M1210.5 560.5h0M1210.5 566.5h0M1210.5 580.5h0M1210.5 588.5h0M1211.5 571.5h0M1211.5 581.5h0M1211.5 589.5h0M1211.5 594.5h0M1212.5 571.5h0M1212.5 584.5h0M1212.5 599.5h0M1212.5 611.5h0M1213.5 562.5h0M1213.5 565.5h0M1213.5 584.5h0M1213.5 595.5h0M1214.5 557.5h0M1214.5 566.5h0M1214.5 591.5h0M1214.5 600.5h0M1215.5 521.5h0M1215.5 562.5h0M1215.5 572.5h0M1215.5 573.5h0M1215.5 592.5h0M1216.5 514.5h0M1216.5 526.5h0M1216.5 538.5h0M1216.5 561.5h0M1217.5 555.5h0M1217.5 556.5h0M1217.5 560.5h0M1217.5 563.5h0M1218.5 541.5h0M1218.5 550.5h0M1218.5 552.5h0M1218.5 566.5h0M1219.5 538.5h0M1219.5 566.5h0M1219.5 567.5h0M1219.5 577.5h0M1220.5 542.5h0M1220.5 560.5h0M1220.5 564.5h0M1220.5 566.5h0M1221.5 539.5h0M1221.5 543.5h0M1221.5 552.5h0M1221.5 566.5h0M1221.5 575.5h0M1222.5 532.5h0M1222.5 553.5h0M1222.5 554.5h0M1222.5 571.5h0M1223.5 566.5h0M1223.5 567.5h0M1223.5 571.5h0M1223.5 575.5h0M1224.5 568.5h0M1224.5 569.5h0M1224.5 570.5h0M1224.5 578.5h0M1225.5 585.5h0M1225.5 588.5h0M1225.5 597.5h0M1225.5 604.5h0M1226.5 557.5h0M1226.5 579.5h0M1226.5 584.5h0M1226.5 592.5h0M1226.5 594.5h0M1227.5 570.5h0M1227.5 574.5h0M1227.5 582.5h0M1228.5 560.5h0M1228.5 565.5h0M1228.5 570.5h0M1228.5 571.5h0M1229.5 536.5h0M1229.5 547.5h0M1229.5 550.5h0M1230.5 544.5h0M1230.5 554.5h0M1230.5 555.5h0M1230.5 584.5h0M1231.5 573.5h0M1231.5 574.5h0M1231.5 586.5h0M1232.5 546.5h0M1232.5 552.5h0M1232.5 557.5h0M1232.5 584.5h0M1233.5 547.5h0M1233.5 548.5h0M1233.5 550.5h0M1233.5 556.5h0M1234.5 546.5h0M1234.5 550.5h0M1234.5 564.5h0M1234.5 569.5h0M1235.5 553.5h0M1235.5 566.5h0M1235.5 589.5h0M1236.5 538.5h0M1236.5 549.5h0M1236.5 570.5h0M1236.5 573.5h0M1237.5 535.5h0M1237.5 543.5h0M1237.5 545.5h0M1237.5 549.5h0M1238.5 496.5h0M1238.5 512.5h0M1238.5 519.5h0M1238.5 523.5h0M1238.5 539.5h0M1239.5 495.5h0M1239.5 498.5h0M1239.5 500.5h0M1239.5 525.5h0M1240.5 495.5h0M1240.5 496.5h0M1240.5 536.5h0M1240.5 552.5h0M1241.5 538.5h0M1241.5 539.5h0M1241.5 545.5h0M1241.5 564.5h0M1242.5 536.5h0M1242.5 542.5h0M1242.5 548.5h0M1243.5 509.5h0M1243.5 513.5h0M1243.5 514.5h0M1243.5 521.5h0M1244.5 509.5h0M1244.5 512.5h0M1244.5 513.5h0M1244.5 558.5h0M1244.5 570.5h0M1245.5 504.5h0M1245.5 505.5h0M1245.5 526.5h0M1245.5 537.5h0M1246.5 565.5h0M1246.5 579.5h0M1246.5 589.5h0M1247.5 561.5h0M1247.5 590.5h0M1247.5 591.5h0M1247.5 593.5h0M1248.5 539.5h0M1248.5 550.5h0M1248.5 566.5h0M1248.5 568.5h0M1249.5 555.5h0M1249.5 570.5h0M1249.5 579.5h0M1249.5 583.5h0M1249.5 592.5h0M1250.5 516.5h0M1250.5 517.5h0M1250.5 527.5h0M1250.5 558.5h0M1251.5 520.5h0M1251.5 540.5h0M1251.5 562.5h0M1251.5 577.5h0M1252.5 559.5h0M1252.5 562.5h0M1252.5 566.5h0M1252.5 574.5h0M1253.5 535.5h0M1253.5 560.5h0M1253.5 561.5h0M1253.5 579.5h0M1254.5 545.5h0M1254.5 557.5h0M1254.5 560.5h0M1254.5 561.5h0M1255.5 542.5h0M1255.5 547.5h0M1255.5 559.5h0M1255.5 560.5h0M1255.5 569.5h0M1256.5 558.5h0M1256.5 580.5h0M1256.5 591.5h0M1256.5 602.5h0M1257.5 561.5h0M1257.5 570.5h0M1257.5 574.5h0M1258.5 558.5h0M1258.5 566.5h0M1258.5 575.5h0M1258.5 579.5h0M1259.5 543.5h0M1259.5 550.5h0M1259.5 561.5h0M1259.5 575.5h0M1260.5 539.5h0M1260.5 552.5h0M1260.5 561.5h0M1261.5 533.5h0M1261.5 538.5h0M1261.5 549.5h0M1261.5 570.5h0M1262.5 500.5h0M1262.5 501.5h0M1262.5 512.5h0M1263.5 497.5h0M1263.5 513.5h0M1263.5 527.5h0M1264.5 496.5h0M1264.5 497.5h0M1264.5 500.5h0M1264.5 501.5h0M1265.5 496.5h0M1265.5 497.5h0M1265.5 498.5h0M1265.5 525.5h0M1266.5 538.5h0M1266.5 546.5h0M1266.5 561.5h0M1266.5 575.5h0M1266.5 579.5h0M1267.5 558.5h0M1267.5 566.5h0M1267.5 577.5h0M1267.5 581.5h0M1268.5 521.5h0M1268.5 544.5h0M1268.5 551.5h0M1268.5 566.5h0M1269.5 515.5h0M1269.5 529.5h0M1269.5 539.5h0M1269.5 542.5h0M1270.5 498.5h0M1270.5 499.5h0M1270.5 500.5h0M1270.5 516.5h0M1271.5 514.5h0M1271.5 519.5h0M1271.5 535.5h0M1271.5 543.5h0M1272.5 555.5h0M1272.5 556.5h0M1272.5 562.5h0M1272.5 564.5h0M1272.5 576.5h0M1273.5 558.5h0M1273.5 559.5h0M1273.5 562.5h0M1274.5 553.5h0M1274.5 560.5h0M1274.5 561.5h0M1274.5 591.5h0M1275.5 559.5h0M1275.5 565.5h0M1275.5 578.5h0M1275.5 583.5h0M1276.5 522.5h0M1276.5 530.5h0M1276.5 539.5h0M1276.5 551.5h0M1277.5 529.5h0M1277.5 557.5h0M1277.5 593.5h0M1278.5 540.5h0M1278.5 559.5h0M1278.5 563.5h0M1278.5 579.5h0M1278.5 595.5h0M1279.5 558.5h0M1279.5 564.5h0M1279.5 573.5h0M1279.5 579.5h0M1280.5 547.5h0M1280.5 564.5h0M1280.5 567.5h0M1280.5 571.5h0M1281.5 544.5h0M1281.5 575.5h0M1281.5 596.5h0M1281.5 598.5h0M1282.5 513.5h0M1282.5 528.5h0M1282.5 541.5h0M1282.5 542.5h0M1283.5 521.5h0M1283.5 529.5h0M1283.5 564.5h0M1283.5 582.5h0M1284.5 513.5h0M1284.5 533.5h0M1284.5 552.5h0M1284.5 554.5h0M1284.5 568.5h0M1285.5 543.5h0M1285.5 565.5h0M1285.5 568.5h0M1285.5 585.5h0M1286.5 544.5h0M1286.5 552.5h0M1286.5 564.5h0M1286.5 565.5h0M1287.5 541.5h0M1287.5 548.5h0M1287.5 550.5h0M1287.5 562.5h0M1288.5 516.5h0M1288.5 523.5h0M1288.5 528.5h0M1288.5 535.5h0M1289.5 513.5h0M1289.5 521.5h0M1289.5 543.5h0M1289.5 549.5h0M1289.5 570.5h0M1290.5 552.5h0M1290.5 558.5h0M1290.5 569.5h0M1290.5 592.5h0M1291.5 558.5h0M1291.5 562.5h0M1291.5 577.5h0M1292.5 566.5h0M1292.5 570.5h0M1292.5 587.5h0M1292.5 593.5h0M1293.5 554.5h0M1293.5 565.5h0M1293.5 576.5h0M1293.5 578.5h0M1294.5 593.5h0M1294.5 594.5h0M1294.5 605.5h0M1294.5 609.5h0M1295.5 554.5h0M1295.5 562.5h0M1295.5 569.5h0M1295.5 595.5h0M1295.5 596.5h0M1296.5 553.5h0M1296.5 556.5h0M1296.5 570.5h0M1296.5 587.5h0M1297.5 575.5h0M1297.5 577.5h0M1297.5 587.5h0M1298.5 519.5h0M1298.5 540.5h0M1298.5 549.5h0M1298.5 551.5h0M1299.5 565.5h0M1299.5 568.5h0M1299.5 573.5h0M1299.5 584.5h0M1300.5 538.5h0M1300.5 543.5h0M1300.5 548.5h0M1300.5 554.5h0M1301.5 530.5h0M1301.5 533.5h0M1301.5 540.5h0M1301.5 544.5h0M1301.5 571.5h0M1302.5 533.5h0M1302.5 535.5h0M1302.5 537.5h0" stroke="#000" stroke-width="3.7" stroke-linecap="round" fill="none"/>
<path d="M332.5 461.5h0M372.5 459.5h0M421.5 458.5h0M554.5 462.5h0M605.5 576.5h0M688.5 592.5h0M757.5 645.5h0M790.5 615.5h0M791.5 571.5h0M793.5 590.5h0M1023.5 462.5h0" stroke="#ffa500" stroke-width="3.6" stroke-linecap="round" fill="none"/>
<path d="M701.6 660.4h5.9l-2.95 5.5z" fill="#ffa500"/>
<g stroke="#800080" stroke-width="2.08" stroke-dasharray="2.08 3.44" fill="none"><line x1="162.3" y1="666.5" x2="162.3" y2="380.5"/><line x1="1121.1" y1="666.5" x2="1121.1" y2="380.5"/><line x1="1302.9" y1="666.5" x2="1302.9" y2="380.5"/></g>
<rect x="162.3" y="498.3" width="958.7" height="39.4" fill="#ffa500" fill-opacity="0.1"/>
<rect x="1121.1" y="531.8" width="181.8" height="46" fill="#ffa500" fill-opacity="0.1"/>
<line x1="161.3" y1="517.4" x2="1122.1" y2="517.4" stroke="#ffa500" stroke-width="2.78"/>
<line x1="1120.1" y1="554.5" x2="1303.9" y2="554.5" stroke="#ffa500" stroke-width="2.78"/>
<rect x="103.5" y="499.1" width="1257.5" height="48.8" fill="#ff0000" fill-opacity="0.1" stroke="#ff0000" stroke-opacity="0.1" stroke-width="1"/>
<line x1="105.5" y1="523.2" x2="1361" y2="523.2" stroke="#ff0000" stroke-width="2.08"/>
</g>
<rect x="105.5" y="380.5" width="1380.0" height="286.0" fill="none" stroke="#000" stroke-width="1" shape-rendering="crispEdges"/>
<g stroke="#000" stroke-width="1" shape-rendering="crispEdges"><line x1="162.5" y1="666.5" x2="162.5" y2="671.5"/><line x1="396.5" y1="666.5" x2="396.5" y2="671.5"/><line x1="629.5" y1="666.5" x2="629.5" y2="671.5"/><line x1="863.5" y1="666.5" x2="863.5" y2="671.5"/><line x1="1097.5" y1="666.5" x2="1097.5" y2="671.5"/><line x1="1330.5" y1="666.5" x2="1330.5" y2="671.5"/></g><g font-size="13.89px" text-anchor="middle" fill="#000"><text x="163.4" y="686.8">0</text><text x="396.3" y="686.8">1000</text><text x="630.0" y="686.8">2000</text><text x="862.6" y="686.8">3000</text><text x="1096.7" y="686.8">4000</text><text x="1328.9" y="686.8">5000</text></g>
<g stroke="#000" stroke-width="1" shape-rendering="crispEdges"><line x1="100.5" y1="664.5" x2="105.5" y2="664.5"/><line x1="100.5" y1="606.5" x2="105.5" y2="606.5"/><line x1="100.5" y1="547.5" x2="105.5" y2="547.5"/><line x1="100.5" y1="489.5" x2="105.5" y2="489.5"/><line x1="100.5" y1="430.5" x2="105.5" y2="430.5"/></g><g font-size="13.89px" text-anchor="end" fill="#000"><text x="95.2" y="669.1">5.82</text><text x="95.2" y="611.1">5.83</text><text x="95.2" y="552.1">5.84</text><text x="95.2" y="494.1">5.85</text><text x="95.2" y="435.1">5.86</text></g>
<text x="795.0" y="372.2" font-size="16.67px" text-anchor="middle">Magnitude Estimates</text>
<g font-size="13.89px" text-anchor="middle"><text x="641.7" y="657">51140</text><text x="1211.4" y="637">49436</text></g>
<rect x="1365.4" y="387.5" width="113.3" height="48.1" rx="2.8" ry="2.8" fill="#fff" fill-opacity="0.8" stroke="#ccc" stroke-opacity="0.8" stroke-width="1.1"/>
<line x1="1369" y1="399.5" x2="1400" y2="399.5" stroke="#ffa500" stroke-width="2.78"/>
<text x="1409.9" y="403.9" font-size="13.89px">mag<tspan font-size="9.72px" font-style="italic" dy="2.1" letter-spacing="0.2">OBSID</tspan></text>
<line x1="1369" y1="421.9" x2="1399.2" y2="421.9" stroke="#ff0000" stroke-width="2.08"/>
<text x="1408.9" y="426.8" font-size="13.89px">mag</text>
<rect x="1408.3" y="634.3" width="70.4" height="25.1" rx="2.8" ry="2.8" fill="#fff" fill-opacity="0.8" stroke="#ccc" stroke-opacity="0.8" stroke-width="1.1"/>
<circle cx="1428.3" cy="647.3" r="2.1" fill="#000"/>
<text x="1452.8" y="650.8" font-size="13.89px">OK</text>
<g clip-path="url(#c3)">
<g stroke="#b0b0b0" stroke-width="1.1" stroke-dasharray="1.1 1.83" fill="none"><line x1="105.5" y1="758.5" x2="1485.5" y2="758.5"/><line x1="105.5" y1="791.5" x2="1485.5" y2="791.5"/><line x1="105.5" y1="823.5" x2="1485.5" y2="823.5"/><line x1="105.5" y1="856.5" x2="1485.5" y2="856.5"/><line x1="105.5" y1="889.5" x2="1485.5" y2="889.5"/><line x1="105.5" y1="921.5" x2="1485.5" y2="921.5"/><line x1="105.5" y1="957.5" x2="1485.5" y2="957.5"/><line x1="105.5" y1="983.5" x2="1485.5" y2="983.5"/><line x1="105.5" y1="1009.5" x2="1485.5" y2="1009.5"/></g>
<path d="M162.5 1008.5h0M163.5 1008.5h0M164.5 1007.5h0M164.5 1008.5h0M165.5 1008.5h0M166.5 1007.5h0M166.5 1008.5h0M167.5 1007.5h0M167.5 1008.5h0M168.5 1007.5h0M168.5 1008.5h0M169.5 1007.5h0M170.5 1007.5h0M170.5 1008.5h0M171.5 1008.5h0M172.5 1008.5h0M173.5 1008.5h0M174.5 1008.5h0M175.5 1008.5h0M176.5 1008.5h0M177.5 1008.5h0M178.5 1007.5h0M178.5 1008.5h0M179.5 1007.5h0M179.5 1008.5h0M180.5 1007.5h0M180.5 1008.5h0M181.5 1008.5h0M182.5 1008.5h0M183.5 1008.5h0M184.5 1007.5h0M184.5 1008.5h0M185.5 1007.5h0M185.5 1008.5h0M186.5 1007.5h0M186.5 1008.5h0M187.5 1007.5h0M187.5 1008.5h0M188.5 1008.5h0M189.5 1007.5h0M189.5 1008.5h0M190.5 1007.5h0M190.5 1008.5h0M191.5 1007.5h0M192.5 1007.5h0M192.5 1008.5h0M193.5 1008.5h0M194.5 1008.5h0M195.5 1008.5h0M196.5 1008.5h0M197.5 1008.5h0M197.5 1009.5h0M198.5 1008.5h0M198.5 1009.5h0M199.5 1007.5h0M199.5 1008.5h0M200.5 1007.5h0M200.5 1008.5h0M201.5 1007.5h0M201.5 1008.5h0M202.5 1008.5h0M203.5 1008.5h0M204.5 1008.5h0M205.5 1007.5h0M205.5 1008.5h0M206.5 1007.5h0M206.5 1008.5h0M207.5 1008.5h0M208.5 1008.5h0M209.5 1008.5h0M210.5 1008.5h0M211.5 1007.5h0M211.5 1008.5h0M212.5 1008.5h0M213.5 1007.5h0M213.5 1008.5h0M214.5 1007.5h0M214.5 1008.5h0M215.5 1008.5h0M216.5 1008.5h0M217.5 1008.5h0M218.5 1008.5h0M219.5 1008.5h0M220.5 1008.5h0M221.5 1008.5h0M222.5 1008.5h0M223.5 1008.5h0M224.5 1008.5h0M225.5 1008.5h0M226.5 1007.5h0M226.5 1008.5h0M227.5 1007.5h0M227.5 1008.5h0M228.5 1008.5h0M229.5 1008.5h0M230.5 1008.5h0M231.5 1008.5h0M232.5 1007.5h0M232.5 1008.5h0M233.5 1007.5h0M233.5 1008.5h0M234.5 1008.5h0M235.5 1008.5h0M236.5 1007.5h0M236.5 1008.5h0M237.5 1008.5h0M238.5 1007.5h0M238.5 1008.5h0M239.5 1007.5h0M239.5 1008.5h0M240.5 1008.5h0M241.5 1008.5h0M242.5 1008.5h0M243.5 1008.5h0M244.5 1008.5h0M245.5 1008.5h0M246.5 1008.5h0M247.5 1008.5h0M248.5 1008.5h0M249.5 1008.5h0M250.5 1008.5h0M251.5 1007.5h0M251.5 1008.5h0M252.5 1008.5h0M253.5 1008.5h0M254.5 1008.5h0M255.5 1008.5h0M256.5 1008.5h0M256.5 1009.5h0M257.5 1008.5h0M257.5 1009.5h0M258.5 1008.5h0M258.5 1009.5h0M259.5 1008.5h0M260.5 1008.5h0M261.5 1007.5h0M261.5 1008.5h0M262.5 1008.5h0M263.5 1008.5h0M264.5 1007.5h0M264.5 1008.5h0M265.5 1008.5h0M266.5 1008.5h0M267.5 1008.5h0M268.5 1007.5h0M268.5 1008.5h0M269.5 1008.5h0M270.5 1008.5h0M271.5 1008.5h0M272.5 1007.5h0M272.5 1008.5h0M273.5 1008.5h0M274.5 1007.5h0M274.5 1008.5h0M275.5 1007.5h0M275.5 1008.5h0M276.5 1008.5h0M277.5 1008.5h0M278.5 1008.5h0M279.5 1008.5h0M280.5 1008.5h0M281.5 1007.5h0M282.5 1007.5h0M282.5 1008.5h0M283.5 1007.5h0M283.5 1008.5h0M284.5 1008.5h0M285.5 1008.5h0M286.5 1007.5h0M286.5 1008.5h0M287.5 1008.5h0M288.5 1008.5h0M289.5 1007.5h0M289.5 1008.5h0M290.5 1008.5h0M291.5 1008.5h0M292.5 1008.5h0M293.5 1008.5h0M294.5 1008.5h0M295.5 1007.5h0M295.5 1008.5h0M296.5 1007.5h0M297.5 1007.5h0M297.5 1008.5h0M298.5 1007.5h0M298.5 1008.5h0M299.5 1007.5h0M299.5 1008.5h0M300.5 1007.5h0M300.5 1008.5h0M301.5 1007.5h0M301.5 1008.5h0M302.5 1008.5h0M303.5 1007.5h0M303.5 1008.5h0M304.5 1008.5h0M305.5 1008.5h0M305.5 1009.5h0M306.5 1008.5h0M306.5 1009.5h0M307.5 1008.5h0M307.5 1009.5h0M308.5 1007.5h0M308.5 1008.5h0M309.5 1007.5h0M310.5 1007.5h0M311.5 1007.5h0M311.5 1008.5h0M312.5 1007.5h0M312.5 1008.5h0M313.5 1008.5h0M314.5 1008.5h0M315.5 1008.5h0M315.5 1009.5h0M316.5 1008.5h0M317.5 1008.5h0M318.5 1008.5h0M319.5 1007.5h0M319.5 1008.5h0M320.5 1007.5h0M321.5 1007.5h0M322.5 1007.5h0M322.5 1008.5h0M323.5 1007.5h0M323.5 1008.5h0M324.5 1008.5h0M325.5 1008.5h0M326.5 1007.5h0M326.5 1008.5h0M327.5 1008.5h0M328.5 1008.5h0M329.5 1008.5h0M329.5 1009.5h0M330.5 1008.5h0M330.5 1009.5h0M331.5 1008.5h0M332.5 1008.5h0M333.5 1008.5h0M334.5 1008.5h0M335.5 1007.5h0M335.5 1008.5h0M336.5 1007.5h0M336.5 1008.5h0M337.5 1007.5h0M337.5 1008.5h0M338.5 1008.5h0M339.5 1008.5h0M340.5 1008.5h0M341.5 1008.5h0M342.5 1008.5h0M343.5 1008.5h0M344.5 1008.5h0M344.5 1009.5h0M345.5 1008.5h0M345.5 1009.5h0M346.5 1008.5h0M347.5 1008.5h0M348.5 1007.5h0M348.5 1008.5h0M349.5 1007.5h0M349.5 1008.5h0M350.5 1007.5h0M350.5 1008.5h0M351.5 1008.5h0M352.5 1008.5h0M353.5 1008.5h0M354.5 1008.5h0M355.5 1008.5h0M356.5 1008.5h0M357.5 1008.5h0M358.5 1008.5h0M358.5 1009.5h0M359.5 1008.5h0M360.5 1008.5h0M361.5 1008.5h0M362.5 1008.5h0M362.5 1009.5h0M363.5 1008.5h0M363.5 1009.5h0M364.5 1008.5h0M365.5 1008.5h0M366.5 1007.5h0M366.5 1008.5h0M367.5 1007.5h0M367.5 1008.5h0M368.5 1007.5h0M368.5 1008.5h0M369.5 1008.5h0M370.5 1008.5h0M371.5 1008.5h0M372.5 1008.5h0M373.5 1008.5h0M374.5 1008.5h0M375.5 1008.5h0M376.5 1008.5h0M377.5 1008.5h0M378.5 1008.5h0M378.5 1009.5h0M379.5 1008.5h0M380.5 1008.5h0M381.5 1008.5h0M382.5 1008.5h0M383.5 1008.5h0M384.5 1008.5h0M385.5 1008.5h0M386.5 1008.5h0M387.5 1008.5h0M388.5 1008.5h0M389.5 1008.5h0M389.5 1009.5h0M390.5 1008.5h0M390.5 1009.5h0M391.5 1008.5h0M392.5 1008.5h0M393.5 1008.5h0M394.5 1008.5h0M395.5 1008.5h0M396.5 1008.5h0M397.5 1008.5h0M398.5 1008.5h0M399.5 1008.5h0M400.5 1008.5h0M401.5 1008.5h0M402.5 1008.5h0M403.5 1008.5h0M404.5 1008.5h0M405.5 1008.5h0M406.5 1007.5h0M406.5 1008.5h0M407.5 1007.5h0M407.5 1008.5h0M408.5 1008.5h0M409.5 1008.5h0M409.5 1009.5h0M410.5 1008.5h0M411.5 1008.5h0M412.5 1008.5h0M413.5 1008.5h0M414.5 1008.5h0M415.5 1008.5h0M416.5 1008.5h0M417.5 1007.5h0M417.5 1008.5h0M418.5 1008.5h0M419.5 1008.5h0M420.5 1008.5h0M421.5 1008.5h0M421.5 1009.5h0M422.5 1008.5h0M422.5 1009.5h0M423.5 1008.5h0M423.5 1009.5h0M424.5 1008.5h0M425.5 1008.5h0M426.5 1007.5h0M426.5 1008.5h0M427.5 1007.5h0M427.5 1008.5h0M428.5 1007.5h0M428.5 1008.5h0M429.5 1008.5h0M429.5 1009.5h0M430.5 1008.5h0M431.5 1008.5h0M432.5 1008.5h0M432.5 1009.5h0M433.5 1008.5h0M434.5 1008.5h0M435.5 1008.5h0M436.5 1008.5h0M437.5 1008.5h0M438.5 1008.5h0M439.5 1008.5h0M440.5 1008.5h0M441.5 1008.5h0M442.5 1007.5h0M442.5 1008.5h0M443.5 1008.5h0M444.5 1007.5h0M444.5 1008.5h0M445.5 1008.5h0M446.5 1008.5h0M446.5 1009.5h0M447.5 1008.5h0M447.5 1009.5h0M448.5 1008.5h0M449.5 1008.5h0M450.5 1008.5h0M451.5 1008.5h0M452.5 1008.5h0M453.5 1008.5h0M454.5 1007.5h0M454.5 1008.5h0M455.5 1008.5h0M456.5 1007.5h0M456.5 1008.5h0M457.5 1008.5h0M458.5 1008.5h0M459.5 1008.5h0M460.5 1007.5h0M460.5 1008.5h0M461.5 1007.5h0M461.5 1008.5h0M462.5 1007.5h0M462.5 1008.5h0M463.5 1008.5h0M464.5 1008.5h0M465.5 1007.5h0M465.5 1008.5h0M466.5 1007.5h0M467.5 1008.5h0M468.5 1008.5h0M469.5 1008.5h0M470.5 1008.5h0M471.5 1008.5h0M472.5 1007.5h0M472.5 1008.5h0M473.5 1007.5h0M473.5 1008.5h0M474.5 1007.5h0M474.5 1008.5h0M475.5 1008.5h0M476.5 1007.5h0M476.5 1008.5h0M477.5 1007.5h0M477.5 1008.5h0M478.5 1008.5h0M479.5 1008.5h0M480.5 1008.5h0M481.5 1008.5h0M482.5 1008.5h0M483.5 1007.5h0M483.5 1008.5h0M484.5 1007.5h0M484.5 1008.5h0M485.5 1008.5h0M486.5 1008.5h0M487.5 1008.5h0M488.5 1008.5h0M489.5 1007.5h0M489.5 1008.5h0M490.5 1007.5h0M490.5 1008.5h0M491.5 1008.5h0M492.5 1008.5h0M493.5 1008.5h0M494.5 1008.5h0M495.5 1008.5h0M496.5 1008.5h0M497.5 1008.5h0M498.5 1008.5h0M499.5 1008.5h0M500.5 1008.5h0M501.5 1008.5h0M502.5 1008.5h0M503.5 1008.5h0M503.5 1009.5h0M504.5 1008.5h0M504.5 1009.5h0M505.5 1008.5h0M505.5 1009.5h0M506.5 1008.5h0M507.5 1008.5h0M508.5 1008.5h0M509.5 1008.5h0M510.5 1008.5h0M511.5 1008.5h0M512.5 1008.5h0M513.5 1008.5h0M514.5 1008.5h0M515.5 1008.5h0M516.5 1008.5h0M517.5 1008.5h0M518.5 1007.5h0M518.5 1008.5h0M519.5 1008.5h0M520.5 1008.5h0M521.5 1007.5h0M521.5 1008.5h0M522.5 1008.5h0M523.5 1008.5h0M523.5 1009.5h0M524.5 1008.5h0M525.5 1008.5h0M526.5 1008.5h0M527.5 1007.5h0M527.5 1008.5h0M528.5 1007.5h0M528.5 1008.5h0M529.5 1008.5h0M530.5 1008.5h0M531.5 1007.5h0M531.5 1008.5h0M532.5 1008.5h0M533.5 1007.5h0M533.5 1008.5h0M534.5 1007.5h0M534.5 1008.5h0M535.5 1008.5h0M536.5 1008.5h0M537.5 1007.5h0M537.5 1008.5h0M538.5 1007.5h0M538.5 1008.5h0M539.5 1007.5h0M539.5 1008.5h0M540.5 1008.5h0M541.5 1008.5h0M542.5 1008.5h0M542.5 1009.5h0M543.5 1008.5h0M543.5 1009.5h0M544.5 1008.5h0M545.5 1008.5h0M545.5 1009.5h0M546.5 1008.5h0M547.5 1008.5h0M548.5 1008.5h0M549.5 1007.5h0M549.5 1008.5h0M550.5 1007.5h0M550.5 1008.5h0M551.5 1007.5h0M551.5 1008.5h0M552.5 1008.5h0M553.5 1008.5h0M554.5 1008.5h0M554.5 1009.5h0M555.5 1008.5h0M556.5 1007.5h0M556.5 1008.5h0M557.5 1007.5h0M558.5 1007.5h0M559.5 1007.5h0M559.5 1008.5h0M560.5 1008.5h0M561.5 1008.5h0M562.5 1008.5h0M563.5 1008.5h0M564.5 1008.5h0M565.5 1008.5h0M566.5 1008.5h0M567.5 1008.5h0M568.5 1007.5h0M568.5 1008.5h0M569.5 1007.5h0M569.5 1008.5h0M570.5 1007.5h0M570.5 1008.5h0M571.5 1007.5h0M571.5 1008.5h0M572.5 1007.5h0M572.5 1008.5h0M573.5 1008.5h0M574.5 1008.5h0M575.5 1007.5h0M575.5 1008.5h0M576.5 1007.5h0M576.5 1008.5h0M577.5 1008.5h0M578.5 1008.5h0M579.5 1008.5h0M580.5 1008.5h0M581.5 1007.5h0M581.5 1008.5h0M582.5 1007.5h0M582.5 1008.5h0M583.5 1008.5h0M584.5 1007.5h0M584.5 1008.5h0M585.5 1008.5h0M586.5 1008.5h0M587.5 1008.5h0M588.5 1007.5h0M588.5 1008.5h0M589.5 1007.5h0M589.5 1008.5h0M590.5 1007.5h0M590.5 1008.5h0M591.5 1008.5h0M592.5 1008.5h0M593.5 1008.5h0M594.5 1008.5h0M595.5 1008.5h0M596.5 1007.5h0M596.5 1008.5h0M597.5 1008.5h0M598.5 1008.5h0M599.5 1007.5h0M599.5 1008.5h0M600.5 1007.5h0M601.5 1008.5h0M602.5 1008.5h0M603.5 1008.5h0M604.5 1008.5h0M605.5 1008.5h0M606.5 1008.5h0M607.5 1008.5h0M608.5 1008.5h0M609.5 1008.5h0M610.5 1008.5h0M611.5 1008.5h0M612.5 1008.5h0M613.5 1008.5h0M614.5 1008.5h0M614.5 1009.5h0M615.5 1008.5h0M615.5 1009.5h0M616.5 1008.5h0M617.5 1008.5h0M618.5 1008.5h0M619.5 1007.5h0M619.5 1008.5h0M620.5 1008.5h0M621.5 1008.5h0M622.5 1008.5h0M623.5 1008.5h0M624.5 1008.5h0M625.5 1008.5h0M626.5 1007.5h0M626.5 1008.5h0M627.5 1008.5h0M628.5 1008.5h0M629.5 1008.5h0M629.5 1009.5h0M630.5 1008.5h0M631.5 1008.5h0M632.5 1007.5h0M632.5 1008.5h0M633.5 1008.5h0M634.5 1008.5h0M634.5 1009.5h0M635.5 1008.5h0M635.5 1009.5h0M636.5 1008.5h0M636.5 1009.5h0M637.5 1008.5h0M637.5 1009.5h0M638.5 1008.5h0M639.5 1008.5h0M640.5 1008.5h0M641.5 1008.5h0M642.5 1008.5h0M643.5 1008.5h0M643.5 1009.5h0M644.5 1008.5h0M645.5 1008.5h0M646.5 1008.5h0M647.5 1008.5h0M648.5 1008.5h0M649.5 1007.5h0M649.5 1008.5h0M650.5 1007.5h0M650.5 1008.5h0M651.5 1007.5h0M652.5 1008.5h0M653.5 1008.5h0M654.5 1008.5h0M655.5 1008.5h0M656.5 1008.5h0M657.5 1008.5h0M657.5 1009.5h0M658.5 1008.5h0M658.5 1009.5h0M659.5 1008.5h0M660.5 1007.5h0M660.5 1008.5h0M661.5 1007.5h0M661.5 1008.5h0M662.5 1007.5h0M663.5 1008.5h0M664.5 1007.5h0M664.5 1008.5h0M665.5 1008.5h0M666.5 1008.5h0M667.5 1008.5h0M668.5 1008.5h0M669.5 1007.5h0M669.5 1008.5h0M670.5 1008.5h0M671.5 1008.5h0M672.5 1008.5h0M673.5 1008.5h0M674.5 1008.5h0M674.5 1009.5h0M675.5 1008.5h0M675.5 1009.5h0M676.5 1008.5h0M677.5 1007.5h0M677.5 1008.5h0M678.5 1008.5h0M679.5 1008.5h0M680.5 1008.5h0M681.5 1008.5h0M681.5 1009.5h0M682.5 1007.5h0M682.5 1008.5h0M683.5 1008.5h0M684.5 1008.5h0M684.5 1009.5h0M685.5 1008.5h0M685.5 1009.5h0M686.5 1008.5h0M686.5 1009.5h0M687.5 1008.5h0M688.5 1007.5h0M688.5 1008.5h0M689.5 1008.5h0M690.5 1007.5h0M691.5 1007.5h0M691.5 1008.5h0M692.5 1008.5h0M693.5 1008.5h0M693.5 1009.5h0M694.5 1008.5h0M695.5 1008.5h0M696.5 1008.5h0M697.5 1008.5h0M697.5 1009.5h0M698.5 1008.5h0M699.5 1007.5h0M699.5 1008.5h0M700.5 1007.5h0M700.5 1008.5h0M701.5 1008.5h0M702.5 1008.5h0M703.5 1008.5h0M704.5 1008.5h0M705.5 1007.5h0M705.5 1008.5h0M706.5 1007.5h0M706.5 1008.5h0M707.5 1008.5h0M708.5 1008.5h0M709.5 1007.5h0M709.5 1008.5h0M710.5 1007.5h0M710.5 1008.5h0M711.5 1007.5h0M711.5 1008.5h0M712.5 1008.5h0M713.5 1008.5h0M714.5 1007.5h0M714.5 1008.5h0M715.5 1008.5h0M716.5 1007.5h0M716.5 1008.5h0M717.5 1007.5h0M717.5 1008.5h0M718.5 1008.5h0M719.5 1008.5h0M720.5 1007.5h0M720.5 1008.5h0M721.5 1007.5h0M721.5 1008.5h0M722.5 1007.5h0M722.5 1008.5h0M723.5 1007.5h0M723.5 1008.5h0M724.5 1008.5h0M725.5 1008.5h0M726.5 1007.5h0M726.5 1008.5h0M727.5 1007.5h0M728.5 1007.5h0M728.5 1008.5h0M729.5 1008.5h0M730.5 1008.5h0M731.5 1008.5h0M732.5 1007.5h0M732.5 1008.5h0M733.5 1008.5h0M734.5 1008.5h0M735.5 1008.5h0M736.5 1007.5h0M736.5 1008.5h0M737.5 1008.5h0M738.5 1008.5h0M739.5 1007.5h0M739.5 1008.5h0M740.5 1007.5h0M740.5 1008.5h0M741.5 1008.5h0M742.5 1008.5h0M743.5 1007.5h0M743.5 1008.5h0M744.5 1008.5h0M745.5 1008.5h0M746.5 1008.5h0M747.5 1008.5h0M747.5 1009.5h0M748.5 1008.5h0M748.5 1009.5h0M749.5 1008.5h0M749.5 1009.5h0M750.5 1008.5h0M751.5 1008.5h0M752.5 1008.5h0M753.5 1008.5h0M754.5 1008.5h0M755.5 1007.5h0M755.5 1008.5h0M756.5 1008.5h0M757.5 1008.5h0M758.5 1008.5h0M759.5 1008.5h0M760.5 1008.5h0M761.5 1008.5h0M762.5 1008.5h0M763.5 1008.5h0M764.5 1007.5h0M764.5 1008.5h0M765.5 1008.5h0M766.5 1007.5h0M766.5 1008.5h0M767.5 1007.5h0M767.5 1008.5h0M768.5 1007.5h0M768.5 1008.5h0M769.5 1007.5h0M769.5 1008.5h0M770.5 1008.5h0M771.5 1008.5h0M772.5 1007.5h0M772.5 1008.5h0M773.5 1007.5h0M773.5 1008.5h0M774.5 1007.5h0M774.5 1008.5h0M775.5 1007.5h0M775.5 1008.5h0M776.5 1008.5h0M777.5 1007.5h0M777.5 1008.5h0M778.5 1007.5h0M778.5 1008.5h0M779.5 1008.5h0M780.5 1008.5h0M781.5 1007.5h0M781.5 1008.5h0M782.5 1007.5h0M783.5 1008.5h0M784.5 1008.5h0M785.5 1007.5h0M785.5 1008.5h0M786.5 1008.5h0M787.5 1008.5h0M788.5 1007.5h0M788.5 1008.5h0M789.5 1007.5h0M789.5 1008.5h0M790.5 1007.5h0M791.5 1007.5h0M792.5 1007.5h0M792.5 1008.5h0M793.5 1007.5h0M793.5 1008.5h0M794.5 1008.5h0M795.5 1007.5h0M796.5 1007.5h0M797.5 1007.5h0M797.5 1008.5h0M798.5 1008.5h0M799.5 1008.5h0M800.5 1008.5h0M801.5 1008.5h0M802.5 1008.5h0M803.5 1008.5h0M804.5 1008.5h0M805.5 1008.5h0M806.5 1008.5h0M807.5 1007.5h0M807.5 1008.5h0M808.5 1008.5h0M809.5 1008.5h0M810.5 1008.5h0M811.5 1008.5h0M812.5 1008.5h0M813.5 1008.5h0M814.5 1007.5h0M815.5 1008.5h0M816.5 1008.5h0M817.5 1008.5h0M818.5 1008.5h0M819.5 1008.5h0M820.5 1008.5h0M821.5 1008.5h0M822.5 1008.5h0M823.5 1008.5h0M824.5 1008.5h0M825.5 1008.5h0M826.5 1007.5h0M826.5 1008.5h0M827.5 1007.5h0M827.5 1008.5h0M828.5 1007.5h0M828.5 1008.5h0M829.5 1007.5h0M829.5 1008.5h0M830.5 1007.5h0M830.5 1008.5h0M831.5 1008.5h0M832.5 1007.5h0M832.5 1008.5h0M833.5 1007.5h0M833.5 1008.5h0M834.5 1008.5h0M835.5 1008.5h0M836.5 1008.5h0M837.5 1007.5h0M838.5 1008.5h0M839.5 1008.5h0M840.5 1008.5h0M841.5 1008.5h0M842.5 1007.5h0M842.5 1008.5h0M843.5 1008.5h0M844.5 1008.5h0M845.5 1007.5h0M845.5 1008.5h0M846.5 1007.5h0M846.5 1008.5h0M847.5 1008.5h0M848.5 1008.5h0M848.5 1009.5h0M849.5 1008.5h0M850.5 1008.5h0M851.5 1008.5h0M852.5 1008.5h0M853.5 1008.5h0M854.5 1008.5h0M855.5 1007.5h0M855.5 1008.5h0M856.5 1007.5h0M856.5 1008.5h0M857.5 1008.5h0M858.5 1008.5h0M859.5 1008.5h0M860.5 1008.5h0M861.5 1008.5h0M861.5 1009.5h0M862.5 1008.5h0M863.5 1008.5h0M864.5 1008.5h0M865.5 1008.5h0M866.5 1008.5h0M867.5 1008.5h0M868.5 1008.5h0M869.5 1008.5h0M870.5 1008.5h0M871.5 1008.5h0M872.5 1008.5h0M873.5 1008.5h0M874.5 1008.5h0M875.5 1008.5h0M876.5 1008.5h0M877.5 1008.5h0M878.5 1008.5h0M879.5 1008.5h0M880.5 1008.5h0M881.5 1008.5h0M882.5 1008.5h0M883.5 1007.5h0M883.5 1008.5h0M884.5 1007.5h0M884.5 1008.5h0M885.5 1008.5h0M886.5 1007.5h0M886.5 1008.5h0M887.5 1007.5h0M888.5 1007.5h0M888.5 1008.5h0M889.5 1007.5h0M889.5 1008.5h0M890.5 1007.5h0M890.5 1008.5h0M891.5 1008.5h0M892.5 1007.5h0M892.5 1008.5h0M893.5 1007.5h0M894.5 1007.5h0M894.5 1008.5h0M895.5 1008.5h0M896.5 1008.5h0M897.5 1008.5h0M898.5 1008.5h0M899.5 1008.5h0M900.5 1007.5h0M901.5 1007.5h0M901.5 1008.5h0M902.5 1008.5h0M903.5 1007.5h0M903.5 1008.5h0M904.5 1008.5h0M905.5 1008.5h0M905.5 1009.5h0M906.5 1009.5h0M907.5 1008.5h0M908.5 1008.5h0M909.5 1008.5h0M910.5 1008.5h0M911.5 1007.5h0M911.5 1008.5h0M912.5 1008.5h0M913.5 1008.5h0M914.5 1008.5h0M915.5 1008.5h0M916.5 1008.5h0M917.5 1007.5h0M917.5 1008.5h0M918.5 1008.5h0M919.5 1008.5h0M920.5 1007.5h0M920.5 1008.5h0M921.5 1007.5h0M921.5 1008.5h0M922.5 1008.5h0M923.5 1008.5h0M924.5 1007.5h0M924.5 1008.5h0M925.5 1007.5h0M925.5 1008.5h0M926.5 1008.5h0M927.5 1008.5h0M928.5 1008.5h0M929.5 1007.5h0M929.5 1008.5h0M930.5 1007.5h0M930.5 1008.5h0M931.5 1007.5h0M931.5 1008.5h0M932.5 1007.5h0M932.5 1008.5h0M933.5 1007.5h0M933.5 1008.5h0M934.5 1008.5h0M935.5 1007.5h0M935.5 1008.5h0M936.5 1008.5h0M937.5 1008.5h0M938.5 1008.5h0M939.5 1008.5h0M940.5 1008.5h0M941.5 1008.5h0M942.5 1008.5h0M943.5 1008.5h0M944.5 1008.5h0M945.5 1008.5h0M946.5 1007.5h0M946.5 1008.5h0M947.5 1007.5h0M947.5 1008.5h0M948.5 1007.5h0M948.5 1008.5h0M949.5 1008.5h0M950.5 1008.5h0M951.5 1008.5h0M952.5 1008.5h0M953.5 1008.5h0M954.5 1008.5h0M955.5 1007.5h0M955.5 1008.5h0M956.5 1008.5h0M957.5 1008.5h0M958.5 1008.5h0M959.5 1007.5h0M959.5 1008.5h0M960.5 1007.5h0M961.5 1007.5h0M962.5 1007.5h0M962.5 1008.5h0M963.5 1007.5h0M963.5 1008.5h0M964.5 1008.5h0M965.5 1008.5h0M966.5 1008.5h0M967.5 1008.5h0M967.5 1009.5h0M968.5 1008.5h0M968.5 1009.5h0M969.5 1008.5h0M970.5 1008.5h0M971.5 1008.5h0M972.5 1008.5h0M973.5 1008.5h0M973.5 1009.5h0M974.5 1008.5h0M974.5 1009.5h0M975.5 1008.5h0M976.5 1008.5h0M977.5 1008.5h0M977.5 1009.5h0M978.5 1008.5h0M978.5 1009.5h0M979.5 1008.5h0M980.5 1008.5h0M981.5 1008.5h0M982.5 1008.5h0M983.5 1007.5h0M983.5 1008.5h0M984.5 1007.5h0M984.5 1008.5h0M985.5 1008.5h0M986.5 1008.5h0M987.5 1007.5h0M987.5 1008.5h0M988.5 1007.5h0M988.5 1008.5h0M989.5 1008.5h0M990.5 1007.5h0M990.5 1008.5h0M991.5 1007.5h0M991.5 1008.5h0M992.5 1007.5h0M992.5 1008.5h0M993.5 1007.5h0M993.5 1008.5h0M994.5 1008.5h0M995.5 1008.5h0M996.5 1008.5h0M997.5 1008.5h0M998.5 1007.5h0M998.5 1008.5h0M999.5 1007.5h0M1000.5 1007.5h0M1000.5 1008.5h0M1001.5 1007.5h0M1002.5 1007.5h0M1002.5 1008.5h0M1003.5 1008.5h0M1004.5 1008.5h0M1005.5 1007.5h0M1005.5 1008.5h0M1006.5 1007.5h0M1007.5 1007.5h0M1008.5 1008.5h0M1009.5 1008.5h0M1010.5 1008.5h0M1011.5 1008.5h0M1012.5 1008.5h0M1013.5 1008.5h0M1014.5 1008.5h0M1014.5 1009.5h0M1015.5 1008.5h0M1015.5 1009.5h0M1016.5 1008.5h0M1017.5 1007.5h0M1017.5 1008.5h0M1018.5 1008.5h0M1019.5 1008.5h0M1020.5 1008.5h0M1021.5 1008.5h0M1022.5 1008.5h0M1023.5 1008.5h0M1024.5 1008.5h0M1025.5 1007.5h0M1025.5 1008.5h0M1026.5 1007.5h0M1026.5 1008.5h0M1027.5 1007.5h0M1027.5 1008.5h0M1028.5 1008.5h0M1029.5 1008.5h0M1029.5 1009.5h0M1030.5 1008.5h0M1030.5 1009.5h0M1031.5 1007.5h0M1031.5 1008.5h0M1032.5 1008.5h0M1033.5 1008.5h0M1034.5 1008.5h0M1035.5 1008.5h0M1036.5 1008.5h0M1037.5 1008.5h0M1038.5 1007.5h0M1038.5 1008.5h0M1039.5 1007.5h0M1039.5 1008.5h0M1040.5 1007.5h0M1040.5 1008.5h0M1041.5 1008.5h0M1042.5 1008.5h0M1043.5 1007.5h0M1043.5 1008.5h0M1044.5 1008.5h0M1045.5 1008.5h0M1046.5 1008.5h0M1047.5 1007.5h0M1047.5 1008.5h0M1048.5 1008.5h0M1049.5 1008.5h0M1050.5 1007.5h0M1050.5 1008.5h0M1051.5 1007.5h0M1051.5 1008.5h0M1052.5 1007.5h0M1053.5 1007.5h0M1054.5 1008.5h0M1055.5 1008.5h0M1056.5 1008.5h0M1057.5 1008.5h0M1058.5 1008.5h0M1059.5 1008.5h0M1060.5 1008.5h0M1061.5 1008.5h0M1062.5 1007.5h0M1062.5 1008.5h0M1063.5 1007.5h0M1063.5 1008.5h0M1064.5 1007.5h0M1064.5 1008.5h0M1065.5 1008.5h0M1066.5 1007.5h0M1066.5 1008.5h0M1067.5 1008.5h0M1068.5 1008.5h0M1069.5 1008.5h0M1070.5 1008.5h0M1071.5 1008.5h0M1072.5 1008.5h0M1073.5 1008.5h0M1074.5 1008.5h0M1075.5 1008.5h0M1076.5 1007.5h0M1076.5 1008.5h0M1077.5 1007.5h0M1078.5 1007.5h0M1078.5 1008.5h0M1079.5 1007.5h0M1079.5 1008.5h0M1080.5 1007.5h0M1080.5 1008.5h0M1081.5 1008.5h0M1082.5 1008.5h0M1082.5 1009.5h0M1083.5 1008.5h0M1083.5 1009.5h0M1084.5 1008.5h0M1085.5 1008.5h0M1086.5 1008.5h0M1087.5 1007.5h0M1087.5 1008.5h0M1088.5 1007.5h0M1089.5 1007.5h0M1089.5 1008.5h0M1090.5 1008.5h0M1091.5 1008.5h0M1092.5 1008.5h0M1093.5 1008.5h0M1094.5 1008.5h0M1095.5 1008.5h0M1096.5 1008.5h0M1097.5 1007.5h0M1097.5 1008.5h0M1098.5 1008.5h0M1099.5 1008.5h0M1100.5 1008.5h0M1101.5 1007.5h0M1101.5 1008.5h0M1102.5 1007.5h0M1102.5 1008.5h0M1103.5 1008.5h0M1104.5 1008.5h0M1105.5 1008.5h0M1106.5 1008.5h0M1106.5 1009.5h0M1107.5 1008.5h0M1108.5 1008.5h0M1109.5 1008.5h0M1110.5 1008.5h0M1111.5 1008.5h0M1111.5 1009.5h0M1112.5 1008.5h0M1113.5 1007.5h0M1113.5 1008.5h0M1114.5 1007.5h0M1114.5 1008.5h0M1115.5 1007.5h0M1115.5 1008.5h0M1116.5 1007.5h0M1117.5 1007.5h0M1117.5 1008.5h0M1118.5 1008.5h0M1118.5 1009.5h0M1119.5 1008.5h0M1120.5 1008.5h0M1121.5 1006.5h0M1122.5 1006.5h0M1122.5 1007.5h0M1123.5 1006.5h0M1123.5 1007.5h0M1124.5 1007.5h0M1125.5 1007.5h0M1126.5 1007.5h0M1127.5 1007.5h0M1128.5 1007.5h0M1129.5 1007.5h0M1129.5 1008.5h0M1130.5 1007.5h0M1131.5 1007.5h0M1132.5 1007.5h0M1133.5 1007.5h0M1134.5 1007.5h0M1135.5 1007.5h0M1136.5 1007.5h0M1137.5 1007.5h0M1138.5 1007.5h0M1139.5 1007.5h0M1140.5 1007.5h0M1141.5 1007.5h0M1142.5 1007.5h0M1143.5 1007.5h0M1144.5 1007.5h0M1145.5 1007.5h0M1146.5 1007.5h0M1147.5 1007.5h0M1148.5 1007.5h0M1149.5 1007.5h0M1150.5 1007.5h0M1151.5 1007.5h0M1152.5 1007.5h0M1153.5 1007.5h0M1154.5 1006.5h0M1154.5 1007.5h0M1155.5 1006.5h0M1156.5 1006.5h0M1156.5 1007.5h0M1157.5 1007.5h0M1158.5 1007.5h0M1159.5 1007.5h0M1159.5 1008.5h0M1160.5 1007.5h0M1161.5 1007.5h0M1162.5 1007.5h0M1163.5 1007.5h0M1164.5 1007.5h0M1165.5 1007.5h0M1166.5 1007.5h0M1166.5 1008.5h0M1167.5 1007.5h0M1168.5 1007.5h0M1169.5 1006.5h0M1169.5 1007.5h0M1170.5 1006.5h0M1170.5 1007.5h0M1171.5 1006.5h0M1171.5 1007.5h0M1172.5 1006.5h0M1172.5 1007.5h0M1173.5 1006.5h0M1173.5 1007.5h0M1174.5 1005.5h0M1174.5 1006.5h0M1174.5 1007.5h0M1175.5 1005.5h0M1175.5 1006.5h0M1175.5 1007.5h0M1176.5 1005.5h0M1176.5 1006.5h0M1177.5 1006.5h0M1178.5 1006.5h0M1179.5 1006.5h0M1180.5 1006.5h0M1180.5 1007.5h0M1181.5 1007.5h0M1182.5 1007.5h0M1183.5 1006.5h0M1183.5 1007.5h0M1184.5 1006.5h0M1184.5 1007.5h0M1185.5 1006.5h0M1186.5 1006.5h0M1187.5 1006.5h0M1188.5 1006.5h0M1189.5 1006.5h0M1190.5 1006.5h0M1190.5 1007.5h0M1191.5 1007.5h0M1192.5 1007.5h0M1193.5 1007.5h0M1194.5 1007.5h0M1194.5 1008.5h0M1195.5 1007.5h0M1196.5 1007.5h0M1197.5 1007.5h0M1198.5 1007.5h0M1199.5 1007.5h0M1200.5 1007.5h0M1201.5 1007.5h0M1202.5 1007.5h0M1203.5 1006.5h0M1203.5 1007.5h0M1204.5 1006.5h0M1204.5 1007.5h0M1205.5 1006.5h0M1205.5 1007.5h0M1206.5 1006.5h0M1207.5 1006.5h0M1208.5 1006.5h0M1209.5 1006.5h0M1209.5 1007.5h0M1210.5 1007.5h0M1211.5 1007.5h0M1212.5 1007.5h0M1213.5 1007.5h0M1214.5 1007.5h0M1215.5 1007.5h0M1216.5 1007.5h0M1217.5 1007.5h0M1218.5 1007.5h0M1219.5 1007.5h0M1220.5 1007.5h0M1221.5 1007.5h0M1221.5 1008.5h0M1222.5 1007.5h0M1222.5 1008.5h0M1223.5 1007.5h0M1223.5 1008.5h0M1224.5 1007.5h0M1225.5 1007.5h0M1226.5 1007.5h0M1227.5 1007.5h0M1228.5 1007.5h0M1229.5 1007.5h0M1230.5 1007.5h0M1231.5 1007.5h0M1232.5 1007.5h0M1233.5 1007.5h0M1234.5 1007.5h0M1235.5 1007.5h0M1236.5 1007.5h0M1237.5 1007.5h0M1238.5 1007.5h0M1239.5 1007.5h0M1240.5 1007.5h0M1240.5 1008.5h0M1241.5 1007.5h0M1241.5 1008.5h0M1242.5 1007.5h0M1243.5 1007.5h0M1244.5 1007.5h0M1245.5 1006.5h0M1245.5 1007.5h0M1246.5 1006.5h0M1246.5 1007.5h0M1247.5 1007.5h0M1248.5 1007.5h0M1249.5 1007.5h0M1250.5 1006.5h0M1250.5 1007.5h0M1251.5 1006.5h0M1251.5 1007.5h0M1252.5 1006.5h0M1252.5 1007.5h0M1253.5 1006.5h0M1253.5 1007.5h0M1254.5 1007.5h0M1255.5 1007.5h0M1256.5 1007.5h0M1257.5 1007.5h0M1258.5 1007.5h0M1259.5 1007.5h0M1260.5 1006.5h0M1260.5 1007.5h0M1261.5 1007.5h0M1262.5 1007.5h0M1263.5 1006.5h0M1263.5 1007.5h0M1264.5 1006.5h0M1264.5 1007.5h0M1265.5 1007.5h0M1266.5 1007.5h0M1267.5 1007.5h0M1268.5 1007.5h0M1269.5 1007.5h0M1270.5 1007.5h0M1271.5 1007.5h0M1272.5 1007.5h0M1273.5 1007.5h0M1274.5 1007.5h0M1275.5 1007.5h0M1276.5 1007.5h0M1277.5 1007.5h0M1278.5 1007.5h0M1279.5 1007.5h0M1280.5 1007.5h0M1281.5 1007.5h0M1282.5 1007.5h0M1283.5 1007.5h0M1284.5 1007.5h0M1285.5 1007.5h0M1286.5 1007.5h0M1287.5 1007.5h0M1288.5 1007.5h0M1289.5 1007.5h0M1290.5 1007.5h0M1290.5 1008.5h0M1291.5 1008.5h0M1292.5 1008.5h0M1293.5 1007.5h0M1294.5 1007.5h0M1295.5 1006.5h0M1295.5 1007.5h0M1296.5 1006.5h0M1296.5 1007.5h0M1297.5 1006.5h0M1297.5 1007.5h0M1298.5 1007.5h0M1299.5 1007.5h0M1300.5 1007.5h0M1301.5 1007.5h0M1302.5 1007.5h0" stroke="#000" stroke-width="3.7" stroke-linecap="round" fill="none"/>
<line x1="105.5" y1="954.5" x2="1485.5" y2="954.5" stroke="#000" stroke-width="1" shape-rendering="crispEdges"/>
<g stroke="#800080" stroke-width="2.08" stroke-dasharray="2.08 3.44" fill="none"><line x1="162.3" y1="1011.5" x2="162.3" y2="725.5"/><line x1="1121.1" y1="1011.5" x2="1121.1" y2="725.5"/><line x1="1302.9" y1="1011.5" x2="1302.9" y2="725.5"/></g>
</g>
<rect x="105.5" y="725.5" width="1380.0" height="286.0" fill="none" stroke="#000" stroke-width="1" shape-rendering="crispEdges"/>
<g stroke="#000" stroke-width="1" shape-rendering="crispEdges"><line x1="162.5" y1="1011.5" x2="162.5" y2="1016.5"/><line x1="396.5" y1="1011.5" x2="396.5" y2="1016.5"/><line x1="629.5" y1="1011.5" x2="629.5" y2="1016.5"/><line x1="863.5" y1="1011.5" x2="863.5" y2="1016.5"/><line x1="1097.5" y1="1011.5" x2="1097.5" y2="1016.5"/><line x1="1330.5" y1="1011.5" x2="1330.5" y2="1016.5"/></g><g font-size="13.89px" text-anchor="middle" fill="#000"><text x="163.4" y="1031.8">0</text><text x="396.3" y="1031.8">1000</text><text x="630.0" y="1031.8">2000</text><text x="862.6" y="1031.8">3000</text><text x="1096.7" y="1031.8">4000</text><text x="1328.9" y="1031.8">5000</text></g>
<g stroke="#000" stroke-width="1" shape-rendering="crispEdges"><line x1="100.5" y1="758.5" x2="105.5" y2="758.5"/><line x1="100.5" y1="791.5" x2="105.5" y2="791.5"/><line x1="100.5" y1="823.5" x2="105.5" y2="823.5"/><line x1="100.5" y1="856.5" x2="105.5" y2="856.5"/><line x1="100.5" y1="889.5" x2="105.5" y2="889.5"/><line x1="100.5" y1="921.5" x2="105.5" y2="921.5"/><line x1="100.5" y1="957.5" x2="105.5" y2="957.5"/><line x1="100.5" y1="983.5" x2="105.5" y2="983.5"/><line x1="100.5" y1="1009.5" x2="105.5" y2="1009.5"/><line x1="102.5" y1="970.5" x2="105.5" y2="970.5"/><line x1="102.5" y1="996.5" x2="105.5" y2="996.5"/></g><g font-size="13.89px" text-anchor="end" fill="#000"><text x="95.8" y="763.6">not Kalman</text><text x="95.8" y="796.6">not track</text><text x="95.8" y="828.6">Sat. pixel.</text><text x="95.8" y="861.6">Ion. rad.</text><text x="95.8" y="894.6">dr &gt; 5</text><text x="95.8" y="926.6">OBS not OK</text><text x="95.2" y="962.1">10</text><text x="95.2" y="988.1">5</text><text x="95.2" y="1014.1">0</text></g>
<text transform="translate(68.6,983.3) rotate(-90)" font-size="13.89px" text-anchor="middle">dr</text>
</svg>
</body></html>
